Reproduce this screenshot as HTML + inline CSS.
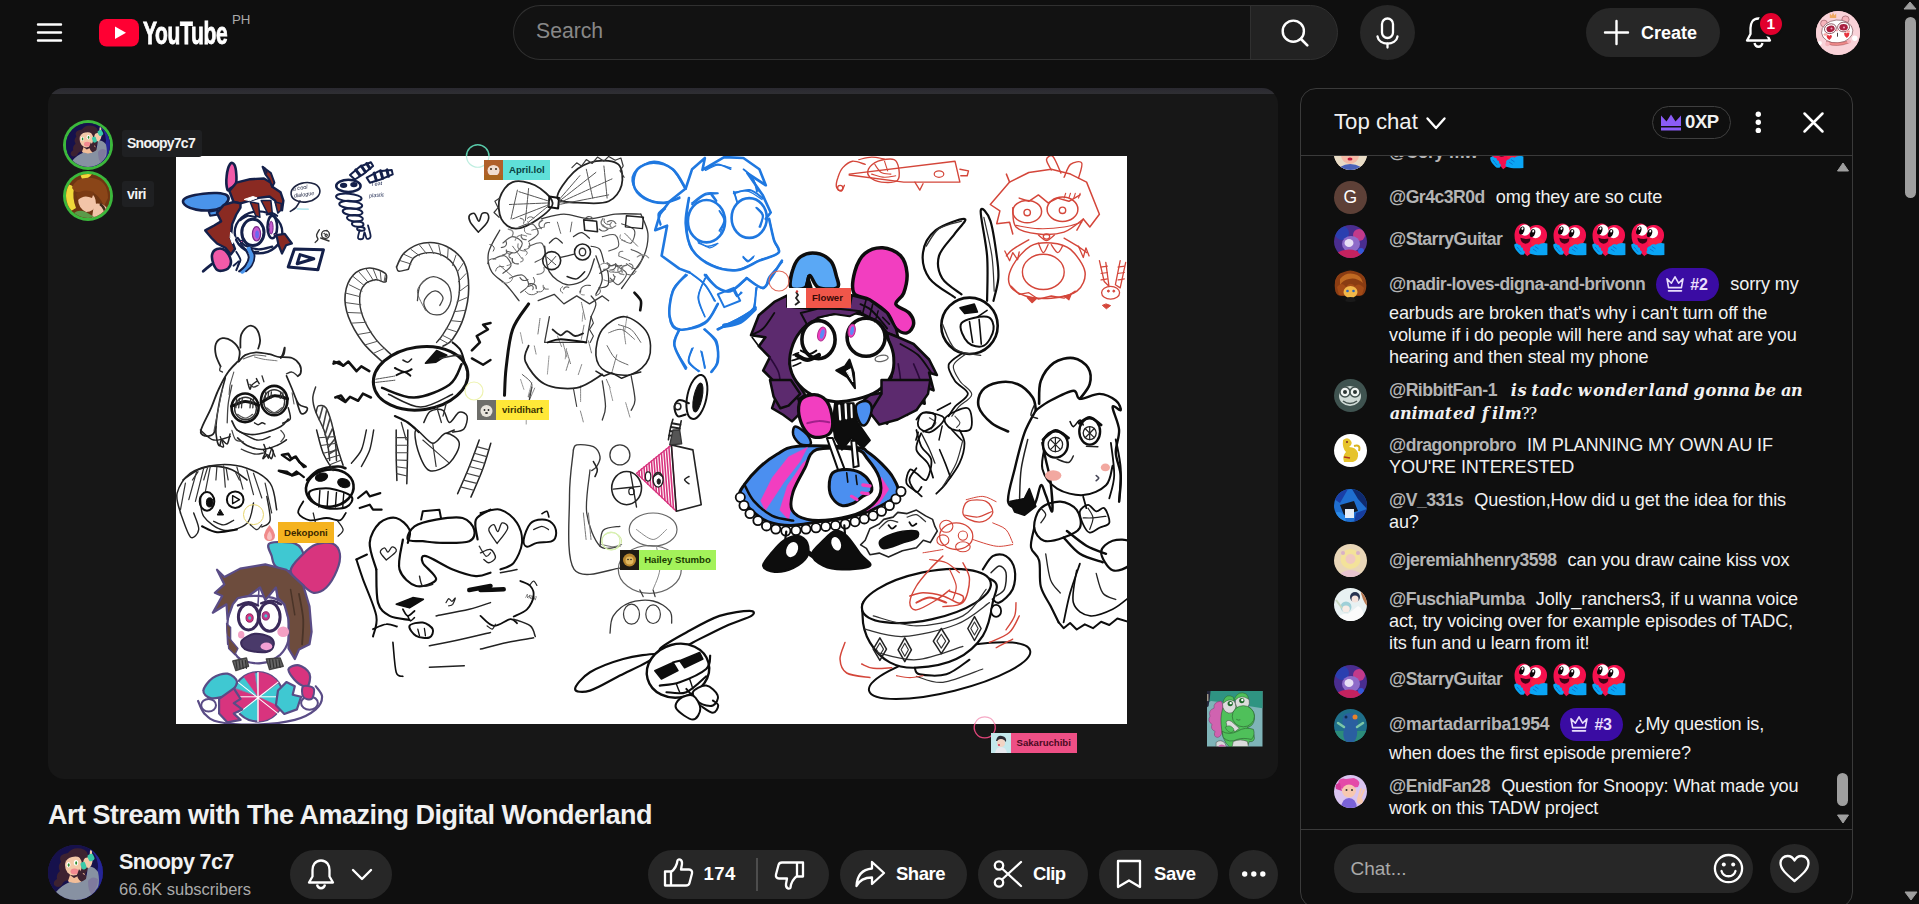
<!DOCTYPE html>
<html lang="en">
<head>
<meta charset="utf-8">
<title>Art Stream with The Amazing Digital Wonderland - YouTube</title>
<style>
*{box-sizing:border-box;margin:0;padding:0}
html,body{width:1919px;height:904px;overflow:hidden;background:#0f0f0f}
body{position:relative;font-family:"Liberation Sans",sans-serif;color:#f1f1f1}
.abs{position:absolute}
.t{position:absolute;white-space:nowrap;line-height:1}
svg{position:absolute;overflow:visible}
.pill{position:absolute;background:#272727;border-radius:25px}
.b{font-weight:bold}
/* chat */
.av{position:absolute;left:1334px;width:33px;height:33px;border-radius:50%;overflow:hidden}
.msg{position:absolute;left:1389px;width:430px;font-size:18.1px;line-height:22px;color:#f1f1f1;letter-spacing:-0.13px}
.au{color:#b4b4b4;font-weight:bold;margin-right:11px;letter-spacing:-0.5px;font-size:17.6px}
.em{display:inline-block;width:33.600px;height:33.600px;vertical-align:middle;margin:0 2.600px;position:relative}
.em svg{position:absolute;left:0;top:0}
.bdg{display:inline-block;vertical-align:middle;width:63px;height:33px;border-radius:17px;background:#3a0ca3;margin-right:11px;position:relative;top:-0.300px}
.bdg span{position:absolute;left:34px;top:8.5px;font-size:16px;font-weight:bold;color:#e9defc;line-height:1;letter-spacing:-0.3px}
.mbi{font-family:"DejaVu Math TeX Gyre","DejaVu Serif",serif;font-size:16.2px;letter-spacing:-1.1px;word-spacing:0.5px}
.av{left:33px}
/* tags on video */
.tag{position:absolute;height:20px;font-size:9.600px;line-height:20px;color:#111;font-weight:bold;white-space:nowrap}
.tag i{position:absolute;left:0;top:0;width:19px;height:20px;display:block}
.tag span{position:absolute;left:25px;top:0}
</style>
</head>
<body>
<!-- ============ MASTHEAD ============ -->
<div id="masthead">
  <svg class="abs" style="left:37px;top:20px" width="25" height="25" viewBox="0 0 25 25"><path d="M1 4.5h23M1 12.5h23M1 20.5h23" stroke="#fff" stroke-width="2.4" stroke-linecap="round" fill="none"/></svg>
  <svg class="abs" style="left:99px;top:19px" width="40" height="28" viewBox="0 0 40 28"><rect x="0" y="0" width="40" height="27.5" rx="7.5" ry="8" fill="#ff0033"/><path d="M16 7.5 L27 13.8 L16 20z" fill="#fff"/></svg>
  <div class="t b" id="ytword" style="left:142.500px;top:17px;font-size:32px;color:#fff;transform-origin:0 0;transform:scaleX(0.655);letter-spacing:-0.5px;-webkit-text-stroke:0.9px #fff">YouTube</div>
  <div class="t" id="ph" style="left:232px;top:13px;font-size:13.3px;color:#aaa">PH</div>

  <div class="abs" style="left:513px;top:5px;width:738px;height:55px;border:1px solid #303030;border-right:none;border-radius:28px 0 0 28px;background:#121212"></div>
  <div class="t" id="searchph" style="left:536px;top:20px;font-size:21.2px;color:#888">Search</div>
  <div class="abs" style="left:1250px;top:5px;width:88px;height:55px;border:1px solid #303030;border-radius:0 28px 28px 0;background:#222"></div>
  <svg style="left:1278px;top:16px" width="34" height="34" viewBox="0 0 34 34"><circle cx="15.3" cy="15.2" r="10.6" fill="none" stroke="#fff" stroke-width="2.4"/><path d="M23 23 L29.3 29.3" stroke="#fff" stroke-width="2.6" stroke-linecap="round"/></svg>
  <div class="abs" style="left:1360px;top:5px;width:55px;height:55px;border-radius:50%;background:#272727"></div>
  <svg style="left:1373px;top:15px" width="30" height="36" viewBox="0 0 30 36"><rect x="9" y="3.5" width="11" height="19.5" rx="5.5" fill="none" stroke="#fff" stroke-width="2.3"/><path d="M4.5 21.5 C6 31 23 31 24.5 21.5" fill="none" stroke="#fff" stroke-width="2.3" stroke-linecap="round"/><path d="M14.5 28.5V32.5" stroke="#fff" stroke-width="2.3" stroke-linecap="round"/></svg>

  <div class="pill" style="left:1586px;top:8px;width:134px;height:49px"></div>
  <svg style="left:1604px;top:20px" width="25" height="25" viewBox="0 0 25 25"><path d="M12.5 1v23M1 12.5h23" stroke="#fff" stroke-width="2.4" stroke-linecap="round"/></svg>
  <div class="t b" id="create" style="left:1641px;top:23.500px;font-size:18px;color:#fff">Create</div>

  <svg style="left:1744px;top:15px" width="30" height="36" viewBox="0 0 30 36"><path d="M14.5 3.5 C8.5 3.5 6.5 8.5 6.5 13 V19 L3 25.5 H26 L22.5 19 V13 C22.500 8.5 20.500 3.500 14.500 3.500Z" fill="none" stroke="#fff" stroke-width="2.3" stroke-linejoin="round"/><path d="M10.500 28 C11.500 33 17.500 33 18.500 28" fill="none" stroke="#fff" stroke-width="2.3"/></svg>
  <div class="abs" style="left:1758px;top:11px;width:26px;height:26px;border-radius:50%;background:#e1002d;border:2px solid #0f0f0f"></div>
  <div class="t b" style="left:1766.500px;top:15.500px;font-size:15.500px;color:#fff">1</div>

  <div class="abs" id="meav" style="left:1816px;top:11px;width:44px;height:44px;border-radius:50%;overflow:hidden;background:#f7c6cc">
    <svg style="left:0;top:0" width="44" height="44" viewBox="0 0 44 44"><rect width="44" height="44" fill="#f9d2d8"/><path d="M13.800 7 L13.800 2.500 L15.800 4.500 L17 1.600 L18.500 4.500 L20.200 2.300 L20.200 7Z" fill="#f0a860"/><circle cx="8" cy="12.500" r="3.400" fill="#f6b4bc" stroke="#7a3a44" stroke-width="0.500"/><circle cx="29.500" cy="8.500" r="3.600" fill="#f6b4bc" stroke="#7a3a44" stroke-width="0.500"/><ellipse cx="21.200" cy="20.500" rx="15.700" ry="11.500" fill="#fff" stroke="#6b3a42" stroke-width="0.600" transform="rotate(-5 21.200 20.500)"/><ellipse cx="14.400" cy="17.700" rx="6" ry="4.800" fill="#fff" stroke="#6b2a35" stroke-width="0.700" transform="rotate(-15 14.400 17.700)"/><ellipse cx="27.600" cy="16" rx="6" ry="4.800" fill="#fff" stroke="#6b2a35" stroke-width="0.700" transform="rotate(-5 27.600 16)"/><ellipse cx="14.600" cy="17.900" rx="4.200" ry="3.200" fill="#a8203f" transform="rotate(-15 14.600 17.900)"/><ellipse cx="27.600" cy="16.200" rx="4.200" ry="3.200" fill="#a8203f"/><circle cx="15.500" cy="17.500" r="1" fill="#f5a0c0"/><circle cx="28" cy="16.500" r="1" fill="#f5a0c0"/><path d="M10.500 25 Q12 23 13.300 25 Q14.600 23 16 25 Q16 27 13.300 29 Q10.500 27 10.500 25Z" fill="#e8323d"/><path d="M28 22.500 Q29.500 20.500 30.800 22.500 Q32 20.500 33.500 22.500 Q33.500 25 30.800 27 Q28 25 28 22.500Z" fill="#e8323d"/><ellipse cx="9.500" cy="23.500" rx="2" ry="1.300" fill="#f7a8a8"/><ellipse cx="32" cy="20.500" rx="2.200" ry="1.300" fill="#f7a8a8"/><path d="M21.500 21.800 V25.700" stroke="#3a2a2a" stroke-width="0.900"/><circle cx="21" cy="19.500" r="0.900" fill="#f29aa0"/><path d="M10.500 30.500 Q21 33.500 33.500 29.500 L33 32 Q21 36.500 11.500 33Z" fill="#f08a8a" stroke="#8a3a40" stroke-width="0.400"/><circle cx="11.500" cy="33" r="2.300" fill="#f6b4bc"/><circle cx="33" cy="30.500" r="2" fill="#f6b4bc"/><circle cx="3.900" cy="32" r="2" fill="#fff"/><circle cx="38.800" cy="27.300" r="2.700" fill="#fff"/></svg>
  </div>
</div>

<!-- page scrollbar -->
<div class="abs" style="left:1905px;top:17px;width:11px;height:181px;border-radius:6px;background:#9f9f9f"></div>
<svg style="left:1903px;top:1px" width="14" height="9" viewBox="0 0 14 9"><path d="M7 1 L13 8 H1Z" fill="#9f9f9f" stroke="#9f9f9f" stroke-linejoin="round" stroke-width="1"/></svg>
<svg style="left:1904px;top:891px" width="14" height="10" viewBox="0 0 14 10"><path d="M1 1 H13 L7 9Z" fill="#9f9f9f" stroke="#9f9f9f" stroke-linejoin="round" stroke-width="1"/></svg>

<!-- ============ PLAYER ============ -->
<div id="player" class="abs" style="left:48px;top:88px;width:1230px;height:691px;border-radius:16px;background:#171717;overflow:hidden">
  <div class="abs" style="left:0;top:0;width:1230px;height:6px;background:linear-gradient(#2a2930,#2f2f33)"></div>
  <div class="abs" id="canvas" style="left:127.500px;top:68px;width:951px;height:567.500px;background:#fff;overflow:hidden">
<svg class="abs" style="left:0;top:0;filter:blur(0.5px)" width="951" height="567.5" viewBox="175.5 156 951 567.5" font-family="Liberation Sans, sans-serif">
<path d="M182.6 200.6C183.1 199 185.5 197.6 188.8 196.5C192.2 195.3 198 194.3 202.7 193.7C207.3 193.1 212.6 192.8 216.5 193C220.4 193.3 224.3 193.8 226.2 195.1C228 196.4 228.5 198.6 227.6 200.6C226.6 202.7 223.6 205.9 220.6 207.6C217.6 209.2 213.7 210 209.6 210.3C205.4 210.7 199.7 210.3 195.7 209.6C191.8 208.9 188.3 207.7 186.1 206.2C183.9 204.7 182.1 202.3 182.6 200.6Z" fill="#4a94ea" stroke="#14204a" stroke-width="2.6" stroke-linecap="round" stroke-linejoin="round"/>
<path d="M208.2 211.7L216.5 210.3L217.9 214.5L209.6 215.8Z" fill="#4a94ea" stroke="#14204a" stroke-width="2" stroke-linecap="round" stroke-linejoin="round"/>
<path d="M226.9 189.6C226.2 187.5 225.7 180 226.2 175.7C226.6 171.5 228.4 165.8 229.6 164C230.9 162.1 232.7 163 233.8 164.7C234.8 166.4 235.6 171.1 235.8 174.4C236.1 177.6 236.1 181.7 235.2 184C234.2 186.3 231.7 187.3 230.3 188.2C228.9 189.1 227.6 191.6 226.9 189.6Z" fill="#f25aa8" stroke="#14204a" stroke-width="2.6" stroke-linecap="round" stroke-linejoin="round"/>
<ellipse cx="258" cy="232.4" rx="23.8" ry="21" fill="#fff" stroke="#14204a" stroke-width="2.4"/>
<path d="M228.9 191L235.8 182.7L249.7 179.2L263.5 178.5L270.4 182.7L271.8 186.8L280.1 192.3L282.9 200.6L281.5 210.3L277.3 207.6L274.6 200.6L269 196.5L258 197.9L249.7 200.6L240 203.4L233.1 202Z" fill="#8a2a22" stroke="#14204a" stroke-width="2.4" stroke-linecap="round" stroke-linejoin="round"/>
<path d="M233.1 202L223.4 204.8L216.5 213.1L220.6 221.4L213.7 225.5L204.7 230.4L211 238L216.5 243.5L224.8 247.7L230.3 254.6L234.5 249L230.3 238L231.7 224.1L235.8 214.5L240 207.6L240 203.4Z" fill="#8a2a22" stroke="#14204a" stroke-width="2.4" stroke-linecap="round" stroke-linejoin="round"/>
<path d="M262.1 166.8L270.4 173L273.9 182.7L271.8 186.8L269 179.9L264.9 174.4Z" fill="#8a2a22" stroke="#14204a" stroke-width="2" stroke-linecap="round" stroke-linejoin="round"/>
<path d="M262.1 166.8C262.6 167.1 264.2 167.8 264.9 168.8C265.6 169.9 266 172.3 266.3 173" fill="none" stroke="#14204a" stroke-width="1.5" stroke-linecap="round" stroke-linejoin="round"/>
<path d="M249.7 202L255.2 215.8L259.4 217.2L258 203.4Z" fill="#8a2a22" stroke="#14204a" stroke-width="1.5" stroke-linecap="round" stroke-linejoin="round"/>
<path d="M260.7 200.6L267.7 214.5L271.8 213.1L270.4 200.6Z" fill="#8a2a22" stroke="#14204a" stroke-width="1.5" stroke-linecap="round" stroke-linejoin="round"/>
<path d="M274.6 202L277.3 213.1L280.4 210.3L280.8 203.4Z" fill="#8a2a22" stroke="#14204a" stroke-width="1.5" stroke-linecap="round" stroke-linejoin="round"/>
<path d="M230.3 232.4L234.7 238L232 243.8L229.8 238Z" fill="#fff" stroke="#fff" stroke-width="1" stroke-linecap="round" stroke-linejoin="round"/>
<path d="M244.1 199.3L252.4 196.5L256.6 197.9L249.7 200.6Z" fill="#fff" stroke="#fff" stroke-width="1" stroke-linecap="round" stroke-linejoin="round"/>
<ellipse cx="252.4" cy="232.4" rx="11.1" ry="13.1" fill="#fff" stroke="#14204a" stroke-width="3"/>
<ellipse cx="256" cy="233.8" rx="4.1" ry="7.2" fill="#c65ad0" stroke="#7a2a8a" stroke-width="1.2"/>
<ellipse cx="256.6" cy="234.5" rx="1.9" ry="4.1" fill="#6a6af0" stroke="none" stroke-width="0"/>
<ellipse cx="271.8" cy="226.9" rx="4.8" ry="11.3" fill="#fff" stroke="#14204a" stroke-width="2.6"/>
<ellipse cx="270.7" cy="227.6" rx="1.9" ry="6.4" fill="#c65ad0" stroke="#7a2a8a" stroke-width="1"/>
<path d="M240 220C241.2 219.3 244.4 216.3 246.9 215.8C249.4 215.4 253.8 217 255.2 217.2" fill="none" stroke="#14204a" stroke-width="2.2" stroke-linecap="round" stroke-linejoin="round"/>
<path d="M266.3 214.5C267.2 214.2 270.1 212.9 271.8 213.1C273.5 213.3 275.8 215.4 276.6 215.8" fill="none" stroke="#14204a" stroke-width="2.2" stroke-linecap="round" stroke-linejoin="round"/>
<path d="M276 235.2L284.3 233.8L291.4 243.5L285.6 245.2L281.5 253.5L278 244.9Z" fill="#8a2a22" stroke="#14204a" stroke-width="2.2" stroke-linecap="round" stroke-linejoin="round"/>
<path d="M237.2 238C238.4 239.2 240.7 243.3 244.1 245.2C247.6 247.1 253.4 249.1 258 249.3C262.6 249.5 269.5 247 271.8 246.6" fill="none" stroke="#14204a" stroke-width="2.2" stroke-linecap="round" stroke-linejoin="round"/>
<path d="M240 243.5C241.2 244.7 243.9 249 246.9 250.4C249.9 251.8 256.1 251.6 258 251.8" fill="none" stroke="#14204a" stroke-width="1.6" stroke-linecap="round" stroke-linejoin="round"/>
<ellipse cx="241.1" cy="241.4" rx="1.4" ry="1.1" fill="#f25aa8" stroke="#14204a" stroke-width="1.2"/>
<ellipse cx="274.6" cy="234.5" rx="1.1" ry="1.1" fill="#f25aa8" stroke="#14204a" stroke-width="1.2"/>
<path d="M211.6 254.6C212.2 252 214.3 249.7 216.5 249C218.7 248.3 222.5 248.6 224.8 250.4C227.1 252.3 229.9 257.1 230.3 260.1C230.8 263.1 229.6 266.6 227.6 268.4C225.5 270.2 220.3 271.3 217.9 270.6C215.5 269.9 214.1 266.9 213 264.3C212 261.6 211.1 257.1 211.6 254.6Z" fill="#f25aa8" stroke="#14204a" stroke-width="2.6" stroke-linecap="round" stroke-linejoin="round"/>
<path d="M248.3 249C248.8 250.2 251.3 253.2 251.3 256C251.3 258.7 249.9 263.1 248.3 265.6C246.7 268.2 242.8 270.5 241.7 271.4" fill="none" stroke="#4a94ea" stroke-width="4.5" stroke-linecap="round" stroke-linejoin="round"/>
<path d="M245.5 250.4C246 251.6 248.4 254.8 248.3 257.3C248.2 259.9 246.5 263.3 244.8 265.6C243.2 268 239.7 270.5 238.6 271.4" fill="none" stroke="#14204a" stroke-width="2" stroke-linecap="round" stroke-linejoin="round"/>
<path d="M251.1 249C251.6 250.2 254.1 253.2 254.1 256C254.1 258.7 252.8 263.1 251.3 265.6C249.9 268.2 246.5 270.5 245.5 271.4" fill="none" stroke="#14204a" stroke-width="1.8" stroke-linecap="round" stroke-linejoin="round"/>
<path d="M202.7 271.2C204 270 209.6 265.4 211 264.3" fill="none" stroke="#14204a" stroke-width="2.8" stroke-linecap="round" stroke-linejoin="round"/>
<path d="M233.1 265.6C234.1 264.9 238.4 260.7 238.9 261.5C239.4 262.2 236.4 268.6 235.8 270.1" fill="none" stroke="#14204a" stroke-width="2" stroke-linecap="round" stroke-linejoin="round"/>
<path d="M235.8 251.8C236.5 253.2 239.8 257.8 240 260.1C240.2 262.4 237.7 264.7 237.2 265.6" fill="none" stroke="#14204a" stroke-width="1.8" stroke-linecap="round" stroke-linejoin="round"/>
<ellipse cx="305" cy="192.3" rx="14.5" ry="9.7" fill="none" stroke="#1d2440" stroke-width="1.6" transform="rotate(-8 305 192.3)"/>
<path d="M299.5 200.9C298.8 202 296.9 205.8 295.3 207.6C293.7 209.3 290.7 210.8 289.8 211.4" fill="none" stroke="#1d2440" stroke-width="1.6" stroke-linecap="round" stroke-linejoin="round"/>
<text x="292.5" y="190.7" font-size="5.6" fill="#1d2440" font-style="italic" font-weight="normal" transform="rotate(-8 292.5 190.7)">a cool</text>
<text x="293.7" y="197.6" font-size="5.4" fill="#1d2440" font-style="italic" font-weight="normal" transform="rotate(-8 293.7 197.6)">dialogue</text>
<path d="M296.7 208.9C298.5 209 305.9 209.2 307.8 209.2" fill="none" stroke="#9fe0e8" stroke-width="1.2" stroke-linecap="round" stroke-linejoin="round"/>
<ellipse cx="325" cy="234.5" rx="3.9" ry="3.9" fill="none" stroke="#333" stroke-width="1.4"/>
<ellipse cx="323.7" cy="233.6" rx="0.4" ry="0.4" fill="#333" stroke="#333" stroke-width="1"/>
<ellipse cx="326.4" cy="230.4" rx="0.4" ry="0.4" fill="#333" stroke="#333" stroke-width="1"/>
<ellipse cx="325.7" cy="235.2" rx="1.1" ry="1.1" fill="none" stroke="#333" stroke-width="1.2"/>
<path d="M318.8 229.7C318.4 230.6 316.3 233.6 316.1 235.2C315.8 236.8 317.7 238.2 317.4 239.4C317.2 240.6 315.1 241.9 314.7 242.4" fill="none" stroke="#333" stroke-width="1.4" stroke-linecap="round" stroke-linejoin="round"/>
<path d="M320.2 238C321.6 238.5 327.1 240.5 328.5 241" fill="none" stroke="#333" stroke-width="1.4" stroke-linecap="round" stroke-linejoin="round"/>
<path d="M293.9 249L323 249.7L317.4 269.8L287.7 267Z" fill="none" stroke="#14204a" stroke-width="3" stroke-linecap="round" stroke-linejoin="round"/>
<path d="M299.5 254.6L313.3 258.7L296.7 263.7Z" fill="none" stroke="#14204a" stroke-width="3" stroke-linecap="round" stroke-linejoin="round"/>
<path d="M349.5 175L359.2 166.7L370.4 162.2L372.6 166L362.4 174.4L354.4 179.5Z" fill="#fff" stroke="#14204a" stroke-width="2" stroke-linecap="round" stroke-linejoin="round"/>
<path d="M366.2 177.6L378.4 171.2L391.2 169.9L392.2 174.4L380 179.5L369.4 182.7Z" fill="#fff" stroke="#14204a" stroke-width="2" stroke-linecap="round" stroke-linejoin="round"/>
<path d="M355.3 169.9L359.2 175" fill="none" stroke="#14204a" stroke-width="3" stroke-linecap="round" stroke-linejoin="round"/>
<path d="M360.8 166L364.9 171.8" fill="none" stroke="#14204a" stroke-width="3" stroke-linecap="round" stroke-linejoin="round"/>
<path d="M366.2 163.5L369.4 168.6" fill="none" stroke="#14204a" stroke-width="3" stroke-linecap="round" stroke-linejoin="round"/>
<path d="M373.6 173.1L375.8 180.1" fill="none" stroke="#14204a" stroke-width="3" stroke-linecap="round" stroke-linejoin="round"/>
<path d="M380 170.8L382.2 178.2" fill="none" stroke="#14204a" stroke-width="3" stroke-linecap="round" stroke-linejoin="round"/>
<path d="M386.4 169.9L388 176.3" fill="none" stroke="#14204a" stroke-width="3" stroke-linecap="round" stroke-linejoin="round"/>
<ellipse cx="347.9" cy="185.9" rx="12.2" ry="6.1" fill="#fff" stroke="#14204a" stroke-width="2.5"/>
<ellipse cx="343.1" cy="185.3" rx="2.9" ry="1.9" fill="#14204a" stroke="#14204a" stroke-width="1.5"/>
<ellipse cx="353.4" cy="184.6" rx="2.9" ry="1.9" fill="#14204a" stroke="#14204a" stroke-width="1.5"/>
<ellipse cx="348.3" cy="197.5" rx="12.8" ry="3.8" fill="none" stroke="#14204a" stroke-width="2" transform="rotate(5 348.3 197.5)"/>
<ellipse cx="350.2" cy="204.8" rx="11.5" ry="3.8" fill="none" stroke="#14204a" stroke-width="2" transform="rotate(5 350.2 204.8)"/>
<ellipse cx="352.1" cy="211.9" rx="9.9" ry="3.5" fill="none" stroke="#14204a" stroke-width="2" transform="rotate(5 352.1 211.9)"/>
<ellipse cx="354.4" cy="218.3" rx="8" ry="3.2" fill="none" stroke="#14204a" stroke-width="2" transform="rotate(5 354.4 218.3)"/>
<ellipse cx="357.2" cy="224.1" rx="5.8" ry="2.6" fill="none" stroke="#14204a" stroke-width="2" transform="rotate(5 357.2 224.1)"/>
<ellipse cx="360.4" cy="228.9" rx="3.8" ry="1.9" fill="none" stroke="#14204a" stroke-width="2" transform="rotate(5 360.4 228.9)"/>
<path d="M359.2 230.2C358.9 231.5 357 236.8 357.6 238.2C358.1 239.6 361.3 239.5 362.4 238.5C363.4 237.5 363.3 232.1 364 232.1C364.6 232.1 365.2 237.7 366.2 238.5C367.2 239.2 369.9 238.8 370.1 236.6C370.3 234.4 367.9 227.2 367.5 225.3" fill="none" stroke="#14204a" stroke-width="1.8" stroke-linecap="round" stroke-linejoin="round"/>
<text x="371.3" y="185.9" font-size="5.4" fill="#14204a" font-style="italic" font-weight="normal" transform="rotate(-5 371.3 185.9)">I eat</text>
<text x="368.8" y="197.5" font-size="5.4" fill="#14204a" font-style="italic" font-weight="normal" transform="rotate(-5 368.8 197.5)">plastic</text>
<path d="M477.8 232.1C476.5 230.4 471.3 224.9 469.8 222.1C468.3 219.4 468.1 217.2 468.8 215.7C469.5 214.3 472.3 212.6 473.9 213.5C475.5 214.4 477.1 221.2 478.4 221.2C479.7 221.2 480.1 214.7 481.6 213.5C483.1 212.3 486.6 212.7 487.4 214.1C488.3 215.6 488.4 219.1 486.8 222.1C485.2 225.1 479.3 230.4 477.8 232.1" fill="none" stroke="#222" stroke-width="1.6" stroke-linecap="round" stroke-linejoin="round"/>
<path d="M381.6 361.6C378.4 358.4 368 349.9 362.4 342.4C356.8 334.9 350.9 324.7 347.9 316.7C345 308.7 343.9 301.2 344.7 294.3C345.5 287.3 348.7 279.4 352.8 275C356.8 270.7 363.4 268.3 368.8 268C374.1 267.7 382 271.2 384.8 273.4C387.6 275.7 385.3 280.1 385.5 281.5" fill="none" stroke="#333" stroke-width="1.6" stroke-linecap="round" stroke-linejoin="round"/>
<path d="M391.2 355.2C388.6 352.5 380 345.6 375.2 339.2C370.4 332.8 365 323.7 362.4 316.7C359.7 309.8 358.9 302.8 359.2 297.5C359.4 292.1 361.3 287.6 364 284.7C366.6 281.7 372 280.3 375.2 279.8C378.4 279.4 381.5 281.8 383.2 282.1C384.9 282.4 385.1 281.6 385.5 281.5" fill="none" stroke="#333" stroke-width="1.4" stroke-linecap="round" stroke-linejoin="round"/>
<path d="M373.2 353.2L384.2 348.2" fill="none" stroke="#555" stroke-width="1" stroke-linecap="round" stroke-linejoin="round"/>
<path d="M364.8 344.8L377.2 341.2" fill="none" stroke="#555" stroke-width="1" stroke-linecap="round" stroke-linejoin="round"/>
<path d="M357.9 334.4L371.2 332.1" fill="none" stroke="#555" stroke-width="1" stroke-linecap="round" stroke-linejoin="round"/>
<path d="M351.5 323.1L365.6 322.3" fill="none" stroke="#555" stroke-width="1" stroke-linecap="round" stroke-linejoin="round"/>
<path d="M347.3 312.5L361.8 313.1" fill="none" stroke="#555" stroke-width="1" stroke-linecap="round" stroke-linejoin="round"/>
<path d="M345.9 302.7L360.4 304.7" fill="none" stroke="#555" stroke-width="1" stroke-linecap="round" stroke-linejoin="round"/>
<path d="M345.2 293.1L359.5 296.7" fill="none" stroke="#555" stroke-width="1" stroke-linecap="round" stroke-linejoin="round"/>
<path d="M348.7 284.7L361.6 291.1" fill="none" stroke="#555" stroke-width="1" stroke-linecap="round" stroke-linejoin="round"/>
<path d="M352.2 276.2L363.7 285.5" fill="none" stroke="#555" stroke-width="1" stroke-linecap="round" stroke-linejoin="round"/>
<path d="M358.8 272.4L368.2 282.9" fill="none" stroke="#555" stroke-width="1" stroke-linecap="round" stroke-linejoin="round"/>
<path d="M365.8 269.3L373.1 280.8" fill="none" stroke="#555" stroke-width="1" stroke-linecap="round" stroke-linejoin="round"/>
<path d="M372.8 269.3L377.2 280.4" fill="none" stroke="#555" stroke-width="1" stroke-linecap="round" stroke-linejoin="round"/>
<path d="M379.8 271.7L380.7 281.4" fill="none" stroke="#555" stroke-width="1" stroke-linecap="round" stroke-linejoin="round"/>
<path d="M384.9 274.4L383.5 282" fill="none" stroke="#555" stroke-width="1" stroke-linecap="round" stroke-linejoin="round"/>
<path d="M385.2 277.9L384.5 281.7" fill="none" stroke="#555" stroke-width="1" stroke-linecap="round" stroke-linejoin="round"/>
<path d="M396 267C397.4 264.6 399.5 256.6 404 252.6C408.6 248.6 416.3 244 423.3 243C430.2 241.9 439 243 445.7 246.2C452.4 249.4 459.6 255.3 463.4 262.2C467.1 269.2 468.2 278.8 468.2 287.9C468.2 296.9 466 308.2 463.4 316.7C460.7 325.3 455.6 334.2 452.1 339.2C448.7 344.1 444.1 345 442.5 346.2" fill="none" stroke="#333" stroke-width="1.6" stroke-linecap="round" stroke-linejoin="round"/>
<path d="M407.9 269.3C408.9 267.3 410 260.2 413.7 257.4C417.3 254.6 424.4 252.6 429.7 252.6C435 252.6 441.2 254.2 445.7 257.4C450.3 260.6 454.8 265.7 457 271.8C459.1 278 459.4 286.8 458.6 294.3C457.8 301.8 454.8 310 452.1 316.7C449.5 323.4 445.2 330.1 442.5 334.4C439.9 338.6 437.2 341 436.1 342.4" fill="none" stroke="#333" stroke-width="1.4" stroke-linecap="round" stroke-linejoin="round"/>
<path d="M399.6 260.6L410.5 264" fill="none" stroke="#555" stroke-width="1" stroke-linecap="round" stroke-linejoin="round"/>
<path d="M403.2 254.2L413 258.7" fill="none" stroke="#555" stroke-width="1" stroke-linecap="round" stroke-linejoin="round"/>
<path d="M410.5 249.4L419 255.8" fill="none" stroke="#555" stroke-width="1" stroke-linecap="round" stroke-linejoin="round"/>
<path d="M419 245.1L426.1 253.7" fill="none" stroke="#555" stroke-width="1" stroke-linecap="round" stroke-linejoin="round"/>
<path d="M428.3 243.7L433.3 253.7" fill="none" stroke="#555" stroke-width="1" stroke-linecap="round" stroke-linejoin="round"/>
<path d="M438.2 245.1L440.4 255.8" fill="none" stroke="#555" stroke-width="1" stroke-linecap="round" stroke-linejoin="round"/>
<path d="M447.7 248L447 259" fill="none" stroke="#555" stroke-width="1" stroke-linecap="round" stroke-linejoin="round"/>
<path d="M455.5 255.1L452 265.4" fill="none" stroke="#555" stroke-width="1" stroke-linecap="round" stroke-linejoin="round"/>
<path d="M463.4 262.2L457 271.8" fill="none" stroke="#555" stroke-width="1" stroke-linecap="round" stroke-linejoin="round"/>
<path d="M465.5 273.6L457.7 281.8" fill="none" stroke="#555" stroke-width="1" stroke-linecap="round" stroke-linejoin="round"/>
<path d="M467.6 285L458.4 291.8" fill="none" stroke="#555" stroke-width="1" stroke-linecap="round" stroke-linejoin="round"/>
<path d="M466.6 297.5L456.4 301.8" fill="none" stroke="#555" stroke-width="1" stroke-linecap="round" stroke-linejoin="round"/>
<path d="M464.4 310.3L453.6 311.7" fill="none" stroke="#555" stroke-width="1" stroke-linecap="round" stroke-linejoin="round"/>
<path d="M460.9 321.7L450 320.6" fill="none" stroke="#555" stroke-width="1" stroke-linecap="round" stroke-linejoin="round"/>
<path d="M455.9 331.7L445.7 328.5" fill="none" stroke="#555" stroke-width="1" stroke-linecap="round" stroke-linejoin="round"/>
<path d="M451.1 339.9L441.8 335.2" fill="none" stroke="#555" stroke-width="1" stroke-linecap="round" stroke-linejoin="round"/>
<path d="M446.8 343.1L439 338.8" fill="none" stroke="#555" stroke-width="1" stroke-linecap="round" stroke-linejoin="round"/>
<path d="M396 267C396.4 267.7 396.3 270.8 398.3 271.2C400.3 271.6 406.3 269.6 407.9 269.3" fill="none" stroke="#333" stroke-width="1.4" stroke-linecap="round" stroke-linejoin="round"/>
<path d="M416.9 300.7C417.4 298 417.4 288.7 420.1 284.7C422.8 280.7 428.4 276.6 432.9 276.6C437.4 276.6 444.4 280.7 447.3 284.7C450.3 288.7 451.3 295.9 450.5 300.7C449.7 305.5 446 311.4 442.5 313.5C439 315.7 432.9 315.1 429.7 313.5C426.5 311.9 423.6 307.1 423.3 303.9C423 300.7 426 296.4 428.1 294.3C430.2 292.1 433.7 290.5 436.1 291.1C438.5 291.6 442 295.1 442.5 297.5C443.1 299.9 439.9 304.2 439.3 305.5" fill="none" stroke="#444" stroke-width="1.3" stroke-linecap="round" stroke-linejoin="round"/>
<path d="M424.9 310.3C423.6 307.1 416.6 296.4 416.9 291.1C417.1 285.7 424.9 280.4 426.5 278.2" fill="none" stroke="#666" stroke-width="1" stroke-linecap="round" stroke-linejoin="round"/>
<ellipse cx="420.1" cy="378.3" rx="47.5" ry="31.4" fill="none" stroke="#111" stroke-width="3" transform="rotate(-8 420.1 378.3)"/>
<path d="M424.9 363.2L436.1 350.4L446.4 355.2L435.5 362.2Z" fill="#111" stroke="#111" stroke-width="1.5" stroke-linecap="round" stroke-linejoin="round"/>
<path d="M394.4 368C396 368.7 401.3 371.7 404 371.9C406.8 372.1 409.9 369.7 411.1 369.3" fill="none" stroke="#111" stroke-width="2" stroke-linecap="round" stroke-linejoin="round"/>
<path d="M396 375.1C397.4 374.5 401.8 371.8 404 371.9C406.3 372 408.9 375.1 409.8 375.7" fill="none" stroke="#111" stroke-width="2" stroke-linecap="round" stroke-linejoin="round"/>
<path d="M402.4 360C403.2 360.4 405.8 362.4 407.3 362.2C408.7 362.1 410.5 359.6 411.1 359" fill="none" stroke="#222" stroke-width="1.5" stroke-linecap="round" stroke-linejoin="round"/>
<path d="M381.6 387.9C386.9 389.5 402.4 398 413.7 397.5C424.9 397 441 390.2 448.9 384.7C456.8 379.1 459.1 367.6 461.1 364.2" fill="none" stroke="#111" stroke-width="2.5" stroke-linecap="round" stroke-linejoin="round"/>
<path d="M388 394.3C393.4 396.4 409.4 407.1 420.1 407.1C430.8 407.1 446.8 396.4 452.1 394.3" fill="none" stroke="#222" stroke-width="1.5" stroke-linecap="round" stroke-linejoin="round"/>
<path d="M439.3 358.4C442.5 357.9 454.5 354.9 458.6 355.2C462.6 355.5 462.6 359.2 463.4 360" fill="none" stroke="#333" stroke-width="1.5" stroke-linecap="round" stroke-linejoin="round"/>
<path d="M375.2 379.2C378.4 378.7 391.2 376.6 394.4 376" fill="none" stroke="#555" stroke-width="1" stroke-linecap="round" stroke-linejoin="round"/>
<path d="M375.2 382.4C378.4 382.1 391.2 380.6 394.4 380.2" fill="none" stroke="#555" stroke-width="1" stroke-linecap="round" stroke-linejoin="round"/>
<path d="M452.1 342.4C453.5 343.7 458.1 346.9 460.2 350.4C462.2 353.9 463.6 361.1 464.3 363.2" fill="none" stroke="#111" stroke-width="2" stroke-linecap="round" stroke-linejoin="round"/>
<path d="M333.5 361.6L343.1 365.5L347.9 361.6L356 371.2L360.8 366.4L368.8 371.2" fill="none" stroke="#111" stroke-width="2.6" stroke-linecap="round" stroke-linejoin="round"/>
<path d="M336.7 396.9L344.7 402L349.5 396.9L357.6 400.7L362.4 393.7L370.4 397.5" fill="none" stroke="#111" stroke-width="2.6" stroke-linecap="round" stroke-linejoin="round"/>
<path d="M471.4 350.4L479.4 342.4L476.2 336L487.4 329.5L482.6 324.7L490 323.1" fill="none" stroke="#111" stroke-width="2.6" stroke-linecap="round" stroke-linejoin="round"/>
<path d="M471.4 358.4L482.6 364.8L490 360" fill="none" stroke="#111" stroke-width="2.4" stroke-linecap="round" stroke-linejoin="round"/>
<path d="M220.1 366.4C219.3 364.5 216.2 358.9 215.4 355.1C214.6 351.4 214.3 346.7 215.4 343.8C216.5 341 219.3 338.7 222 338.2C224.7 337.7 228.6 339 231.4 341C234.2 343.1 237.8 347.1 238.9 350.4C240 353.7 238.2 359.1 238 360.8" fill="none" stroke="#222" stroke-width="1.8" stroke-linecap="round" stroke-linejoin="round"/>
<path d="M239.9 347.6C240 345.4 239.4 338.1 240.8 334.4C242.2 330.8 245.8 326.9 248.3 326C250.8 325 254 326.5 255.9 328.8C257.7 331.2 259.3 336.8 259.6 340.1C259.9 343.4 258.1 347.1 257.7 348.6" fill="none" stroke="#222" stroke-width="1.8" stroke-linecap="round" stroke-linejoin="round"/>
<path d="M220.1 366.4C220 367 218.9 369.2 219.2 370.2C219.5 371.1 221.5 371.7 222 372.1" fill="none" stroke="#333" stroke-width="1.3" stroke-linecap="round" stroke-linejoin="round"/>
<path d="M238 361.7C239.1 360.6 241.6 356.7 244.6 355.1C247.6 353.6 251.8 352.5 255.9 352.3C259.9 352.2 265 353.4 269 354.2C273.1 355 277.8 358.1 280.3 357C282.8 355.9 283.6 348.1 284.1 347.6C284.6 347.1 283.9 352.5 283.3 354.2C282.7 355.9 280.8 357.3 280.3 358" fill="none" stroke="#222" stroke-width="1.8" stroke-linecap="round" stroke-linejoin="round"/>
<path d="M280.3 357C282.2 357.2 288.5 356.7 291.6 358C294.7 359.2 297.7 362 299.1 364.5C300.6 367 300.6 371.1 300.2 373C299.9 374.9 297.7 375.7 297.2 376.2" fill="none" stroke="#222" stroke-width="1.8" stroke-linecap="round" stroke-linejoin="round"/>
<path d="M286 373.9C286.9 373.6 289.7 371.7 291.6 372.1C293.5 372.4 296.3 375.5 297.2 376.2" fill="none" stroke="#333" stroke-width="1.4" stroke-linecap="round" stroke-linejoin="round"/>
<path d="M242.7 358.9C244.6 358.3 250.2 355.6 254 355.1C257.7 354.7 263.4 355.9 265.3 356.1" fill="none" stroke="#666" stroke-width="1.1" stroke-linecap="round" stroke-linejoin="round"/>
<path d="M254 357C255.6 357.4 259.6 358.6 263.4 359.3C267.1 359.9 274.4 360.5 276.5 360.8" fill="none" stroke="#777" stroke-width="1" stroke-linecap="round" stroke-linejoin="round"/>
<path d="M237.1 361.7C235.5 363.4 230.8 367.5 227.7 372.1C224.5 376.6 221.1 383 218.3 389C215.4 394.9 213.7 400.9 210.7 407.8C207.8 414.7 201.3 425.7 200.4 430.4C199.4 435.1 203.1 435.4 205.1 436C207.1 436.6 210.9 435.7 212.6 434.1C214.3 432.5 215 427.8 215.4 426.6" fill="none" stroke="#222" stroke-width="1.8" stroke-linecap="round" stroke-linejoin="round"/>
<path d="M224.8 377.7C223.9 381.5 220.8 392.1 219.2 400.3C217.6 408.4 215.9 420 215.4 426.6C215 433.2 215.7 436.6 216.4 439.8C217 443 218.4 445.8 219.2 445.8C220 445.8 219.8 440.1 221.1 439.8C222.3 439.4 225.3 444.8 226.7 443.9C228.1 443 229.1 435.7 229.5 434.1" fill="none" stroke="#222" stroke-width="1.6" stroke-linecap="round" stroke-linejoin="round"/>
<path d="M231.4 385.2C230.8 388.4 228.4 397.8 227.7 404C226.9 410.3 226.9 419.7 226.7 422.8" fill="none" stroke="#444" stroke-width="1.3" stroke-linecap="round" stroke-linejoin="round"/>
<path d="M222 389C221.2 392.7 218.7 404.7 217.3 411.5C215.9 418.4 214.2 427.2 213.6 430.4" fill="none" stroke="#555" stroke-width="1.1" stroke-linecap="round" stroke-linejoin="round"/>
<path d="M233.3 372.1C232.7 374.3 230.3 381.5 229.5 385.2C228.8 389 228.8 393.1 228.6 394.6" fill="none" stroke="#555" stroke-width="1.1" stroke-linecap="round" stroke-linejoin="round"/>
<path d="M246.5 379.6C246.9 381.1 248.5 388 249.3 389C250.1 389.9 250.1 386.5 251.2 385.2C252.3 384 255.1 382.1 255.9 381.5" fill="none" stroke="#222" stroke-width="1.5" stroke-linecap="round" stroke-linejoin="round"/>
<path d="M255.9 378.6C256.3 379.5 258.2 382.9 258.7 383.7" fill="none" stroke="#222" stroke-width="1.4" stroke-linecap="round" stroke-linejoin="round"/>
<path d="M261.5 375.8C261.8 376.8 263.1 380.8 263.4 381.8" fill="none" stroke="#333" stroke-width="1.3" stroke-linecap="round" stroke-linejoin="round"/>
<path d="M249.3 384.3C249.9 384.8 251.6 386.9 253 387.1C254.5 387.3 257 385.5 257.7 385.2" fill="none" stroke="#333" stroke-width="1.2" stroke-linecap="round" stroke-linejoin="round"/>
<ellipse cx="244.6" cy="407.8" rx="13.5" ry="14.3" fill="none" stroke="#111" stroke-width="2.6"/>
<ellipse cx="245" cy="408.5" rx="10.9" ry="11.3" fill="none" stroke="#333" stroke-width="1.4"/>
<ellipse cx="273.7" cy="400.6" rx="13.2" ry="14.7" fill="none" stroke="#111" stroke-width="2.6"/>
<ellipse cx="273.7" cy="401.4" rx="10.5" ry="11.7" fill="none" stroke="#333" stroke-width="1.4"/>
<path d="M231 406.3C233.3 405.5 240.1 401.6 244.6 401.4C249.1 401.2 255.9 404.5 258.1 405.2" fill="none" stroke="#111" stroke-width="3" stroke-linecap="round" stroke-linejoin="round"/>
<path d="M260.6 402.5C262.8 401.4 269.3 396.4 273.7 395.8C278.1 395.1 284.9 398.3 287.1 398.8" fill="none" stroke="#111" stroke-width="3" stroke-linecap="round" stroke-linejoin="round"/>
<path d="M236.1 398.4C236 400 235.5 406.2 235.4 407.8" fill="none" stroke="#333" stroke-width="1.3" stroke-linecap="round" stroke-linejoin="round"/>
<path d="M238.9 398.4C238.8 400 238.3 406.2 238.2 407.8" fill="none" stroke="#333" stroke-width="1.3" stroke-linecap="round" stroke-linejoin="round"/>
<path d="M241.8 398.4C241.6 400 241.1 406.2 241 407.8" fill="none" stroke="#333" stroke-width="1.3" stroke-linecap="round" stroke-linejoin="round"/>
<path d="M250.2 398.4C250.1 400 249.6 406.2 249.5 407.8" fill="none" stroke="#333" stroke-width="1.3" stroke-linecap="round" stroke-linejoin="round"/>
<path d="M253 398.4C252.9 400 252.4 406.2 252.3 407.8" fill="none" stroke="#333" stroke-width="1.3" stroke-linecap="round" stroke-linejoin="round"/>
<path d="M265.3 391.8C265.2 392.9 264.8 397.3 264.7 398.4" fill="none" stroke="#333" stroke-width="1.3" stroke-linecap="round" stroke-linejoin="round"/>
<path d="M268.1 391.8C268 392.9 267.6 397.3 267.5 398.4" fill="none" stroke="#333" stroke-width="1.3" stroke-linecap="round" stroke-linejoin="round"/>
<path d="M270.9 391.8C270.8 392.9 270.4 397.3 270.3 398.4" fill="none" stroke="#333" stroke-width="1.3" stroke-linecap="round" stroke-linejoin="round"/>
<path d="M280.3 391.8C280.2 392.9 279.8 397.3 279.7 398.4" fill="none" stroke="#333" stroke-width="1.3" stroke-linecap="round" stroke-linejoin="round"/>
<path d="M282.6 391.8C282.5 392.9 282.1 397.3 282 398.4" fill="none" stroke="#333" stroke-width="1.3" stroke-linecap="round" stroke-linejoin="round"/>
<path d="M237.1 414.4C238.3 415 242.1 418.1 244.6 418.1C247.1 418.1 250.8 415 252.1 414.4" fill="none" stroke="#555" stroke-width="1.2" stroke-linecap="round" stroke-linejoin="round"/>
<path d="M266.2 407.8C267.5 408.6 271.2 412.5 273.7 412.5C276.2 412.5 280 408.6 281.3 407.8" fill="none" stroke="#555" stroke-width="1.2" stroke-linecap="round" stroke-linejoin="round"/>
<path d="M231.4 421C232.4 422.5 233.9 428.1 237.1 430.4C240.2 432.6 245.5 434.2 250.2 434.5C254.9 434.8 260.3 433.6 265.3 432.2C270.3 430.9 276.5 428.8 280.3 426.6C284.1 424.4 286.6 420.3 287.8 419.1" fill="none" stroke="#222" stroke-width="1.7" stroke-linecap="round" stroke-linejoin="round"/>
<path d="M254 422.8C254.6 423.1 256.5 424.7 257.7 424.7C259 424.7 260.4 423 261.5 422.8C262.6 422.7 264 423.8 264.5 424" fill="none" stroke="#222" stroke-width="1.4" stroke-linecap="round" stroke-linejoin="round"/>
<path d="M286 375.8C286.9 378 289.6 384.3 291.6 389C293.6 393.7 295.7 400.9 298.2 404C300.7 407.2 305.5 406.3 306.6 407.8C307.7 409.2 305.9 411.9 304.8 412.7C303.7 413.5 301.6 415.1 300.1 412.7C298.5 410.3 296.1 400.8 295.4 398.4" fill="none" stroke="#222" stroke-width="1.7" stroke-linecap="round" stroke-linejoin="round"/>
<path d="M287.8 407.8C288.1 409.7 290.7 416.5 289.7 419.1C288.8 421.6 283.4 422.5 282.2 423.2" fill="none" stroke="#222" stroke-width="1.5" stroke-linecap="round" stroke-linejoin="round"/>
<path d="M291.6 392.7C291.9 394.6 293.2 402.1 293.5 404" fill="none" stroke="#555" stroke-width="1.1" stroke-linecap="round" stroke-linejoin="round"/>
<path d="M237.1 437.9C238.6 439.1 242.4 443.5 246.5 445.4C250.5 447.3 256.5 449.5 261.5 449.5C266.5 449.5 272.5 447 276.5 445.4C280.6 443.8 284.4 440.7 286 439.8" fill="none" stroke="#222" stroke-width="1.6" stroke-linecap="round" stroke-linejoin="round"/>
<path d="M240.8 449.2C243 450 250.2 453.4 254 454C257.7 454.7 261.8 453.1 263.4 452.9" fill="none" stroke="#333" stroke-width="1.4" stroke-linecap="round" stroke-linejoin="round"/>
<path d="M263.4 444.5C263.7 445.6 265.4 448.7 265.3 451C265.1 453.4 262.1 457.9 262.4 458.6C262.8 459.2 265.7 454.8 267.1 454.8C268.6 454.8 270 459.2 270.9 458.6C271.8 457.9 273.1 452.9 272.8 451C272.5 449.2 269.7 447.9 269 447.3" fill="none" stroke="#222" stroke-width="1.5" stroke-linecap="round" stroke-linejoin="round"/>
<path d="M231.4 430.4C232 431.9 233.3 437.9 235.2 439.8C237.1 441.6 241.4 441.3 242.7 441.6" fill="none" stroke="#444" stroke-width="1.2" stroke-linecap="round" stroke-linejoin="round"/>
<path d="M280.3 430.4C280.9 431.3 284.1 434.1 284.1 436C284.1 437.9 280.9 440.7 280.3 441.6" fill="none" stroke="#444" stroke-width="1.2" stroke-linecap="round" stroke-linejoin="round"/>
<path d="M182.5 480C185 478.3 192.6 472.2 197.6 469.8C202.6 467.5 207 466.1 212.6 466.1C218.3 466.1 225.8 467.5 231.4 469.8C237.1 472.2 244 478.3 246.5 480" fill="none" stroke="#222" stroke-width="1.6" stroke-linecap="round" stroke-linejoin="round"/>
<path d="M197.6 471.7C196.6 473.1 192.9 478.6 191.9 480" fill="none" stroke="#333" stroke-width="1.2" stroke-linecap="round" stroke-linejoin="round"/>
<path d="M207 468C206.3 470 203.8 478 203.2 480" fill="none" stroke="#333" stroke-width="1.2" stroke-linecap="round" stroke-linejoin="round"/>
<path d="M216.4 467C216.2 469.2 215.6 477.8 215.4 480" fill="none" stroke="#333" stroke-width="1.2" stroke-linecap="round" stroke-linejoin="round"/>
<path d="M225.8 468.9C226.1 470.8 227.3 478.2 227.7 480" fill="none" stroke="#333" stroke-width="1.2" stroke-linecap="round" stroke-linejoin="round"/>
<path d="M235.2 472.7C235.8 473.9 238.3 478.8 238.9 480" fill="none" stroke="#333" stroke-width="1.2" stroke-linecap="round" stroke-linejoin="round"/>
<path d="M333 363.6L338.6 361.7L342.4 365.7" fill="none" stroke="#111" stroke-width="2.6" stroke-linecap="round" stroke-linejoin="round"/>
<path d="M334.8 397.4L340.5 395.6L344.2 400.6" fill="none" stroke="#111" stroke-width="2.6" stroke-linecap="round" stroke-linejoin="round"/>
<path d="M282.2 454.8L287.8 453.9L290.7 458.6L295.4 456.7L299.1 462.3L305.1 466.5" fill="none" stroke="#111" stroke-width="2.6" stroke-linecap="round" stroke-linejoin="round"/>
<path d="M278.4 470.8L286 471.7L291.6 475.5L297.6 473.6" fill="none" stroke="#111" stroke-width="2.6" stroke-linecap="round" stroke-linejoin="round"/>
<path d="M315.1 387.1C314.6 389 312.3 394.3 312.3 398.4C312.3 402.5 313.2 406.2 315.1 411.5C317 416.9 321.5 424.7 323.6 430.4C325.6 436 326.4 440.4 327.3 445.4C328.3 450.4 328.9 457.9 329.2 460.4" fill="none" stroke="#333" stroke-width="1.5" stroke-linecap="round" stroke-linejoin="round"/>
<path d="M315.7 412.5C316 411.4 316.3 406.7 317.9 405.9C319.6 405.1 323.2 405 325.4 407.8C327.6 410.6 329.5 417.2 331.1 422.8C332.7 428.5 334 435.4 334.8 441.6C335.7 447.9 335.8 457.3 336 460.4" fill="none" stroke="#333" stroke-width="1.5" stroke-linecap="round" stroke-linejoin="round"/>
<path d="M318.7 419.6L322.2 407" fill="none" stroke="#444" stroke-width="1.6" stroke-linecap="round" stroke-linejoin="round"/>
<path d="M322.4 427.7L326.2 409.9" fill="none" stroke="#444" stroke-width="1.6" stroke-linecap="round" stroke-linejoin="round"/>
<path d="M324.6 434.7L329.5 418.5" fill="none" stroke="#444" stroke-width="1.6" stroke-linecap="round" stroke-linejoin="round"/>
<path d="M326.2 441.1L332.2 428.2" fill="none" stroke="#444" stroke-width="1.6" stroke-linecap="round" stroke-linejoin="round"/>
<path d="M327.6 447.5L334.3 439" fill="none" stroke="#444" stroke-width="1.6" stroke-linecap="round" stroke-linejoin="round"/>
<path d="M328.4 454L335.3 449.7" fill="none" stroke="#444" stroke-width="1.6" stroke-linecap="round" stroke-linejoin="round"/>
<path d="M306.6 480C308.5 478.4 312.9 472.5 317.9 470.2C322.9 468 332.2 466.8 336.7 466.5C341.2 466.1 343.6 468 345 468.3" fill="none" stroke="#111" stroke-width="2.6" stroke-linecap="round" stroke-linejoin="round"/>
<ellipse cx="325.4" cy="475.5" rx="5.6" ry="4.1" fill="#111" stroke="#111" stroke-width="1.5" transform="rotate(-20 325.4 475.5)"/>
<path d="M394.4 416.1C396.6 417.2 403.2 419.9 407.3 422.5C411.3 425.2 416.6 430.5 418.5 432.1" fill="none" stroke="#111" stroke-width="2.2" stroke-linecap="round" stroke-linejoin="round"/>
<path d="M423.3 422.5C424.4 420.7 426.5 413.3 429.7 411.3C432.9 409.3 439.3 408.5 442.5 410.3C445.7 412.2 446.3 422.2 448.9 422.5C451.6 422.8 455.6 413.3 458.6 412.3C461.5 411.2 465.8 413.3 466.6 416.1C467.4 418.9 465.8 426.3 463.4 428.9C461 431.6 454 431.6 452.1 432.1" fill="none" stroke="#222" stroke-width="1.5" stroke-linecap="round" stroke-linejoin="round"/>
<path d="M400.8 422.5C401.6 425.4 404.9 437 405.7 439.8" fill="none" stroke="#333" stroke-width="1.3" stroke-linecap="round" stroke-linejoin="round"/>
<path d="M445.7 403.3C445.2 405.4 443.1 414 442.5 416.1" fill="none" stroke="#333" stroke-width="1.3" stroke-linecap="round" stroke-linejoin="round"/>
<path d="M436.1 406.5C436.9 409.2 440.1 419.9 440.9 422.5" fill="none" stroke="#333" stroke-width="1.3" stroke-linecap="round" stroke-linejoin="round"/>
<path d="M552.1 202.9C551.6 197.3 541.2 188.7 534.5 185.3C527.8 181.8 517.9 179.9 512.1 182.1C506.2 184.2 501.1 191.9 499.2 198.1C497.4 204.2 498.2 213.9 500.8 218.9C503.5 224 509.1 228.6 515.3 228.6C521.4 228.6 531.6 223.2 537.7 218.9C543.9 214.7 552.7 208.5 552.1 202.9Z" fill="none" stroke="#222" stroke-width="1.8" stroke-linecap="round" stroke-linejoin="round"/>
<path d="M556.9 198.1C555.3 193 566.6 178.6 573 172.4C579.4 166.3 587.9 162.6 595.4 161.2C602.9 159.9 613.6 160.4 617.9 164.4C622.1 168.4 622.7 179.1 621.1 185.3C619.5 191.4 614.7 198.4 608.2 201.3C601.8 204.2 591.1 203.4 582.6 202.9C574 202.4 558.6 203.2 556.9 198.1Z" fill="none" stroke="#222" stroke-width="1.8" stroke-linecap="round" stroke-linejoin="round"/>
<path d="M548.9 196.5L558.6 198.1L557.6 208.4L548 207.1Z" fill="none" stroke="#111" stroke-width="2" stroke-linecap="round" stroke-linejoin="round"/>
<path d="M548.9 201.3C543.9 199.7 523.6 193.3 518.5 191.7" fill="none" stroke="#555" stroke-width="1" stroke-linecap="round" stroke-linejoin="round"/>
<path d="M548.9 202.9C542.3 203.2 515.5 204.2 508.9 204.5" fill="none" stroke="#555" stroke-width="1" stroke-linecap="round" stroke-linejoin="round"/>
<path d="M548.9 204.5C542.8 206.9 518.2 216.5 512.1 218.9" fill="none" stroke="#555" stroke-width="1" stroke-linecap="round" stroke-linejoin="round"/>
<path d="M548.9 205.1C545.5 208 531.6 219.3 528.1 222.1" fill="none" stroke="#555" stroke-width="1" stroke-linecap="round" stroke-linejoin="round"/>
<path d="M558.6 199.7C562 195.7 575.9 179.7 579.4 175.6" fill="none" stroke="#555" stroke-width="1" stroke-linecap="round" stroke-linejoin="round"/>
<path d="M558.6 201.3C564.7 196.5 589.3 177.3 595.4 172.4" fill="none" stroke="#555" stroke-width="1" stroke-linecap="round" stroke-linejoin="round"/>
<path d="M558.6 202.9C567.4 198.9 602.6 182.9 611.5 178.9" fill="none" stroke="#555" stroke-width="1" stroke-linecap="round" stroke-linejoin="round"/>
<path d="M558.6 204.5C566.8 202.9 600 196.5 608.2 194.9" fill="none" stroke="#555" stroke-width="1" stroke-linecap="round" stroke-linejoin="round"/>
<path d="M528.1 188.5C527.6 193.8 525.4 215.2 524.9 220.5" fill="none" stroke="#555" stroke-width="1" stroke-linecap="round" stroke-linejoin="round"/>
<path d="M516.9 190.1C515.8 194.9 511.5 214.1 510.5 218.9" fill="none" stroke="#555" stroke-width="1" stroke-linecap="round" stroke-linejoin="round"/>
<path d="M585.8 169.2C586.9 174 591.1 193.3 592.2 198.1" fill="none" stroke="#555" stroke-width="1" stroke-linecap="round" stroke-linejoin="round"/>
<path d="M603.4 166C604 171.4 606.1 192.7 606.6 198.1" fill="none" stroke="#555" stroke-width="1" stroke-linecap="round" stroke-linejoin="round"/>
<path d="M571.4 167.6L576.2 162.8L581 166L585.8 159.6L591.6 163.5L597 157.1L603.4 161.2L608.2 156.4L614.7 160.3L620.4 158L622.7 166L619.5 170.8L623.6 177.3" fill="none" stroke="#3a3a3a" stroke-width="1.2" stroke-linecap="round" stroke-linejoin="round"/>
<path d="M499.2 198.1L494.4 201.3L497.6 207.7L493.5 212.5L498.6 217.3" fill="none" stroke="#3a3a3a" stroke-width="1.2" stroke-linecap="round" stroke-linejoin="round"/>
<path d="M499.2 230.2C497.4 233.9 489.4 245.7 488 252.6C486.7 259.5 488.3 266.5 491.2 271.8C494.2 277.2 501.1 279.8 505.6 284.7C510.2 289.5 516.3 298 518.5 300.7" fill="none" stroke="#3a3a3a" stroke-width="1.3" stroke-linecap="round" stroke-linejoin="round"/>
<path d="M640.3 214.1C641.5 217.3 646.8 226.4 647.4 233.4C647.9 240.3 646.3 248.9 643.5 255.8C640.7 262.7 634.4 269.6 630.7 275C626.9 280.5 622.7 286.3 621.1 288.5" fill="none" stroke="#3a3a3a" stroke-width="1.3" stroke-linecap="round" stroke-linejoin="round"/>
<path d="M540.9 218.9C544.7 218.1 555.3 214.1 563.4 214.1C571.4 214.1 580.5 218.9 589 218.9C597.6 218.9 606.1 214.9 614.7 214.1C623.2 213.3 636 214.1 640.3 214.1" fill="none" stroke="#3a3a3a" stroke-width="1.3" stroke-linecap="round" stroke-linejoin="round"/>
<path d="M502.4 243C504 241.9 508.9 236.6 512.1 236.6C515.3 236.6 521.1 240.3 521.7 243C522.2 245.7 517.9 251.3 515.3 252.6C512.6 253.9 507.3 251.3 505.6 251" fill="none" stroke="#555" stroke-width="1.1" stroke-linecap="round" stroke-linejoin="round"/>
<path d="M492.8 259C494.7 258.5 501.1 254.7 504 255.8C507 256.9 510.7 262.5 510.5 265.4C510.2 268.4 503.8 272.1 502.4 273.4" fill="none" stroke="#555" stroke-width="1.1" stroke-linecap="round" stroke-linejoin="round"/>
<path d="M508.9 278.2C511 277.7 518.5 274 521.7 275C524.9 276.1 528.4 281.7 528.1 284.7C527.8 287.6 521.4 291.3 520.1 292.7" fill="none" stroke="#555" stroke-width="1.1" stroke-linecap="round" stroke-linejoin="round"/>
<path d="M518.5 226.9C520.6 226.4 528.1 222.7 531.3 223.7C534.5 224.8 538.2 230.4 537.7 233.4C537.2 236.3 529.7 240 528.1 241.4" fill="none" stroke="#555" stroke-width="1.1" stroke-linecap="round" stroke-linejoin="round"/>
<path d="M621.1 223.7C623.2 224.8 632.3 226.9 633.9 230.2C635.5 233.4 632.8 241.4 630.7 243C628.6 244.6 622.7 240.3 621.1 239.8" fill="none" stroke="#555" stroke-width="1.1" stroke-linecap="round" stroke-linejoin="round"/>
<path d="M630.7 249.4C632.6 250.5 641.1 252.6 641.9 255.8C642.7 259 638.2 267.3 635.5 268.6C632.8 270 627.5 264.6 625.9 263.8" fill="none" stroke="#555" stroke-width="1.1" stroke-linecap="round" stroke-linejoin="round"/>
<path d="M614.7 265.4C616.5 266.8 625.3 270.2 625.9 273.4C626.4 276.6 620.5 283.9 617.9 284.7C615.2 285.5 611.2 279.3 609.8 278.2" fill="none" stroke="#555" stroke-width="1.1" stroke-linecap="round" stroke-linejoin="round"/>
<path d="M528.1 246.2C530.2 245.7 538.2 241.4 540.9 243C543.6 244.6 545.2 252.6 544.1 255.8C543.1 259 536.1 261.1 534.5 262.2" fill="none" stroke="#555" stroke-width="1.1" stroke-linecap="round" stroke-linejoin="round"/>
<path d="M601.8 236.6C604 236.3 612 233.4 614.7 235C617.3 236.6 618.9 243.5 617.9 246.2C616.8 248.9 609.8 250.2 608.2 251" fill="none" stroke="#555" stroke-width="1.1" stroke-linecap="round" stroke-linejoin="round"/>
<path d="M512.1 246.2C513.7 248.3 520.1 256.9 521.7 259" fill="none" stroke="#666" stroke-width="1" stroke-linecap="round" stroke-linejoin="round"/>
<path d="M499.2 265.4C501.4 267.3 509.9 274.8 512.1 276.6" fill="none" stroke="#666" stroke-width="1" stroke-linecap="round" stroke-linejoin="round"/>
<path d="M531.3 230.2C533.4 229.6 542 227.5 544.1 226.9" fill="none" stroke="#666" stroke-width="1" stroke-linecap="round" stroke-linejoin="round"/>
<path d="M624.3 233.4C626.4 235.5 635 244 637.1 246.2" fill="none" stroke="#666" stroke-width="1" stroke-linecap="round" stroke-linejoin="round"/>
<path d="M617.9 255.8C619.7 256.6 627.2 259.8 629.1 260.6" fill="none" stroke="#666" stroke-width="1" stroke-linecap="round" stroke-linejoin="round"/>
<path d="M556.9 222.1C557.5 224 559.6 231.5 560.2 233.4" fill="none" stroke="#666" stroke-width="1" stroke-linecap="round" stroke-linejoin="round"/>
<path d="M571.4 222.1C571.1 223.7 570 230.2 569.8 231.8" fill="none" stroke="#666" stroke-width="1" stroke-linecap="round" stroke-linejoin="round"/>
<path d="M583.2 219.9L596.1 221.2L597 231.8L584.2 230.2Z" fill="none" stroke="#222" stroke-width="1.6" stroke-linecap="round" stroke-linejoin="round"/>
<path d="M625.9 215.7L642.9 217.3L641.9 228.6L624.9 226.9Z" fill="none" stroke="#222" stroke-width="1.4" stroke-linecap="round" stroke-linejoin="round"/>
<path d="M511.5 259.3C511.5 259.8 512.2 261.3 511.9 262.2C511.7 263.1 510.9 264.1 509.9 264.6C509 265.2 507.1 265.3 506.5 265.5" fill="none" stroke="#777" stroke-width="1" stroke-linecap="round" stroke-linejoin="round"/>
<path d="M585.5 217.7C585.9 217.5 587 216.7 587.9 216.6C588.7 216.5 589.9 216.7 590.6 217C591.3 217.4 592 218.5 592.3 218.8" fill="none" stroke="#555" stroke-width="1.1" stroke-linecap="round" stroke-linejoin="round"/>
<path d="M612.8 274.6C613 275.1 614.2 276.7 614.2 277.7C614.1 278.8 613.5 280 612.7 280.8C611.8 281.6 609.7 282.2 609.1 282.4" fill="none" stroke="#555" stroke-width="1.1" stroke-linecap="round" stroke-linejoin="round"/>
<path d="M532.3 223.7C532 223.8 530.8 224.2 530.1 224.1C529.4 224.1 528.6 223.7 528.1 223.3C527.7 222.9 527.4 221.9 527.3 221.7" fill="none" stroke="#666" stroke-width="1" stroke-linecap="round" stroke-linejoin="round"/>
<path d="M636.7 256.9C637.3 256.6 639.1 255.2 640.5 254.9C641.9 254.6 643.7 254.8 645 255.3C646.3 255.8 647.7 257.5 648.2 257.9" fill="none" stroke="#888" stroke-width="1.1" stroke-linecap="round" stroke-linejoin="round"/>
<path d="M525.6 239.7C525.1 239.6 523.4 239.5 522.6 239.1C521.8 238.6 521.1 237.8 520.8 237C520.5 236.3 521 235 521 234.6" fill="none" stroke="#666" stroke-width="1.3" stroke-linecap="round" stroke-linejoin="round"/>
<path d="M621.7 272.1C621.6 271.6 620.7 270.1 620.8 269.1C620.9 268.1 621.7 267 622.5 266.3C623.4 265.6 625.5 265.3 626.1 265.1" fill="none" stroke="#666" stroke-width="1.3" stroke-linecap="round" stroke-linejoin="round"/>
<path d="M563.1 289.3C563.2 289.1 563.5 288.1 564 287.7C564.5 287.3 565.4 286.9 566.1 286.9C566.8 286.8 567.9 287.3 568.3 287.4" fill="none" stroke="#666" stroke-width="1.1" stroke-linecap="round" stroke-linejoin="round"/>
<path d="M613.7 270.5C613.4 270.7 612.8 271.6 612.1 271.8C611.5 272.1 610.6 272.1 609.9 272C609.2 271.9 608.3 271.2 608 271" fill="none" stroke="#666" stroke-width="1" stroke-linecap="round" stroke-linejoin="round"/>
<path d="M580 292.3C580.1 291.7 580 289.4 580.8 288.2C581.6 287.1 583.2 286 584.8 285.5C586.3 285 589.1 285.5 590 285.5" fill="none" stroke="#555" stroke-width="1.1" stroke-linecap="round" stroke-linejoin="round"/>
<path d="M628.8 263.5C629.3 263.7 630.8 264.1 631.4 264.7C632.1 265.3 632.5 266.2 632.5 267C632.5 267.8 631.6 268.9 631.4 269.3" fill="none" stroke="#666" stroke-width="1.1" stroke-linecap="round" stroke-linejoin="round"/>
<path d="M529.3 285C529.6 285.1 531 285.3 531.6 285.8C532.2 286.2 532.7 287 532.8 287.6C532.9 288.3 532.3 289.3 532.2 289.6" fill="none" stroke="#777" stroke-width="1.3" stroke-linecap="round" stroke-linejoin="round"/>
<path d="M606.6 262.7C606.9 263 608.3 263.5 608.8 264.1C609.2 264.6 609.5 265.5 609.4 266.2C609.3 266.9 608.3 267.8 608.1 268.2" fill="none" stroke="#777" stroke-width="1.1" stroke-linecap="round" stroke-linejoin="round"/>
<path d="M489.3 244.6C489.8 244.8 491.7 245.2 492.4 245.8C493.1 246.5 493.7 247.5 493.8 248.4C493.8 249.3 492.9 250.6 492.7 251.1" fill="none" stroke="#555" stroke-width="1" stroke-linecap="round" stroke-linejoin="round"/>
<path d="M512.3 277.5C512 278.1 511.6 280.2 510.6 281.1C509.6 282 507.9 282.8 506.4 283C504.9 283.2 502.4 282.4 501.6 282.3" fill="none" stroke="#888" stroke-width="1" stroke-linecap="round" stroke-linejoin="round"/>
<path d="M615.3 225.8C614.6 226.2 612.6 227.8 611 228.2C609.4 228.5 607.2 228.3 605.8 227.7C604.3 227.1 602.8 225.2 602.2 224.7" fill="none" stroke="#777" stroke-width="1.1" stroke-linecap="round" stroke-linejoin="round"/>
<path d="M562.3 293C561.9 292.7 560.6 291.9 560.2 291.1C559.9 290.4 559.8 289.4 560.1 288.6C560.4 287.9 561.8 287 562.1 286.7" fill="none" stroke="#666" stroke-width="1" stroke-linecap="round" stroke-linejoin="round"/>
<path d="M623.4 274.6C622.7 274.4 620.5 274.2 619.5 273.6C618.5 273 617.6 271.9 617.3 270.9C617.1 269.9 617.8 268.2 617.9 267.6" fill="none" stroke="#888" stroke-width="1.3" stroke-linecap="round" stroke-linejoin="round"/>
<path d="M487.1 263.8C487.3 263.3 487.4 261.5 488.1 260.7C488.8 259.9 490.1 259.1 491.3 258.9C492.5 258.6 494.6 259.1 495.3 259.1" fill="none" stroke="#555" stroke-width="1" stroke-linecap="round" stroke-linejoin="round"/>
<path d="M530.4 234.3C529.8 234.2 527.5 234.2 526.4 233.6C525.4 233.1 524.3 232 524 231C523.6 230 524.1 228.3 524.1 227.8" fill="none" stroke="#777" stroke-width="1" stroke-linecap="round" stroke-linejoin="round"/>
<path d="M598.3 287.8C598.6 288.3 599.8 289.7 599.9 290.8C599.9 291.8 599.4 293 598.7 293.8C597.9 294.6 595.8 295.3 595.2 295.6" fill="none" stroke="#555" stroke-width="1" stroke-linecap="round" stroke-linejoin="round"/>
<path d="M608.5 265.1C608.4 265.5 608.5 266.8 608.1 267.4C607.7 268.1 606.8 268.8 606 269C605.2 269.3 603.6 269.2 603.1 269.2" fill="none" stroke="#555" stroke-width="1.1" stroke-linecap="round" stroke-linejoin="round"/>
<path d="M495.2 271C495.4 270.5 495.6 268.9 496.3 268.1C497 267.3 498.3 266.7 499.5 266.5C500.7 266.2 502.6 266.8 503.3 266.8" fill="none" stroke="#666" stroke-width="1" stroke-linecap="round" stroke-linejoin="round"/>
<path d="M606.5 228.1C605.8 227.8 603.2 227 602.2 226.1C601.2 225.1 600.5 223.5 600.6 222.3C600.6 221 602.1 219.1 602.4 218.5" fill="none" stroke="#777" stroke-width="1.3" stroke-linecap="round" stroke-linejoin="round"/>
<path d="M618.4 254.9C618.4 254.6 618.2 253.6 618.4 253C618.7 252.5 619.3 251.9 620 251.6C620.6 251.3 621.9 251.3 622.3 251.3" fill="none" stroke="#777" stroke-width="1.1" stroke-linecap="round" stroke-linejoin="round"/>
<path d="M527.5 279.5C527 279.7 525.5 280.5 524.4 280.5C523.4 280.6 522.1 280.2 521.3 279.7C520.5 279.2 519.8 277.9 519.5 277.5" fill="none" stroke="#555" stroke-width="1.1" stroke-linecap="round" stroke-linejoin="round"/>
<path d="M526.8 218.4C527.1 218.1 528 217.2 528.8 217C529.6 216.8 530.6 216.8 531.4 217C532.2 217.3 533.1 218.2 533.4 218.4" fill="none" stroke="#666" stroke-width="1" stroke-linecap="round" stroke-linejoin="round"/>
<path d="M510.6 258.3C510.4 258.1 509.3 257.6 508.9 257.1C508.6 256.6 508.5 255.8 508.6 255.3C508.8 254.7 509.7 254 509.9 253.7" fill="none" stroke="#666" stroke-width="1.1" stroke-linecap="round" stroke-linejoin="round"/>
<path d="M620.9 265.4C620.5 265.5 619.4 266.1 618.7 266.1C617.9 266.1 617 265.8 616.4 265.4C615.8 265 615.3 264 615.1 263.8" fill="none" stroke="#555" stroke-width="1.3" stroke-linecap="round" stroke-linejoin="round"/>
<path d="M543.4 267.2C543.4 267.8 544 269.7 543.6 270.8C543.2 271.8 542.1 273 540.9 273.6C539.7 274.2 537.3 274.3 536.5 274.4" fill="none" stroke="#777" stroke-width="1.1" stroke-linecap="round" stroke-linejoin="round"/>
<path d="M532.9 277.5C533.1 278.1 534.3 280 534.2 281.2C534.1 282.5 533.2 283.9 532.2 284.8C531.1 285.7 528.5 286.2 527.8 286.5" fill="none" stroke="#555" stroke-width="1" stroke-linecap="round" stroke-linejoin="round"/>
<path d="M607 221.8C607.5 221.6 609 220.7 610.1 220.6C611.1 220.5 612.5 220.8 613.3 221.3C614.2 221.8 615 223.2 615.3 223.5" fill="none" stroke="#666" stroke-width="1.3" stroke-linecap="round" stroke-linejoin="round"/>
<path d="M614 264.5C613.5 264.7 612.3 265.6 611.4 265.7C610.4 265.8 609.2 265.6 608.4 265.2C607.6 264.8 606.9 263.6 606.6 263.3" fill="none" stroke="#555" stroke-width="1.3" stroke-linecap="round" stroke-linejoin="round"/>
<path d="M528.8 283.8C529.4 283.8 531.4 283.5 532.4 283.8C533.5 284.1 534.6 284.9 535.2 285.7C535.8 286.5 535.7 288.1 535.8 288.5" fill="none" stroke="#555" stroke-width="1.3" stroke-linecap="round" stroke-linejoin="round"/>
<path d="M635.5 271.2C635.1 271.6 634.4 273.3 633.4 274C632.4 274.6 630.9 275 629.6 275C628.3 275 626.4 274.1 625.8 273.9" fill="none" stroke="#555" stroke-width="1" stroke-linecap="round" stroke-linejoin="round"/>
<path d="M505.8 249.9C505.8 250.3 506.4 251.6 506.2 252.3C506 253 505.4 253.9 504.6 254.3C503.9 254.8 502.3 255 501.8 255.1" fill="none" stroke="#666" stroke-width="1.1" stroke-linecap="round" stroke-linejoin="round"/>
<path d="M547.7 289.2C547.3 289.1 545.8 289.3 545 289C544.2 288.8 543.4 288.2 543 287.6C542.6 286.9 542.8 285.8 542.7 285.4" fill="none" stroke="#888" stroke-width="1.3" stroke-linecap="round" stroke-linejoin="round"/>
<path d="M624.6 240.8C624.1 240.7 622.2 240.5 621.3 240C620.5 239.5 619.7 238.5 619.5 237.7C619.2 236.8 619.8 235.4 619.9 234.9" fill="none" stroke="#888" stroke-width="1" stroke-linecap="round" stroke-linejoin="round"/>
<path d="M519.7 218.3C520.1 218.4 521.6 218.6 522.3 219.1C522.9 219.6 523.5 220.4 523.6 221.1C523.7 221.8 523.1 222.9 523 223.3" fill="none" stroke="#777" stroke-width="1.1" stroke-linecap="round" stroke-linejoin="round"/>
<path d="M583.8 294.9C583.4 294.9 581.9 295 581.2 294.7C580.5 294.4 579.7 293.8 579.4 293.2C579 292.6 579.2 291.5 579.2 291.1" fill="none" stroke="#888" stroke-width="1" stroke-linecap="round" stroke-linejoin="round"/>
<path d="M517.9 263.8C517.3 263.8 515.4 263.9 514.4 263.5C513.5 263.1 512.5 262.3 512.1 261.5C511.6 260.7 511.9 259.1 511.9 258.7" fill="none" stroke="#555" stroke-width="1.3" stroke-linecap="round" stroke-linejoin="round"/>
<path d="M543.7 287.3C543.5 287.8 543.5 289.4 542.8 290.1C542.2 290.9 541 291.6 540 291.8C538.9 292.1 537 291.7 536.4 291.6" fill="none" stroke="#666" stroke-width="1" stroke-linecap="round" stroke-linejoin="round"/>
<path d="M540.8 228.5C540.4 228.1 538.8 226.7 538.6 225.7C538.3 224.7 538.5 223.3 539.1 222.4C539.7 221.4 541.7 220.5 542.2 220.1" fill="none" stroke="#666" stroke-width="1.3" stroke-linecap="round" stroke-linejoin="round"/>
<path d="M614.8 276.5C614.4 277 613.6 279 612.5 279.8C611.3 280.6 609.5 281.1 608 281.2C606.5 281.2 604.3 280.1 603.5 279.9" fill="none" stroke="#777" stroke-width="1" stroke-linecap="round" stroke-linejoin="round"/>
<path d="M598.2 267.1C598.6 266.6 599.4 264.9 600.5 264.3C601.5 263.7 603.1 263.3 604.4 263.3C605.7 263.4 607.6 264.4 608.3 264.6" fill="none" stroke="#888" stroke-width="1" stroke-linecap="round" stroke-linejoin="round"/>
<path d="M543.7 226.1C543.8 225.8 543.8 224.5 544.2 224C544.7 223.4 545.5 222.8 546.4 222.6C547.2 222.4 548.7 222.6 549.1 222.6" fill="none" stroke="#666" stroke-width="1.1" stroke-linecap="round" stroke-linejoin="round"/>
<path d="M524.9 251C524.1 250.9 521.6 250.8 520.3 250.2C519.1 249.6 518 248.4 517.5 247.4C517 246.3 517.6 244.3 517.6 243.7" fill="none" stroke="#777" stroke-width="1.1" stroke-linecap="round" stroke-linejoin="round"/>
<path d="M609.3 224.5C608.7 224.4 606.8 224.4 605.9 224C605 223.6 604.1 222.7 603.7 221.9C603.3 221 603.7 219.6 603.8 219.1" fill="none" stroke="#555" stroke-width="1" stroke-linecap="round" stroke-linejoin="round"/>
<path d="M521.9 257.8C522 258 522.7 258.9 522.7 259.4C522.7 260 522.4 260.7 521.9 261.1C521.5 261.5 520.3 261.9 520 262" fill="none" stroke="#888" stroke-width="1.1" stroke-linecap="round" stroke-linejoin="round"/>
<path d="M537.2 292.4C536.5 292.7 534.6 294.3 533.2 294.6C531.7 294.9 529.7 294.7 528.3 294.2C527 293.6 525.5 291.9 524.9 291.4" fill="none" stroke="#666" stroke-width="1" stroke-linecap="round" stroke-linejoin="round"/>
<path d="M622.5 265.8C622.4 266.4 622.3 268.7 621.5 269.7C620.7 270.8 619 271.9 617.5 272.3C616 272.7 613.3 272.1 612.5 272.1" fill="none" stroke="#888" stroke-width="1.3" stroke-linecap="round" stroke-linejoin="round"/>
<path d="M607.6 229C607.2 229.3 605.9 230.5 604.9 230.8C603.8 231.1 602.4 231.1 601.3 230.8C600.3 230.5 599.1 229.3 598.6 229" fill="none" stroke="#555" stroke-width="1.1" stroke-linecap="round" stroke-linejoin="round"/>
<path d="M524.5 250.3C524.8 250.5 525.9 251.1 526.3 251.6C526.6 252.1 526.8 252.9 526.6 253.5C526.5 254.1 525.6 254.8 525.4 255.1" fill="none" stroke="#666" stroke-width="1" stroke-linecap="round" stroke-linejoin="round"/>
<path d="M505.4 241.2C505.5 241.7 506.2 243.1 506 244C505.8 244.9 505.1 246 504.2 246.6C503.4 247.2 501.4 247.4 500.8 247.6" fill="none" stroke="#555" stroke-width="1.1" stroke-linecap="round" stroke-linejoin="round"/>
<path d="M507.8 229.1C508.3 229.3 510.2 229.6 511.1 230.2C511.9 230.9 512.5 231.9 512.7 232.8C512.8 233.7 512 235.1 511.9 235.5" fill="none" stroke="#888" stroke-width="1.3" stroke-linecap="round" stroke-linejoin="round"/>
<path d="M514.6 240.3C515 239.7 515.6 237.6 516.7 236.7C517.8 235.8 519.7 235.1 521.3 235C522.8 234.9 525.3 235.9 526.1 236.1" fill="none" stroke="#888" stroke-width="1.1" stroke-linecap="round" stroke-linejoin="round"/>
<path d="M612.1 227.9C611.8 227.7 610.5 227.1 610.1 226.5C609.7 226 609.5 225.1 609.6 224.5C609.8 223.8 610.7 222.9 610.9 222.6" fill="none" stroke="#888" stroke-width="1.3" stroke-linecap="round" stroke-linejoin="round"/>
<path d="M511.7 253.2C511.4 253.3 510.4 253.9 509.8 254C509.1 254.1 508.2 254 507.6 253.7C507 253.4 506.4 252.5 506.2 252.3" fill="none" stroke="#555" stroke-width="1" stroke-linecap="round" stroke-linejoin="round"/>
<path d="M528.7 242.9C528.8 243.4 529.6 245 529.4 245.9C529.2 246.9 528.3 248 527.4 248.6C526.5 249.2 524.4 249.5 523.8 249.6" fill="none" stroke="#666" stroke-width="1.1" stroke-linecap="round" stroke-linejoin="round"/>
<path d="M614.7 264.2C614.7 264.7 615.3 266.2 615 267.1C614.7 267.9 613.8 268.9 612.9 269.4C612 269.9 610 270 609.4 270.1" fill="none" stroke="#555" stroke-width="1.1" stroke-linecap="round" stroke-linejoin="round"/>
<path d="M548.5 356C548.2 359 547.2 371.1 546.9 374.1" fill="none" stroke="#999" stroke-width="1" stroke-linecap="round" stroke-linejoin="round"/>
<path d="M582.4 312.9C582.3 314.3 581.8 319.8 581.7 321.2" fill="none" stroke="#999" stroke-width="1" stroke-linecap="round" stroke-linejoin="round"/>
<path d="M534.2 388.1C533.5 389.8 530.4 396.6 529.7 398.3" fill="none" stroke="#888" stroke-width="1" stroke-linecap="round" stroke-linejoin="round"/>
<path d="M519.9 332.6C520.3 334.4 521.7 341.5 522.1 343.3" fill="none" stroke="#999" stroke-width="1" stroke-linecap="round" stroke-linejoin="round"/>
<path d="M531.3 382.7C530.6 385 528.2 394.2 527.6 396.5" fill="none" stroke="#999" stroke-width="1" stroke-linecap="round" stroke-linejoin="round"/>
<path d="M605.9 379.4C606.5 380.8 608.9 386.3 609.6 387.7" fill="none" stroke="#777" stroke-width="1" stroke-linecap="round" stroke-linejoin="round"/>
<path d="M568.8 360.1C568.3 361.8 566.1 368.7 565.6 370.4" fill="none" stroke="#777" stroke-width="1" stroke-linecap="round" stroke-linejoin="round"/>
<path d="M583.5 325.2C583.1 327.5 581.3 336.9 580.8 339.3" fill="none" stroke="#777" stroke-width="1" stroke-linecap="round" stroke-linejoin="round"/>
<path d="M622.9 326.8C623.2 329.6 624.8 341.1 625.2 343.9" fill="none" stroke="#888" stroke-width="1" stroke-linecap="round" stroke-linejoin="round"/>
<path d="M557 336C557.6 337.8 560.3 344.8 561 346.5" fill="none" stroke="#888" stroke-width="1" stroke-linecap="round" stroke-linejoin="round"/>
<path d="M626.6 315.7C626.2 318.4 624.5 329.2 624.1 331.9" fill="none" stroke="#999" stroke-width="1" stroke-linecap="round" stroke-linejoin="round"/>
<path d="M565.7 349.5C566.4 351.8 569.3 361.2 570 363.6" fill="none" stroke="#777" stroke-width="1" stroke-linecap="round" stroke-linejoin="round"/>
<path d="M533.8 345.9C534.1 347.3 535.3 352.7 535.6 354.1" fill="none" stroke="#888" stroke-width="1" stroke-linecap="round" stroke-linejoin="round"/>
<path d="M587.9 340.8C588.4 342.8 590.5 350.9 591 352.9" fill="none" stroke="#777" stroke-width="1" stroke-linecap="round" stroke-linejoin="round"/>
<path d="M580.1 385.8C580.1 388.4 580.1 398.9 580.1 401.5" fill="none" stroke="#888" stroke-width="1" stroke-linecap="round" stroke-linejoin="round"/>
<path d="M616.3 354.8C615.5 357.5 612.5 368.6 611.7 371.4" fill="none" stroke="#777" stroke-width="1" stroke-linecap="round" stroke-linejoin="round"/>
<path d="M581.2 364.5C580.6 366.2 578.4 372.9 577.8 374.6" fill="none" stroke="#888" stroke-width="1" stroke-linecap="round" stroke-linejoin="round"/>
<path d="M539.5 318.4C539.1 321 537.8 331.4 537.4 334" fill="none" stroke="#777" stroke-width="1" stroke-linecap="round" stroke-linejoin="round"/>
<path d="M526 407.5C526 410.2 525.7 421.3 525.7 424.1" fill="none" stroke="#999" stroke-width="1" stroke-linecap="round" stroke-linejoin="round"/>
<path d="M566.1 348.5C565.9 350.3 564.9 357.2 564.7 358.9" fill="none" stroke="#999" stroke-width="1" stroke-linecap="round" stroke-linejoin="round"/>
<path d="M520.1 379.4C520.6 381 522.8 387.7 523.4 389.4" fill="none" stroke="#999" stroke-width="1" stroke-linecap="round" stroke-linejoin="round"/>
<path d="M562.3 342.2C563 344.7 565.7 354.6 566.3 357" fill="none" stroke="#888" stroke-width="1" stroke-linecap="round" stroke-linejoin="round"/>
<path d="M580.9 302.4C581.6 305.3 584.1 316.6 584.7 319.4" fill="none" stroke="#777" stroke-width="1" stroke-linecap="round" stroke-linejoin="round"/>
<path d="M625.2 402.7C625.9 405.1 628.7 414.7 629.4 417.1" fill="none" stroke="#888" stroke-width="1" stroke-linecap="round" stroke-linejoin="round"/>
<path d="M579.9 411C580.4 412.8 582.4 420.1 582.8 421.9" fill="none" stroke="#888" stroke-width="1" stroke-linecap="round" stroke-linejoin="round"/>
<path d="M609.2 388C609.7 390.1 611.7 398.5 612.2 400.6" fill="none" stroke="#999" stroke-width="1" stroke-linecap="round" stroke-linejoin="round"/>
<path d="M544.1 246.2C544.9 250.5 545.2 265.4 548.9 271.8C552.7 278.2 560.4 283.6 566.6 284.7C572.7 285.7 581.3 282.5 585.8 278.2C590.3 274 592.5 262.2 593.8 259" fill="none" stroke="#3a3a3a" stroke-width="1.4" stroke-linecap="round" stroke-linejoin="round"/>
<ellipse cx="551.2" cy="260.6" rx="9" ry="9" fill="none" stroke="#222" stroke-width="1.6"/>
<ellipse cx="582" cy="252" rx="8" ry="8" fill="none" stroke="#222" stroke-width="1.6"/>
<path d="M546.7 257.4C548.1 258.6 553.9 263.6 555.3 264.8" fill="none" stroke="#444" stroke-width="1" stroke-linecap="round" stroke-linejoin="round"/>
<path d="M555.3 256.4C554 257.9 548.7 263.9 547.3 265.4" fill="none" stroke="#444" stroke-width="1" stroke-linecap="round" stroke-linejoin="round"/>
<ellipse cx="582" cy="252" rx="3.2" ry="3.8" fill="none" stroke="#333" stroke-width="1.4"/>
<path d="M560.2 257.4C562.4 256.9 571.4 254.7 573.6 254.2" fill="none" stroke="#333" stroke-width="1.2" stroke-linecap="round" stroke-linejoin="round"/>
<path d="M566.6 276.6C568.2 277 573.2 279.7 576.2 278.9C579.1 278.1 582.9 273 584.2 271.8" fill="none" stroke="#222" stroke-width="1.5" stroke-linecap="round" stroke-linejoin="round"/>
<path d="M548.9 243C550 242.2 553.2 238.2 555.3 238.2C557.5 238.2 560.7 242.2 561.8 243" fill="none" stroke="#333" stroke-width="1.3" stroke-linecap="round" stroke-linejoin="round"/>
<path d="M573 236.6C574.3 235.9 578.3 232.5 581 232.7C583.7 233 587.7 237.3 589 238.2" fill="none" stroke="#333" stroke-width="1.3" stroke-linecap="round" stroke-linejoin="round"/>
<path d="M595.4 255.8C596.5 259.5 601.8 271.8 601.8 278.2C601.8 284.7 596.5 291.6 595.4 294.3" fill="none" stroke="#3a3a3a" stroke-width="1.3" stroke-linecap="round" stroke-linejoin="round"/>
<path d="M590.6 246.2C592.1 246.7 597.1 246.7 599.3 249.4C601.4 252.1 602.7 260.1 603.4 262.2" fill="none" stroke="#3a3a3a" stroke-width="1.2" stroke-linecap="round" stroke-linejoin="round"/>
<path d="M599.3 273.4C600.5 272.9 605.3 268.4 606.6 270.2C608 272.1 608.7 281.7 607.6 284.7C606.5 287.6 601.5 287.3 600.2 287.9" fill="none" stroke="#3a3a3a" stroke-width="1.2" stroke-linecap="round" stroke-linejoin="round"/>
<path d="M537.7 300.7L553.7 294.3L563.4 303.9L576.2 295.9L589 303.9L601.8 295.9L608.2 300.7" fill="none" stroke="#3a3a3a" stroke-width="1.3" stroke-linecap="round" stroke-linejoin="round"/>
<path d="M528.1 303.9C525.4 308.2 515.8 318.9 512.1 329.5C508.3 340.2 507 357.1 505.6 368C504.3 379 504.3 390.7 504 395.3" fill="none" stroke="#111" stroke-width="3" stroke-linecap="round" stroke-linejoin="round"/>
<path d="M633.9 292.7C635 294 639.3 297.8 640.3 300.7C641.3 303.6 639.8 308.7 639.7 310.3" fill="none" stroke="#111" stroke-width="2.6" stroke-linecap="round" stroke-linejoin="round"/>
<path d="M548.9 316.7L544.1 342.4L585.8 342.4L590.6 316.7" fill="none" stroke="#3a3a3a" stroke-width="1.3" stroke-linecap="round" stroke-linejoin="round"/>
<path d="M552.1 329.5C553.5 330.5 557.7 335 560.2 335.3C562.6 335.6 564.2 331 566.6 331.1C569 331.3 571.9 335.6 574.6 336C577.3 336.3 581.3 333.8 582.6 333.4" fill="none" stroke="#222" stroke-width="1.8" stroke-linecap="round" stroke-linejoin="round"/>
<path d="M528.1 345.6C527.6 348.2 522.2 355.2 524.9 361.6C527.6 368 535.6 379.7 544.1 384C552.7 388.4 566.6 389.5 576.2 387.9C585.8 386.3 597.6 376.7 601.8 374.4" fill="none" stroke="#222" stroke-width="1.8" stroke-linecap="round" stroke-linejoin="round"/>
<path d="M547.3 342.4C549.5 341.8 553.7 339.2 560.2 339.2C566.6 339.2 581.5 341.8 585.8 342.4" fill="none" stroke="#111" stroke-width="2" stroke-linecap="round" stroke-linejoin="round"/>
<path d="M595.4 355.2C594.9 348.2 597 336 601.8 329.5C606.6 323.1 616.8 316.2 624.3 316.7C631.8 317.3 642.7 325.8 646.7 332.8C650.7 339.7 651 351.5 648.3 358.4C645.7 365.3 637.9 372.3 630.7 374.4C623.5 376.6 610.9 374.4 605 371.2C599.2 368 596 362.1 595.4 355.2Z" fill="none" stroke="#222" stroke-width="1.6" stroke-linecap="round" stroke-linejoin="round"/>
<path d="M608.2 332.8C610.4 332.2 616.8 328.5 621.1 329.5C625.3 330.6 631.8 337.6 633.9 339.2" fill="none" stroke="#666" stroke-width="1" stroke-linecap="round" stroke-linejoin="round"/>
<path d="M606.6 345.6C608 347.7 611.2 355.2 614.7 358.4C618.1 361.6 625.3 363.7 627.5 364.8" fill="none" stroke="#666" stroke-width="1" stroke-linecap="round" stroke-linejoin="round"/>
<path d="M617.9 324.7C620 325.5 626.9 326.6 630.7 329.5C634.4 332.5 638.7 340.2 640.3 342.4" fill="none" stroke="#666" stroke-width="1" stroke-linecap="round" stroke-linejoin="round"/>
<path d="M595.4 371.2L603.4 376L611.5 372.8L621.1 378.3L630.7 374.4L640.3 371.9" fill="none" stroke="#222" stroke-width="1.5" stroke-linecap="round" stroke-linejoin="round"/>
<path d="M601.8 380.8C602.4 385.1 605 400 605 406.5C605 413 602.4 417.7 601.8 420" fill="none" stroke="#3a3a3a" stroke-width="1.3" stroke-linecap="round" stroke-linejoin="round"/>
<path d="M630.7 376C631.3 380 634.5 394.4 634.5 400.1C634.5 405.8 631.3 408.6 630.7 410.3" fill="none" stroke="#3a3a3a" stroke-width="1.3" stroke-linecap="round" stroke-linejoin="round"/>
<path d="M531.3 387.3C530.8 390.5 528.1 401.6 528.1 406.5C528.1 411.4 530.8 415 531.3 416.8" fill="none" stroke="#3a3a3a" stroke-width="1.3" stroke-linecap="round" stroke-linejoin="round"/>
<path d="M573 388.9C573.5 391.8 575.7 403.6 576.2 406.5" fill="none" stroke="#3a3a3a" stroke-width="1.1" stroke-linecap="round" stroke-linejoin="round"/>
<path d="M590.6 316.7C591.4 314.6 595.4 307.4 595.4 303.9C595.4 300.4 591.4 297.2 590.6 295.9" fill="none" stroke="#3a3a3a" stroke-width="1.2" stroke-linecap="round" stroke-linejoin="round"/>
<path d="M590.6 316.7L592.9 323.1L589 329.5L592.9 336L589.7 342.4" fill="none" stroke="#3a3a3a" stroke-width="1.1" stroke-linecap="round" stroke-linejoin="round"/>
<path d="M521.7 374.4C523.3 376 530.2 380.3 531.3 384C532.4 387.8 528.6 394.7 528.1 396.9" fill="none" stroke="#555" stroke-width="1" stroke-linecap="round" stroke-linejoin="round"/>
<path d="M685.2 188.5C683.1 185.3 677.7 173.5 672.4 169.2C667 165 659 162.8 653.1 162.8C647.3 162.8 640.4 165.5 637.1 169.2C633.8 173 632.2 180.5 633.3 185.3C634.3 190.1 638.6 195.2 643.5 198.1C648.4 201 656.9 202.9 662.8 202.9C668.6 202.9 676.1 198.9 678.8 198.1" fill="none" stroke="#1f78e0" stroke-width="2.6" stroke-linecap="round" stroke-linejoin="round"/>
<path d="M684.4 188.6C682.3 185.4 677.1 174.1 672 169.6C666.8 165 659.6 161.3 653.5 161.4C647.5 161.6 639 166.5 635.5 170.3C632 174.1 630.9 179.8 632.5 184.4C634.1 189 639.9 194.9 645.1 198C650.3 201.1 658.1 203 663.8 202.8C669.5 202.7 676.7 197.9 679.2 197" fill="none" stroke="#1f78e0" stroke-width="1.56" stroke-linecap="round" stroke-linejoin="round"/>
<path d="M685.2 188.5L691.6 169.2L704.4 158L701.9 169.9L723.7 157.1L742.9 158L758.9 169.2L765.3 185.3L746.8 173.1L762.1 194.9L770.2 212.5L765.3 218.9" fill="none" stroke="#1f78e0" stroke-width="2.6" stroke-linecap="round" stroke-linejoin="round"/>
<path d="M704.4 169.2C706.6 168.4 713 164.4 717.3 164.4C721.5 164.4 727.9 168.4 730.1 169.2" fill="none" stroke="#1f78e0" stroke-width="1.6" stroke-linecap="round" stroke-linejoin="round"/>
<path d="M704.9 170.4C706.9 169.5 713 165.6 717.3 165.2C721.6 164.8 728.4 167.4 730.6 167.8" fill="none" stroke="#1f78e0" stroke-width="1.2" stroke-linecap="round" stroke-linejoin="round"/>
<path d="M742.9 169.2C744.5 170.8 750.3 175.1 752.5 178.9C754.8 182.6 755.7 189.5 756.4 191.7" fill="none" stroke="#1f78e0" stroke-width="1.6" stroke-linecap="round" stroke-linejoin="round"/>
<path d="M743.7 169.5C745.1 170.8 749.6 173.7 751.9 177.4C754.2 181 756.6 189.2 757.5 191.6" fill="none" stroke="#1f78e0" stroke-width="1.2" stroke-linecap="round" stroke-linejoin="round"/>
<path d="M685.2 188.5L669.2 201.3L659.5 214.1L654.7 230.2L666.6 225.7L661.1 255.8L678.8 268.6L689 272.5" fill="none" stroke="#1f78e0" stroke-width="2.6" stroke-linecap="round" stroke-linejoin="round"/>
<path d="M664.4 207.7C663.3 208.8 658.6 211.3 657.9 214.1C657.2 216.9 659.8 222.7 660.2 224.4" fill="none" stroke="#1f78e0" stroke-width="2" stroke-linecap="round" stroke-linejoin="round"/>
<path d="M665.1 208.9C664 210 659.5 212.7 658.6 215.5C657.8 218.2 659.6 223.7 659.8 225.3" fill="none" stroke="#1f78e0" stroke-width="1.2" stroke-linecap="round" stroke-linejoin="round"/>
<path d="M688.4 198.1C687.9 202.4 684.7 215.2 685.2 223.7C685.7 232.3 687.3 242.4 691.6 249.4C695.9 256.3 703.4 261.9 710.8 265.4C718.3 268.9 728.5 271 736.5 270.2C744.5 269.4 752 263.6 758.9 260.6C765.9 257.7 775.8 256.1 778.2 252.6C780.6 249.1 775 245.4 773.4 239.8C771.8 234.2 769.4 222.4 768.6 218.9" fill="none" stroke="#1f78e0" stroke-width="2.6" stroke-linecap="round" stroke-linejoin="round"/>
<path d="M688.2 199.5C687.9 203.3 686 214.3 686.4 222.5C686.8 230.6 686.1 241.4 690.4 248.5C694.8 255.6 704.6 261.7 712.3 265.2C720.1 268.7 729.1 270.4 736.9 269.6C744.7 268.8 752.2 263 759 260.2C765.8 257.5 775.2 256.1 777.7 252.9C780.1 249.7 775.1 246.5 773.6 241.1C772.2 235.6 769.9 223.8 769.1 220.3" fill="none" stroke="#1f78e0" stroke-width="1.56" stroke-linecap="round" stroke-linejoin="round"/>
<ellipse cx="706" cy="221.2" rx="18.6" ry="21.2" fill="none" stroke="#1f78e0" stroke-width="2.6"/>
<ellipse cx="748.7" cy="218" rx="17.6" ry="19.9" fill="none" stroke="#1f78e0" stroke-width="2.6"/>
<path d="M718.9 210.9C719.7 212.5 723.7 217.2 723.7 220.5C723.7 223.8 719.7 229.1 718.9 230.8" fill="none" stroke="#1f78e0" stroke-width="1.8" stroke-linecap="round" stroke-linejoin="round"/>
<path d="M720 212.5C720.7 213.7 724.2 216.2 724.2 219.5C724.2 222.8 720.7 230.1 720 232.3" fill="none" stroke="#1f78e0" stroke-width="1.2" stroke-linecap="round" stroke-linejoin="round"/>
<path d="M755.7 207.7C756.8 209 761.6 212.5 762.1 215.7C762.7 218.9 759.5 225.1 758.9 226.9" fill="none" stroke="#1f78e0" stroke-width="1.8" stroke-linecap="round" stroke-linejoin="round"/>
<path d="M757 207.9C758 209.1 762.3 211.6 762.8 214.8C763.3 218 760.5 225.1 760 227.2" fill="none" stroke="#1f78e0" stroke-width="1.2" stroke-linecap="round" stroke-linejoin="round"/>
<path d="M698 243C699.6 243.5 704.4 246.1 707.6 246.2C710.8 246.3 715.7 244 717.3 243.6" fill="none" stroke="#1f78e0" stroke-width="1.5" stroke-linecap="round" stroke-linejoin="round"/>
<path d="M697.3 241.6C699.2 242.6 705.7 247.3 708.8 247.8C711.9 248.3 714.7 245.1 715.9 244.6" fill="none" stroke="#1f78e0" stroke-width="1.2" stroke-linecap="round" stroke-linejoin="round"/>
<path d="M742.9 257.4C743.7 258 746.1 260.9 747.7 260.9C749.3 260.9 751.7 258 752.5 257.4" fill="none" stroke="#1f78e0" stroke-width="2" stroke-linecap="round" stroke-linejoin="round"/>
<path d="M742.6 256.3C743.4 257.2 745.2 261.9 747.1 261.8C748.9 261.7 752.6 256.9 753.7 255.9" fill="none" stroke="#1f78e0" stroke-width="1.2" stroke-linecap="round" stroke-linejoin="round"/>
<path d="M710.8 194.9C711.6 196 714.9 200.2 715.7 201.3" fill="none" stroke="#1f78e0" stroke-width="1.8" stroke-linecap="round" stroke-linejoin="round"/>
<path d="M711.2 193.4C712.1 194.6 715.5 199.5 716.4 200.8" fill="none" stroke="#1f78e0" stroke-width="1.2" stroke-linecap="round" stroke-linejoin="round"/>
<path d="M733.3 191.7C733.8 193.3 736 199.7 736.5 201.3" fill="none" stroke="#1f78e0" stroke-width="1.8" stroke-linecap="round" stroke-linejoin="round"/>
<path d="M734.5 193.2C734.8 194.8 736.2 201.3 736.5 202.9" fill="none" stroke="#1f78e0" stroke-width="1.2" stroke-linecap="round" stroke-linejoin="round"/>
<path d="M691.6 204.5C693.7 202.9 700.2 196.8 704.4 194.9C708.7 193 715.1 193.6 717.3 193.3" fill="none" stroke="#1f78e0" stroke-width="2" stroke-linecap="round" stroke-linejoin="round"/>
<path d="M691 203.1C693.3 201.5 700.5 195.1 704.8 193.4C709 191.7 714.4 193.1 716.3 193" fill="none" stroke="#1f78e0" stroke-width="1.2" stroke-linecap="round" stroke-linejoin="round"/>
<path d="M733.3 193.3C736 192.7 744.5 189.3 749.3 190.1C754.1 190.9 760 196.8 762.1 198.1" fill="none" stroke="#1f78e0" stroke-width="2" stroke-linecap="round" stroke-linejoin="round"/>
<path d="M733.6 192.2C736 192 743.2 190 747.9 191.3C752.5 192.5 759.3 198.2 761.5 199.6" fill="none" stroke="#1f78e0" stroke-width="1.2" stroke-linecap="round" stroke-linejoin="round"/>
<path d="M704.4 275C706.6 277.2 713 285.2 717.3 287.9C721.5 290.5 725.3 292.7 730.1 291.1C734.9 289.5 743.4 280.4 746.1 278.2" fill="none" stroke="#1f78e0" stroke-width="2.6" stroke-linecap="round" stroke-linejoin="round"/>
<path d="M705.7 274.6C707.6 276.9 713 285.1 717.1 287.9C721.3 290.7 725.7 292.9 730.5 291.4C735.4 289.8 743.7 280.8 746.3 278.6" fill="none" stroke="#1f78e0" stroke-width="1.56" stroke-linecap="round" stroke-linejoin="round"/>
<path d="M717.3 294.3L733.3 287.9L739.7 300.7L723.7 307.1Z" fill="none" stroke="#1f78e0" stroke-width="2" stroke-linecap="round" stroke-linejoin="round"/>
<path d="M733.3 291.1C733.8 291.9 735.2 295.6 736.5 295.9C737.8 296.1 740.5 293.2 741.3 292.7" fill="none" stroke="#1f78e0" stroke-width="1.6" stroke-linecap="round" stroke-linejoin="round"/>
<path d="M734.7 291.1C735 292 735.3 296.4 736.3 296.6C737.2 296.7 739.8 292.8 740.5 292" fill="none" stroke="#1f78e0" stroke-width="1.2" stroke-linecap="round" stroke-linejoin="round"/>
<path d="M685.2 275C683.1 277.7 675 284.1 672.4 291.1C669.7 298 668.1 310.3 669.2 316.7C670.2 323.1 672.9 328.5 678.8 329.5C684.7 330.6 698 327.4 704.4 323.1C710.8 318.9 715.1 307.1 717.3 303.9" fill="none" stroke="#1f78e0" stroke-width="2.6" stroke-linecap="round" stroke-linejoin="round"/>
<path d="M686.7 275.1C684.4 277.5 675.5 282.5 672.5 289.5C669.6 296.5 668.1 310.2 668.9 317C669.7 323.7 671.2 329.1 677.2 329.9C683.2 330.7 698.1 326.1 704.9 321.7C711.6 317.4 715.5 306.8 717.7 303.8" fill="none" stroke="#1f78e0" stroke-width="1.56" stroke-linecap="round" stroke-linejoin="round"/>
<path d="M746.1 278.2C748.8 279.8 758.1 287.9 762.1 287.9C766.1 287.9 767 282.8 770.2 278.2C773.4 273.7 779.5 263.6 781.4 260.6" fill="none" stroke="#1f78e0" stroke-width="2.6" stroke-linecap="round" stroke-linejoin="round"/>
<path d="M746.7 277.8C749.4 279.6 759.1 288.8 762.8 288.6C766.5 288.5 765.4 281.3 768.6 276.8C771.8 272.4 779.7 264.6 781.9 262.1" fill="none" stroke="#1f78e0" stroke-width="1.56" stroke-linecap="round" stroke-linejoin="round"/>
<path d="M752.5 310.3C749.9 311.9 742.4 316.7 736.5 319.9C730.6 323.1 720.5 327.9 717.3 329.5" fill="none" stroke="#1f78e0" stroke-width="2.6" stroke-linecap="round" stroke-linejoin="round"/>
<path d="M751.7 310.2C749.2 311.7 742.6 316.2 736.8 319.3C731 322.5 720.1 327.3 716.8 328.9" fill="none" stroke="#1f78e0" stroke-width="1.56" stroke-linecap="round" stroke-linejoin="round"/>
<path d="M723.7 325.7C726.3 325.1 734.6 324.6 739.7 321.8C744.8 319.1 751.7 311.2 754.1 309" fill="none" stroke="#1f78e0" stroke-width="4.5" stroke-linecap="round" stroke-linejoin="round"/>
<path d="M723.2 326C725.9 325.2 733.8 324.5 739.1 321.5C744.4 318.4 752.3 309.8 755 307.5" fill="none" stroke="#1f78e0" stroke-width="2.6999999999999997" stroke-linecap="round" stroke-linejoin="round"/>
<path d="M678.8 329.5C678 332.2 672.9 339.1 674 345.6C675 352.1 683.3 364.8 685.2 368.7" fill="none" stroke="#1f78e0" stroke-width="2.6" stroke-linecap="round" stroke-linejoin="round"/>
<path d="M679 330.3C678.1 332.7 672.2 338.4 673.4 344.7C674.6 350.9 684 364 686.2 367.8" fill="none" stroke="#1f78e0" stroke-width="1.56" stroke-linecap="round" stroke-linejoin="round"/>
<path d="M704.4 329.5C706.3 331.7 713.5 337 715.7 342.4C717.8 347.7 718.1 356.7 717.3 361.6C716.5 366.5 711.9 370.2 710.8 371.9" fill="none" stroke="#1f78e0" stroke-width="2.6" stroke-linecap="round" stroke-linejoin="round"/>
<path d="M703.4 329.3C705.6 331.3 714.1 335.8 716.3 341.1C718.5 346.4 717.4 356 716.7 361.1C716 366.2 712.7 369.9 711.9 371.7" fill="none" stroke="#1f78e0" stroke-width="1.56" stroke-linecap="round" stroke-linejoin="round"/>
<path d="M691.6 348.8C691.1 350.9 687.3 357.9 688.4 361.6C689.5 365.3 696.4 369.6 698 371.2" fill="none" stroke="#1f78e0" stroke-width="2" stroke-linecap="round" stroke-linejoin="round"/>
<path d="M692.7 347.7C691.9 350.1 686.8 358.2 687.9 362.1C689 366 697.4 369.6 699.3 371.1" fill="none" stroke="#1f78e0" stroke-width="1.2" stroke-linecap="round" stroke-linejoin="round"/>
<path d="M701.2 352C701.8 354.7 703.9 365.3 704.4 368" fill="none" stroke="#1f78e0" stroke-width="2" stroke-linecap="round" stroke-linejoin="round"/>
<path d="M700.3 350.8C701 353.5 703.8 364.3 704.5 367" fill="none" stroke="#1f78e0" stroke-width="1.2" stroke-linecap="round" stroke-linejoin="round"/>
<path d="M688.4 271.8C691.1 274 700.2 279.8 704.4 284.7C708.7 289.5 712.4 298 714 300.7" fill="none" stroke="#1f78e0" stroke-width="1.8" stroke-linecap="round" stroke-linejoin="round"/>
<path d="M689.4 272.9C691.7 274.8 699.1 279.2 703.4 283.9C707.7 288.7 713.1 298.3 715 301.1" fill="none" stroke="#1f78e0" stroke-width="1.2" stroke-linecap="round" stroke-linejoin="round"/>
<path d="M755.7 287.9C755.5 291.3 754.4 305.2 754.1 308.7" fill="none" stroke="#1f78e0" stroke-width="2" stroke-linecap="round" stroke-linejoin="round"/>
<path d="M756.7 287.4C756.1 290.8 753.6 304.6 752.9 308" fill="none" stroke="#1f78e0" stroke-width="1.2" stroke-linecap="round" stroke-linejoin="round"/>
<path d="M704.4 278.2C703.4 281.5 698 291.1 698 297.5C698 303.9 703.4 313.5 704.4 316.7" fill="none" stroke="#1f78e0" stroke-width="1.6" stroke-linecap="round" stroke-linejoin="round"/>
<path d="M705.4 277.5C704.1 280.8 697.7 290.7 697.5 297.2C697.3 303.7 703.1 313.2 704.2 316.4" fill="none" stroke="#1f78e0" stroke-width="1.2" stroke-linecap="round" stroke-linejoin="round"/>
<ellipse cx="696.4" cy="396.9" rx="9.6" ry="22.4" fill="#fff" stroke="#111" stroke-width="2" transform="rotate(12 696.4 396.9)"/>
<ellipse cx="697.4" cy="397.5" rx="4.2" ry="14.7" fill="#111" stroke="#111" stroke-width="1" transform="rotate(12 697.4 397.5)"/>
<path d="M688.4 403.3C686.8 402.8 681.2 399.5 678.8 400.1C676.4 400.6 674.2 403.8 674 406.5C673.7 409.2 675.3 414.8 677.2 416.1C679 417.4 683.9 414.8 685.2 414.5" fill="none" stroke="#111" stroke-width="2" stroke-linecap="round" stroke-linejoin="round"/>
<path d="M672.4 419.3C671.9 420.9 670.6 425.5 669.8 428.9C669.1 432.4 668.2 438 667.9 439.8" fill="none" stroke="#222" stroke-width="1.6" stroke-linecap="round" stroke-linejoin="round"/>
<path d="M680.7 420.9C680.4 422.5 679.4 427.4 678.8 430.5C678.1 433.7 677.2 438.3 676.9 439.8" fill="none" stroke="#222" stroke-width="1.6" stroke-linecap="round" stroke-linejoin="round"/>
<path d="M671.3 423.2L679.9 424.8" fill="none" stroke="#222" stroke-width="2" stroke-linecap="round" stroke-linejoin="round"/>
<path d="M670.3 427L679.2 428.6" fill="none" stroke="#222" stroke-width="2" stroke-linecap="round" stroke-linejoin="round"/>
<path d="M669.4 431.1L678.4 432.4" fill="none" stroke="#222" stroke-width="2" stroke-linecap="round" stroke-linejoin="round"/>
<path d="M668.7 435.5L677.6 436.1" fill="none" stroke="#222" stroke-width="2" stroke-linecap="round" stroke-linejoin="round"/>
<ellipse cx="677.2" cy="406.5" rx="3.2" ry="3.2" fill="none" stroke="#222" stroke-width="1.5"/>
<path d="M848.7 174.1L954.5 161.2L959.4 182.1L903.2 182.1L848.7 175" fill="none" stroke="#d4463a" stroke-width="1.4" stroke-linecap="round" stroke-linejoin="round"/>
<path d="M867.9 169.2C869.3 166.6 873.3 162.8 877.6 161.2C881.8 159.6 890.1 158.3 893.6 159.6C897.1 161 897.9 165.8 898.4 169.2C898.9 172.7 899.7 178.3 896.8 180.5C893.9 182.6 885.3 182.6 880.8 182.1C876.2 181.5 871.7 179.4 869.5 177.3C867.4 175.1 866.6 171.9 867.9 169.2Z" fill="none" stroke="#d4463a" stroke-width="1.4" stroke-linecap="round" stroke-linejoin="round"/>
<path d="M874.3 164.4C875.4 165.8 878.1 170.9 880.8 172.5C883.4 174.1 888.8 173.8 890.4 174.1" fill="none" stroke="#d4463a" stroke-width="1.1" stroke-linecap="round" stroke-linejoin="round"/>
<path d="M884 161.2C884.5 162.8 886.6 169.2 887.2 170.9" fill="none" stroke="#d4463a" stroke-width="1.1" stroke-linecap="round" stroke-linejoin="round"/>
<path d="M871.1 174.1C873.3 174.6 880 177 884 177.3C888 177.5 893.3 175.9 895.2 175.7" fill="none" stroke="#d4463a" stroke-width="1.1" stroke-linecap="round" stroke-linejoin="round"/>
<path d="M864.7 164.4C862.6 163.9 855.6 160.7 851.9 161.2C848.2 161.8 844.7 165 842.3 167.6C839.9 170.3 838.5 174.1 837.5 177.3C836.4 180.5 835.3 184.6 835.9 186.9C836.4 189.2 839.3 191.3 840.7 191.1C842 190.8 843.3 186.2 843.9 185.3" fill="none" stroke="#d4463a" stroke-width="1.4" stroke-linecap="round" stroke-linejoin="round"/>
<ellipse cx="839.7" cy="187.9" rx="2.6" ry="2.6" fill="none" stroke="#d4463a" stroke-width="1.3"/>
<path d="M959.4 169.2L968 170.9L966.7 175.7L960.3 175.7" fill="none" stroke="#d4463a" stroke-width="1.4" stroke-linecap="round" stroke-linejoin="round"/>
<ellipse cx="938.5" cy="174.1" rx="4.8" ry="3.2" fill="none" stroke="#d4463a" stroke-width="1.2"/>
<path d="M914.4 182.1L919.3 190.1L922.5 183.7" fill="none" stroke="#d4463a" stroke-width="1.3" stroke-linecap="round" stroke-linejoin="round"/>
<path d="M858.3 159.6C860.4 159.2 866.9 157.2 871.1 157.1C875.4 157 881.8 158.7 884 159" fill="none" stroke="#d4463a" stroke-width="1.1" stroke-linecap="round" stroke-linejoin="round"/>
<path d="M1005.9 174.1L1009.1 182.1L1028.3 172.5L1050.8 169.2L1070 174.1L1086.1 182.1L1098.9 214.2L1089.3 227L1082.8 219L1076.4 230.2" fill="none" stroke="#d4463a" stroke-width="1.5" stroke-linecap="round" stroke-linejoin="round"/>
<path d="M1009.1 182.1L989.8 204.5L999.4 210.9L996.2 223.8L1009.1 222.2L1012.3 234" fill="none" stroke="#d4463a" stroke-width="1.5" stroke-linecap="round" stroke-linejoin="round"/>
<path d="M1050.8 169.9C1050 168.2 1045.7 161.9 1046 159.6C1046.2 157.4 1050 154.2 1052.4 156.4C1054.8 158.7 1059.1 170.3 1060.4 173.1" fill="none" stroke="#d4463a" stroke-width="1.4" stroke-linecap="round" stroke-linejoin="round"/>
<path d="M1063.6 177.3C1064.7 175.1 1067.1 166.8 1070 164.4C1073 162 1079.9 160.5 1081.2 162.8C1082.6 165.1 1078.6 175.7 1078 178.2" fill="none" stroke="#d4463a" stroke-width="1.4" stroke-linecap="round" stroke-linejoin="round"/>
<path d="M1012.3 207.7C1012.8 210.9 1011.2 222.6 1015.5 227C1019.8 231.4 1029.9 233.2 1037.9 234C1046 234.9 1056.1 234.6 1063.6 232.1C1071.1 229.6 1079.6 221.2 1082.8 219" fill="none" stroke="#d4463a" stroke-width="1.4" stroke-linecap="round" stroke-linejoin="round"/>
<ellipse cx="1026.7" cy="211.6" rx="14.4" ry="11.2" fill="none" stroke="#d4463a" stroke-width="1.5"/>
<ellipse cx="1062" cy="209.3" rx="15.4" ry="12.2" fill="none" stroke="#d4463a" stroke-width="1.5"/>
<ellipse cx="1026.7" cy="212.6" rx="3.2" ry="3.2" fill="none" stroke="#d4463a" stroke-width="1.4"/>
<ellipse cx="1062" cy="210.3" rx="3.2" ry="3.2" fill="none" stroke="#d4463a" stroke-width="1.4"/>
<path d="M1018.7 198.1L1028.3 201.3L1037.9 194.9L1047.6 202.9L1057.2 198.1L1068.4 201.3L1079.6 194.9" fill="none" stroke="#d4463a" stroke-width="1.5" stroke-linecap="round" stroke-linejoin="round"/>
<path d="M1015.5 225.4C1019.2 225.9 1029.9 228.3 1037.9 228.6C1046 228.9 1056.4 228.1 1063.6 227C1070.8 225.9 1078.3 223 1081.2 222.2" fill="none" stroke="#d4463a" stroke-width="1.1" stroke-linecap="round" stroke-linejoin="round"/>
<path d="M1063.6 198.1C1063.9 197.3 1064.9 194.1 1065.2 193.3" fill="none" stroke="#d4463a" stroke-width="1.1" stroke-linecap="round" stroke-linejoin="round"/>
<path d="M1068.4 198.1C1068.7 197.3 1069.7 194.1 1070 193.3" fill="none" stroke="#d4463a" stroke-width="1.1" stroke-linecap="round" stroke-linejoin="round"/>
<path d="M1073.2 198.1C1073.5 197.3 1074.6 194.1 1074.8 193.3" fill="none" stroke="#d4463a" stroke-width="1.1" stroke-linecap="round" stroke-linejoin="round"/>
<path d="M1078 198.1C1078.3 197.3 1079.4 194.1 1079.6 193.3" fill="none" stroke="#d4463a" stroke-width="1.1" stroke-linecap="round" stroke-linejoin="round"/>
<path d="M1037.9 235C1039.3 235.9 1043.3 240.5 1046 240.5C1048.6 240.5 1052.6 235.9 1054 235" fill="none" stroke="#d4463a" stroke-width="1.4" stroke-linecap="round" stroke-linejoin="round"/>
<ellipse cx="1046" cy="236.6" rx="3.2" ry="2.6" fill="none" stroke="#d4463a" stroke-width="1.3"/>
<path d="M1028.3 239.8C1025.6 241.4 1016 246.8 1012.3 249.4C1008.5 252.1 1006.9 254.8 1005.9 255.9" fill="none" stroke="#d4463a" stroke-width="1.4" stroke-linecap="round" stroke-linejoin="round"/>
<path d="M1063.6 238.2C1066.3 239.8 1075.9 245.4 1079.6 247.8C1083.4 250.2 1085 251.8 1086.1 252.6" fill="none" stroke="#d4463a" stroke-width="1.4" stroke-linecap="round" stroke-linejoin="round"/>
<path d="M1004.3 251L1009.1 260.7L1012.3 252.6L1017.1 259.7L1018.7 252" fill="none" stroke="#d4463a" stroke-width="1.3" stroke-linecap="round" stroke-linejoin="round"/>
<path d="M1078 246.2L1082.8 257.5L1085.4 247.8L1088.6 255.9" fill="none" stroke="#d4463a" stroke-width="1.3" stroke-linecap="round" stroke-linejoin="round"/>
<path d="M1029.9 246.2C1023.5 250 1015.8 259.1 1012.3 265.5C1008.8 271.9 1006.9 279.6 1009.1 284.7C1011.2 289.8 1018.2 293.7 1025.1 296C1032.1 298.2 1042.2 299 1050.8 298.2C1059.3 297.4 1070.8 295.5 1076.4 291.1C1082 286.8 1085.5 278.8 1084.5 271.9C1083.4 264.9 1075.6 254.3 1070 249.4C1064.4 244.6 1057.5 243.6 1050.8 243C1044.1 242.5 1036.3 242.5 1029.9 246.2Z" fill="none" stroke="#d4463a" stroke-width="1.5" stroke-linecap="round" stroke-linejoin="round"/>
<ellipse cx="1042.8" cy="271.9" rx="20.9" ry="17.6" fill="none" stroke="#d4463a" stroke-width="1.4"/>
<path d="M1010.7 286.3L1018.7 294.3L1028.3 292.7L1037.9 299.2L1050.8 296L1063.6 298.2L1074.8 291.1" fill="none" stroke="#d4463a" stroke-width="1.3" stroke-linecap="round" stroke-linejoin="round"/>
<path d="M1037.9 243C1038.7 244.6 1041.1 252.4 1042.8 252.6C1044.4 252.9 1046.8 246 1047.6 244.6" fill="none" stroke="#d4463a" stroke-width="1.3" stroke-linecap="round" stroke-linejoin="round"/>
<path d="M1050.8 244.6C1051.8 246 1055.3 252.4 1057.2 252.6C1059.1 252.9 1061.2 247.3 1062 246.2" fill="none" stroke="#d4463a" stroke-width="1.3" stroke-linecap="round" stroke-linejoin="round"/>
<path d="M1026.7 297.6L1031.5 302.7L1036.3 298.2Z" fill="#d4463a" stroke="#d4463a" stroke-width="1.2" stroke-linecap="round" stroke-linejoin="round"/>
<path d="M1063.6 296L1068.4 299.8L1070.7 294.3Z" fill="#d4463a" stroke="#d4463a" stroke-width="1.2" stroke-linecap="round" stroke-linejoin="round"/>
<path d="M1098.9 260.7L1103.7 281.5L1108.5 286.3L1105.3 262.3" fill="none" stroke="#d4463a" stroke-width="1.3" stroke-linecap="round" stroke-linejoin="round"/>
<path d="M1119.7 260.7L1114.9 284.7L1119.7 287.9L1125.2 262.3" fill="none" stroke="#d4463a" stroke-width="1.3" stroke-linecap="round" stroke-linejoin="round"/>
<path d="M1100.5 267.1C1101.6 266.9 1105.8 266.3 1106.9 266.1" fill="none" stroke="#d4463a" stroke-width="1.1" stroke-linecap="round" stroke-linejoin="round"/>
<path d="M1117.5 267.1C1118.6 266.9 1122.8 266.3 1123.9 266.1" fill="none" stroke="#d4463a" stroke-width="1.1" stroke-linecap="round" stroke-linejoin="round"/>
<path d="M1100.5 273.5C1101.6 273.3 1105.8 272.7 1106.9 272.5" fill="none" stroke="#d4463a" stroke-width="1.1" stroke-linecap="round" stroke-linejoin="round"/>
<path d="M1117.5 273.5C1118.6 273.3 1122.8 272.7 1123.9 272.5" fill="none" stroke="#d4463a" stroke-width="1.1" stroke-linecap="round" stroke-linejoin="round"/>
<path d="M1100.5 279.9C1101.6 279.8 1105.8 279.1 1106.9 278.9" fill="none" stroke="#d4463a" stroke-width="1.1" stroke-linecap="round" stroke-linejoin="round"/>
<path d="M1117.5 279.9C1118.6 279.8 1122.8 279.1 1123.9 278.9" fill="none" stroke="#d4463a" stroke-width="1.1" stroke-linecap="round" stroke-linejoin="round"/>
<ellipse cx="1110.1" cy="292.7" rx="9" ry="6.4" fill="none" stroke="#d4463a" stroke-width="1.3"/>
<path d="M1102.1 305.6L1105.9 308.8L1110.1 305.6L1105.9 304Z" fill="#d4463a" stroke="#d4463a" stroke-width="1" stroke-linecap="round" stroke-linejoin="round"/>
<ellipse cx="1107.9" cy="291.1" rx="1" ry="1" fill="#d4463a" stroke="#d4463a" stroke-width="1"/>
<ellipse cx="1113.3" cy="291.1" rx="1" ry="1" fill="#d4463a" stroke="#d4463a" stroke-width="1"/>
<path d="M790.4 287.6C788.3 284.4 790.9 273.9 792.6 268.8C794.2 263.6 796.4 259.2 800.3 256.6C804.2 254 810.8 252.5 815.8 253.3C820.8 254 826.9 257.3 830.2 261C833.5 264.7 834.6 271 835.7 275.4C836.8 279.8 839.8 285.5 836.8 287.6C833.9 289.6 822.6 289.6 818 287.6C813.4 285.5 811.4 275.4 809.2 275.4C806.9 275.4 807.9 285.5 804.7 287.6C801.6 289.6 792.4 290.7 790.4 287.6Z" fill="#5aa8f5" stroke="#0d0d0d" stroke-width="3.5" stroke-linecap="round" stroke-linejoin="round"/>
<path d="M804.7 287.6L807.6 275.4L811.4 287.6Z" fill="#0d0d0d" stroke="#0d0d0d" stroke-width="1.5" stroke-linecap="round" stroke-linejoin="round"/>
<path d="M853.4 293.1C851 288.3 852.7 277.6 854.5 271C856.4 264.3 859.9 257.1 864.5 253.3C869.1 249.4 876.3 247.4 882.2 247.7C888.1 248.1 895.8 251.2 899.9 255.5C903.9 259.7 906 266.9 906.5 273.2C907.1 279.5 905 287.9 903.2 293.1C901.3 298.3 894.5 300.8 895.4 304.2C896.4 307.5 905.8 309.7 908.7 313C911.7 316.3 913.5 320.8 913.1 324.1C912.8 327.4 909.5 332.2 906.5 332.9C903.6 333.7 898.8 331.8 895.4 328.5C892.1 325.2 891 317.8 886.6 313C882.2 308.2 874.4 303.1 868.9 299.7C863.4 296.4 855.8 297.9 853.4 293.1Z" fill="#f23ec0" stroke="#0d0d0d" stroke-width="3.5" stroke-linecap="round" stroke-linejoin="round"/>
<path d="M750.5 335.1L758.3 315.2L773.8 301.9L787 295.3L787 306.4L806.9 307.5L829.1 310.8L818 317.4L802.5 328.5L792.6 344L789.2 363.9L795.9 381.6L804.7 394.9L798.1 399.3L789.2 392.7L780.4 399.3L773.8 381.6L762.7 370.5L769.3 357.3L758.3 346.2L764.9 337.3Z" fill="#5c2a6e" stroke="#0d0d0d" stroke-width="2.6" stroke-linecap="round" stroke-linejoin="round"/>
<path d="M787 306.4L849 306.4L851.2 295.3L868.9 299.7L886.6 313L895.4 328.5L897.7 337.3L886.6 332.9L877.7 321.9L860 313L840.1 313L829.1 310.8Z" fill="#5c2a6e" stroke="#0d0d0d" stroke-width="2.6" stroke-linecap="round" stroke-linejoin="round"/>
<path d="M886.6 332.9L897.7 337.3L913.1 344L928.6 359.5L936.4 375L928.6 372.7L933.1 390.4L922 386L924.2 403.7L910.9 399.3L906.5 414.8L893.2 410.4L886.6 423.6L875.5 417L864.5 412.6L860 403.7L868.9 394.9L882.2 392.7L891 377.2L893.2 359.5L888.8 344Z" fill="#5c2a6e" stroke="#0d0d0d" stroke-width="2.6" stroke-linecap="round" stroke-linejoin="round"/>
<path d="M773.8 381.6L780.4 399.3L789.2 392.7L798.1 399.3L800.3 412.6L791.5 421.4L782.6 414.8L771.5 408.1L776 394.9Z" fill="#5c2a6e" stroke="#0d0d0d" stroke-width="2.4" stroke-linecap="round" stroke-linejoin="round"/>
<path d="M818 317.4C811.7 320 806.8 324.1 802.5 328.5C798.3 332.9 794.8 338.1 792.6 344C790.4 349.9 788.7 357.6 789.2 363.9C789.8 370.2 792.2 376.4 795.9 381.6C799.6 386.8 805.1 391.5 811.4 394.9C817.6 398.2 826.1 400.8 833.5 401.5C840.9 402.2 848.2 401.1 855.6 399.3C863 397.4 871.8 394.5 877.7 390.4C883.6 386.4 888.4 380.5 891 375C893.6 369.4 893.6 362.8 893.2 357.3C892.9 351.7 891.4 347.3 888.8 341.8C886.2 336.2 882.5 328.7 877.7 324.1C872.9 319.5 866.3 316 860 314.1C853.8 312.3 847.1 312.5 840.1 313C833.1 313.6 824.3 314.9 818 317.4Z" fill="#fff" stroke="#0d0d0d" stroke-width="3" stroke-linecap="round" stroke-linejoin="round"/>
<path d="M800.3 313L818 308.6L840.1 309L860 311.2L849 316.3L833.5 314.1L818 317.4L806.9 325.2Z" fill="#5c2a6e" stroke="#0d0d0d" stroke-width="2" stroke-linecap="round" stroke-linejoin="round"/>
<ellipse cx="818" cy="339.6" rx="16.6" ry="19" fill="#fff" stroke="#0d0d0d" stroke-width="3.6"/>
<ellipse cx="865.6" cy="337.3" rx="19" ry="19" fill="#fff" stroke="#0d0d0d" stroke-width="3.6"/>
<ellipse cx="821.3" cy="334" rx="4" ry="7.1" fill="#f23ec0" stroke="#b03090" stroke-width="1" transform="rotate(15 821.3 334)"/>
<ellipse cx="821.8" cy="334" rx="2" ry="4.9" fill="#5a8af5" stroke="none" stroke-width="0" transform="rotate(15 821.8 334)"/>
<ellipse cx="851.2" cy="330.7" rx="3.5" ry="6.6" fill="#f23ec0" stroke="#b03090" stroke-width="1" transform="rotate(10 851.2 330.7)"/>
<ellipse cx="851.6" cy="330.7" rx="1.8" ry="4.4" fill="#5a8af5" stroke="none" stroke-width="0" transform="rotate(10 851.6 330.7)"/>
<path d="M795.9 355C797.7 355.9 803.2 359.9 806.9 359.9C810.7 359.9 816.5 355.9 818.5 355" fill="none" stroke="#0d0d0d" stroke-width="4.2" stroke-linecap="round" stroke-linejoin="round"/>
<path d="M792.6 355C793.5 354.7 797.2 353.2 798.1 352.8" fill="none" stroke="#0d0d0d" stroke-width="1.6" stroke-linecap="round" stroke-linejoin="round"/>
<path d="M791.5 360.6C792.8 360.2 797.9 358.7 799.2 358.4" fill="none" stroke="#0d0d0d" stroke-width="1.6" stroke-linecap="round" stroke-linejoin="round"/>
<path d="M792.6 366.1C793.9 365.6 799 363.3 800.3 362.8" fill="none" stroke="#0d0d0d" stroke-width="1.6" stroke-linecap="round" stroke-linejoin="round"/>
<path d="M800.3 350.6C801.8 351.2 806.6 353.9 809.2 353.9C811.7 353.9 814.7 351.2 815.8 350.6" fill="none" stroke="#0d0d0d" stroke-width="2" stroke-linecap="round" stroke-linejoin="round"/>
<path d="M835.7 370.5L844.6 366.1L849 359.5L853.4 372.7L854.5 388.2L846.8 377.2Z" fill="#0d0d0d" stroke="#0d0d0d" stroke-width="2" stroke-linecap="round" stroke-linejoin="round"/>
<path d="M846.1 371L850.1 368.8L852.3 381.6Z" fill="#fff" stroke="#fff" stroke-width="1" stroke-linecap="round" stroke-linejoin="round"/>
<ellipse cx="881.1" cy="358.4" rx="6.6" ry="3.1" fill="none" stroke="#666" stroke-width="1.3" transform="rotate(-10 881.1 358.4)"/>
<path d="M860 304.2C861.5 304.9 865.9 306.4 868.9 308.6C871.8 310.8 874.8 314.1 877.7 317.4C880.7 320.8 885.1 326.7 886.6 328.5" fill="none" stroke="#0d0d0d" stroke-width="2" stroke-linecap="round" stroke-linejoin="round"/>
<path d="M865.6 299.7C865 301.9 862.8 310.8 862.3 313" fill="none" stroke="#0d0d0d" stroke-width="1.6" stroke-linecap="round" stroke-linejoin="round"/>
<path d="M872.2 304.2C871.7 306.4 869.4 315.2 868.9 317.4" fill="none" stroke="#0d0d0d" stroke-width="1.6" stroke-linecap="round" stroke-linejoin="round"/>
<path d="M882.2 317.4C883.3 318.5 887.7 323 888.8 324.1" fill="none" stroke="#0d0d0d" stroke-width="1.6" stroke-linecap="round" stroke-linejoin="round"/>
<path d="M877.7 310.8C877.2 312.6 875 320 874.4 321.9" fill="none" stroke="#0d0d0d" stroke-width="1.4" stroke-linecap="round" stroke-linejoin="round"/>
<path d="M750.5 335.1C752.6 334 758.8 332.2 762.7 328.5C766.6 324.8 771.9 315.6 773.8 313" fill="none" stroke="#0d0d0d" stroke-width="1.8" stroke-linecap="round" stroke-linejoin="round"/>
<path d="M758.3 346.2C757.2 344.7 752.7 338.8 751.6 337.3" fill="none" stroke="#0d0d0d" stroke-width="1.6" stroke-linecap="round" stroke-linejoin="round"/>
<path d="M899.9 344C902.8 345.8 912.4 350.3 917.6 355C922.7 359.8 928.6 369.8 930.8 372.7" fill="none" stroke="#0d0d0d" stroke-width="1.8" stroke-linecap="round" stroke-linejoin="round"/>
<path d="M913.1 363.9C914.2 366.8 919 376.4 919.8 381.6C920.5 386.8 917.9 392.7 917.6 394.9" fill="none" stroke="#2a0a3a" stroke-width="1.6" stroke-linecap="round" stroke-linejoin="round"/>
<path d="M769.3 357.3C770.8 359.8 776.3 367.2 778.2 372.7C780 378.3 780 387.5 780.4 390.4" fill="none" stroke="#2a0a3a" stroke-width="1.6" stroke-linecap="round" stroke-linejoin="round"/>
<path d="M897.7 363.9C898 366.8 900.2 375.7 899.9 381.6C899.5 387.5 896.2 396.3 895.4 399.3" fill="none" stroke="#2a0a3a" stroke-width="1.6" stroke-linecap="round" stroke-linejoin="round"/>
<path d="M954.5 297.6C950.3 294.3 934.2 285.8 928.9 278.3C923.5 270.8 921.4 260.7 922.5 252.6C923.5 244.6 928.3 235.8 935.3 230.2C942.2 224.6 961 218.4 964.2 219C967.4 219.5 958.8 227.3 954.5 233.4C950.3 239.5 940.6 248.4 938.5 255.9C936.4 263.3 938 271.9 941.7 278.3C945.5 284.7 957.7 291.7 961 294.3" fill="none" stroke="#0d0d0d" stroke-width="2.2" stroke-linecap="round" stroke-linejoin="round"/>
<path d="M925.7 246.2C927.8 243.3 932.6 232.8 938.5 228.6C944.4 224.4 957.2 222.4 961 221.2" fill="none" stroke="#333" stroke-width="1.3" stroke-linecap="round" stroke-linejoin="round"/>
<path d="M986.6 300.8C986.6 293.3 987.7 270.8 986.6 255.9C985.5 240.9 979.7 216.8 980.2 210.9C980.7 205.1 987.2 213.1 989.8 220.6C992.5 228.1 994.9 246.2 996.2 255.9C997.6 265.5 998.4 270.8 997.8 278.3C997.3 285.8 993.8 297 993 300.8" fill="none" stroke="#0d0d0d" stroke-width="2.2" stroke-linecap="round" stroke-linejoin="round"/>
<path d="M983.4 217.4C984.7 223.8 989.7 243.6 991.4 255.9C993.1 268.2 993.3 285.3 993.7 291.1" fill="none" stroke="#333" stroke-width="1.2" stroke-linecap="round" stroke-linejoin="round"/>
<ellipse cx="969" cy="325.8" rx="28.2" ry="28.2" fill="#fff" stroke="#0d0d0d" stroke-width="2.6"/>
<path d="M941.7 323.2C943.8 327.5 948.1 343.5 954.5 348.9C961 354.2 975.9 354.2 980.2 355.3" fill="none" stroke="#333" stroke-width="1.3" stroke-linecap="round" stroke-linejoin="round"/>
<path d="M959.4 307.8L973.8 304L977 312L964.2 313.6Z" fill="#0d0d0d" stroke="#0d0d0d" stroke-width="1.5" stroke-linecap="round" stroke-linejoin="round"/>
<path d="M961 323.2C964.2 318.9 981.3 315.7 986.6 316.8C992 317.9 993.6 324.8 993 329.6C992.5 334.4 987.7 343.5 983.4 345.7C979.1 347.8 971.1 346.2 967.4 342.5C963.6 338.7 957.7 327.5 961 323.2Z" fill="none" stroke="#0d0d0d" stroke-width="2" stroke-linecap="round" stroke-linejoin="round"/>
<path d="M969 321.6C969.5 325.1 971.6 339 972.2 342.5" fill="none" stroke="#0d0d0d" stroke-width="1.6" stroke-linecap="round" stroke-linejoin="round"/>
<path d="M978.6 319.4C979 323.5 980.5 339.9 980.8 344.1" fill="none" stroke="#0d0d0d" stroke-width="1.6" stroke-linecap="round" stroke-linejoin="round"/>
<path d="M986.6 310.4C985 311.5 978.6 315.7 977 316.8" fill="none" stroke="#0d0d0d" stroke-width="1.6" stroke-linecap="round" stroke-linejoin="round"/>
<path d="M961 353.7C958.8 355.6 949.2 360.4 948.1 364.9C947.1 369.5 951.3 376.1 954.5 381C957.7 385.8 967.4 389.5 967.4 393.8C967.4 398.1 957.7 402.9 954.5 406.6C951.3 410.4 949.2 414.6 948.1 416.2" fill="none" stroke="#0d0d0d" stroke-width="1.8" stroke-linecap="round" stroke-linejoin="round"/>
<path d="M965.8 353.7C963.6 355.7 954 361 952.9 365.6C951.9 370.1 956.3 376.1 959.4 381C962.4 385.8 971.4 390.1 971.2 394.4C971.1 398.7 961.7 403 958.4 406.6C955.1 410.3 952.5 414.6 951.3 416.2" fill="none" stroke="#333" stroke-width="1.2" stroke-linecap="round" stroke-linejoin="round"/>
<path d="M941.7 416.2C938.5 414.6 926.5 411.4 922.5 413C918.5 414.6 916.6 422.7 917.7 425.9C918.7 429.1 924.9 432.8 928.9 432.3C932.9 431.7 939.6 425.3 941.7 422.7C943.8 420 944.9 417.8 941.7 416.2Z" fill="none" stroke="#0d0d0d" stroke-width="1.8" stroke-linecap="round" stroke-linejoin="round"/>
<path d="M944.9 417.8C947.6 414.4 963.2 406.3 967.4 408.2C971.5 410.1 972.6 425.6 969.9 429.1C967.3 432.5 955.5 430.9 951.3 429.1C947.2 427.2 942.2 421.3 944.9 417.8Z" fill="none" stroke="#0d0d0d" stroke-width="1.8" stroke-linecap="round" stroke-linejoin="round"/>
<path d="M928.9 417.8C929.9 418.6 935 420.8 935.3 422.7C935.6 424.5 931.3 428 930.5 429.1" fill="none" stroke="#444" stroke-width="1.1" stroke-linecap="round" stroke-linejoin="round"/>
<path d="M954.5 416.2C955.3 417.3 959.1 420.8 959.4 422.7C959.6 424.5 956.7 426.7 956.1 427.5" fill="none" stroke="#444" stroke-width="1.1" stroke-linecap="round" stroke-linejoin="round"/>
<path d="M917.7 432.3C917.3 433.6 915.8 438.7 915.4 440" fill="none" stroke="#0d0d0d" stroke-width="1.6" stroke-linecap="round" stroke-linejoin="round"/>
<path d="M951.3 429.7C952.9 431.4 959.4 438.3 961 440" fill="none" stroke="#0d0d0d" stroke-width="1.6" stroke-linecap="round" stroke-linejoin="round"/>
<path d="M941.7 425.9C941.2 428.2 939 437.6 938.5 440" fill="none" stroke="#0d0d0d" stroke-width="1.4" stroke-linecap="round" stroke-linejoin="round"/>
<path d="M1007.6 431.5C1004.9 430.1 996.2 427.4 991.3 423.3C986.4 419.2 979.9 412.4 978.3 407C976.6 401.6 978.3 394.8 981.5 390.7C984.8 386.6 991.9 383.6 997.8 382.5C1003.8 381.4 1011.7 381.7 1017.4 384.2C1023.1 386.6 1029.1 392.9 1032.1 397.2C1035.1 401.6 1034.8 408.1 1035.4 410.3" fill="none" stroke="#0d0d0d" stroke-width="2.6" stroke-linecap="round" stroke-linejoin="round"/>
<path d="M1038.6 403.7C1038.9 399.9 1037.8 387.7 1040.3 380.9C1042.7 374.1 1047.9 366.8 1053.3 362.9C1058.8 359.1 1067.2 357.2 1072.9 358.1C1078.6 358.9 1084.9 363.5 1087.6 367.8C1090.3 372.2 1090.6 379 1089.2 384.2C1087.9 389.3 1081.1 396.4 1079.4 398.8" fill="none" stroke="#0d0d0d" stroke-width="2.6" stroke-linecap="round" stroke-linejoin="round"/>
<path d="M1035.4 410.3C1037.8 408.6 1043.8 403.7 1050.1 400.5C1056.3 397.2 1068 391 1072.9 390.7C1077.8 390.4 1075.1 398.3 1079.4 398.8C1083.8 399.4 1093 393.7 1099 393.9C1105 394.2 1111.8 397.8 1115.3 400.5C1118.9 403.2 1120.8 409.2 1120.2 410.3C1119.7 411.4 1112.3 403.7 1112.1 407C1111.8 410.3 1118 422.2 1118.6 429.8C1119.1 437.5 1115 445.1 1115.3 452.7C1115.6 460.3 1119.7 467.4 1120.2 475.5C1120.8 483.7 1118.9 497.3 1118.6 501.6" fill="none" stroke="#0d0d0d" stroke-width="2.4" stroke-linecap="round" stroke-linejoin="round"/>
<path d="M1035.4 410.3C1033.5 414.1 1027.5 423.3 1023.9 433.1C1020.4 442.9 1016.9 457.6 1014.2 469C1011.4 480.4 1006.5 495.1 1007.6 501.6C1008.7 508.2 1016.3 507.6 1020.7 508.2C1025 508.7 1030.5 508.7 1033.7 504.9C1037 501.1 1038.4 486.9 1040.3 485.3C1042.2 483.7 1043.3 490.8 1045.2 495.1C1047.1 499.5 1050.9 513.6 1051.7 511.4C1052.5 509.2 1051.1 490.8 1050.1 482.1C1049 473.4 1046.5 465.7 1045.2 459.2C1043.8 452.7 1042.4 445.6 1041.9 442.9" fill="none" stroke="#0d0d0d" stroke-width="2.4" stroke-linecap="round" stroke-linejoin="round"/>
<path d="M1027.2 439.6C1026.1 444.5 1022 459.2 1020.7 469C1019.3 478.8 1019.3 493.5 1019.1 498.4" fill="none" stroke="#222" stroke-width="1.5" stroke-linecap="round" stroke-linejoin="round"/>
<path d="M1033.7 405.4C1033.2 407 1029.9 413 1030.5 415.2C1031 417.3 1035.9 417.9 1037 418.4" fill="none" stroke="#222" stroke-width="1.5" stroke-linecap="round" stroke-linejoin="round"/>
<path d="M1009.3 501.6L1023.9 498.4L1028.8 488.6L1035.4 506.5L1023.9 515.3L1014.2 512.1Z" fill="#0d0d0d" stroke="#0d0d0d" stroke-width="1.5" stroke-linecap="round" stroke-linejoin="round"/>
<path d="M1045.2 442.9C1044.6 447.2 1040 461.4 1041.9 469C1043.8 476.6 1049.8 484.2 1056.6 488.6C1063.4 492.9 1074.5 495.6 1082.7 495.1C1090.8 494.6 1100.6 490.2 1105.5 485.3C1110.4 480.4 1111 469 1112.1 465.7" fill="none" stroke="#0d0d0d" stroke-width="2" stroke-linecap="round" stroke-linejoin="round"/>
<ellipse cx="1054.9" cy="444.5" rx="12.4" ry="13.1" fill="#fff" stroke="#0d0d0d" stroke-width="2.4"/>
<ellipse cx="1089.2" cy="431.5" rx="10.4" ry="13.1" fill="#fff" stroke="#0d0d0d" stroke-width="2.4"/>
<ellipse cx="1054.9" cy="444.5" rx="7.2" ry="7.2" fill="none" stroke="#222" stroke-width="1.3"/>
<path d="M1049.9 439.5C1051.6 441.2 1058.3 447.9 1060 449.6" fill="none" stroke="#222" stroke-width="1.2" stroke-linecap="round" stroke-linejoin="round"/>
<path d="M1060 439.5C1058.3 441.2 1051.6 447.9 1049.9 449.6" fill="none" stroke="#222" stroke-width="1.2" stroke-linecap="round" stroke-linejoin="round"/>
<path d="M1054.9 437.3C1054.9 439.7 1054.9 449.3 1054.9 451.7" fill="none" stroke="#222" stroke-width="1.2" stroke-linecap="round" stroke-linejoin="round"/>
<ellipse cx="1089.2" cy="433.1" rx="6.5" ry="6.5" fill="none" stroke="#222" stroke-width="1.3"/>
<path d="M1084.6 428.5C1086.2 430.1 1092.3 436.2 1093.8 437.7" fill="none" stroke="#222" stroke-width="1.2" stroke-linecap="round" stroke-linejoin="round"/>
<path d="M1093.8 428.5C1092.3 430.1 1086.2 436.2 1084.6 437.7" fill="none" stroke="#222" stroke-width="1.2" stroke-linecap="round" stroke-linejoin="round"/>
<path d="M1089.2 426.6C1089.2 428.8 1089.2 437.5 1089.2 439.6" fill="none" stroke="#222" stroke-width="1.2" stroke-linecap="round" stroke-linejoin="round"/>
<path d="M1042.5 439.6C1044.6 438.1 1050.7 430.8 1054.9 430.5C1059.2 430.2 1065.8 436.7 1068 438" fill="none" stroke="#0d0d0d" stroke-width="2.8" stroke-linecap="round" stroke-linejoin="round"/>
<path d="M1078.8 423.3C1080.5 422.3 1085.6 417.2 1089.2 417.4C1092.9 417.7 1098.7 423.7 1100.6 424.9" fill="none" stroke="#0d0d0d" stroke-width="2.8" stroke-linecap="round" stroke-linejoin="round"/>
<path d="M1069.6 421.7C1070.2 422.5 1071.3 426.9 1072.9 426.6C1074.5 426.3 1077.8 420.3 1079.4 420.1C1081.1 419.8 1082.1 424.1 1082.7 424.9" fill="none" stroke="#0d0d0d" stroke-width="1.6" stroke-linecap="round" stroke-linejoin="round"/>
<path d="M1056.6 459.2C1058.5 459.8 1065.3 463 1068 462.5C1070.7 461.9 1072.1 457 1072.9 455.9" fill="none" stroke="#222" stroke-width="1.4" stroke-linecap="round" stroke-linejoin="round"/>
<path d="M1085.9 446.2C1087.9 446.3 1095.5 446.7 1097.4 446.8" fill="none" stroke="#222" stroke-width="1.4" stroke-linecap="round" stroke-linejoin="round"/>
<ellipse cx="1052.7" cy="475.5" rx="8.2" ry="5.2" fill="#f2a8a0" stroke="none" stroke-width="0"/>
<ellipse cx="1104.9" cy="467.4" rx="4.6" ry="3.9" fill="#f2a8a0" stroke="none" stroke-width="0"/>
<path d="M1095.7 475.5C1096.2 476 1098.3 477.3 1098.3 478.1C1098.3 479 1096.2 480.3 1095.7 480.7" fill="none" stroke="#445" stroke-width="1.6" stroke-linecap="round" stroke-linejoin="round"/>
<path d="M1115.3 439.6C1116.1 444.5 1119.7 458.7 1120.2 469C1120.8 479.3 1118.9 496.2 1118.6 501.6" fill="none" stroke="#0d0d0d" stroke-width="2" stroke-linecap="round" stroke-linejoin="round"/>
<path d="M1110.4 442.9C1111 448.3 1114 466.3 1113.7 475.5C1113.4 484.8 1109.6 494.6 1108.8 498.4" fill="none" stroke="#0d0d0d" stroke-width="1.8" stroke-linecap="round" stroke-linejoin="round"/>
<path d="M1082.7 496.7C1083.2 498.6 1085.4 506.3 1085.9 508.2" fill="none" stroke="#0d0d0d" stroke-width="1.8" stroke-linecap="round" stroke-linejoin="round"/>
<path d="M1079.4 511.4C1080.2 508.2 1084.9 504.9 1087.6 504.9C1090.3 504.9 1093 510.9 1095.7 511.4C1098.5 512 1101.7 506.3 1103.9 508.2C1106.1 510.1 1109.6 519.6 1108.8 522.8C1108 526.1 1102.3 526.1 1099 527.7C1095.7 529.4 1091.9 533.2 1089.2 532.6C1086.5 532.1 1084.3 528 1082.7 524.5C1081.1 520.9 1078.6 514.7 1079.4 511.4Z" fill="none" stroke="#0d0d0d" stroke-width="1.8" stroke-linecap="round" stroke-linejoin="round"/>
<path d="M1087.6 508.2C1088.4 509.8 1092.2 514.4 1092.5 517.9C1092.7 521.5 1089.8 527.5 1089.2 529.4" fill="none" stroke="#222" stroke-width="1.2" stroke-linecap="round" stroke-linejoin="round"/>
<path d="M1082.7 517.9C1084.3 517.9 1088.7 518.2 1092.5 517.9C1096.3 517.7 1103.4 516.6 1105.5 516.3" fill="none" stroke="#222" stroke-width="1.2" stroke-linecap="round" stroke-linejoin="round"/>
<path d="M1033.7 527.7C1033.2 522.3 1035.9 512.5 1040.3 508.2C1044.6 503.8 1053.9 501.4 1059.8 501.6C1065.8 501.9 1072.9 505.4 1076.2 509.8C1079.4 514.1 1081.6 523.1 1079.4 527.7C1077.2 532.4 1069.1 535.4 1063.1 537.5C1057.1 539.7 1048.4 542.4 1043.5 540.8C1038.6 539.2 1034.3 533.2 1033.7 527.7Z" fill="none" stroke="#0d0d0d" stroke-width="2.2" stroke-linecap="round" stroke-linejoin="round"/>
<path d="M1063.1 537.5C1065.8 540.2 1072.9 549.7 1079.4 553.8C1085.9 558 1098.5 560.9 1102.3 562.3" fill="none" stroke="#0d0d0d" stroke-width="2.4" stroke-linecap="round" stroke-linejoin="round"/>
<path d="M1066.4 531C1069.6 533.4 1079.4 541.9 1085.9 545.7C1092.5 549.5 1102.3 552.5 1105.5 553.8" fill="none" stroke="#0d0d0d" stroke-width="2.4" stroke-linecap="round" stroke-linejoin="round"/>
<path d="M1100.6 552.2C1100.6 547.3 1107.2 542.4 1112.1 540.8C1116.9 539.2 1127 538.6 1130 542.4C1133 546.2 1133 559 1130 563.6C1127 568.3 1116.9 572.1 1112.1 570.2C1107.2 568.3 1100.6 557.1 1100.6 552.2Z" fill="none" stroke="#0d0d0d" stroke-width="2.2" stroke-linecap="round" stroke-linejoin="round"/>
<path d="M1033.7 527.7C1033.2 531 1029.7 541.9 1030.5 547.3C1031.3 552.8 1037 553.8 1038.6 560.4C1040.3 566.9 1038.4 578.9 1040.3 586.5C1042.2 594.1 1047.1 600.1 1050.1 606.1C1053 612 1056.9 619.7 1058.2 622.4" fill="none" stroke="#0d0d0d" stroke-width="2.2" stroke-linecap="round" stroke-linejoin="round"/>
<path d="M1079.4 563.6C1077.8 568.5 1072.4 583.2 1069.6 593C1066.9 602.8 1064.2 617.5 1063.1 622.4" fill="none" stroke="#0d0d0d" stroke-width="1.8" stroke-linecap="round" stroke-linejoin="round"/>
<path d="M1130 566.9C1130 575.6 1130 610.4 1130 619.1" fill="none" stroke="#0d0d0d" stroke-width="2" stroke-linecap="round" stroke-linejoin="round"/>
<path d="M1076.2 570.2C1075.6 575.6 1070.7 595.2 1072.9 602.8C1075.1 610.4 1082.7 614.8 1089.2 615.8C1095.7 616.9 1105.3 612.6 1112.1 609.3C1118.9 606.1 1127 598.4 1130 596.3" fill="none" stroke="#0d0d0d" stroke-width="1.6" stroke-linecap="round" stroke-linejoin="round"/>
<path d="M1045.2 553.8C1046 558.2 1047.6 573.4 1050.1 579.9C1052.5 586.5 1058.2 590.8 1059.8 593" fill="none" stroke="#222" stroke-width="1.3" stroke-linecap="round" stroke-linejoin="round"/>
<path d="M1095.7 573.4C1096.8 576.7 1099 588.7 1102.3 593C1105.5 597.4 1113.1 598.4 1115.3 599.5" fill="none" stroke="#222" stroke-width="1.3" stroke-linecap="round" stroke-linejoin="round"/>
<path d="M1058.2 622.4L1063.1 628.2L1069.6 623L1076.2 629.5L1084.3 624.3L1092.5 628.2L1100.6 621.7L1108.8 625L1116.9 618.5L1130 622.4" fill="none" stroke="#0d0d0d" stroke-width="2" stroke-linecap="round" stroke-linejoin="round"/>
<path d="M1040.3 508.2C1041.1 509.2 1045.2 512.2 1045.2 514.7C1045.2 517.1 1041.1 521.5 1040.3 522.8" fill="none" stroke="#222" stroke-width="1.3" stroke-linecap="round" stroke-linejoin="round"/>
<path d="M180 513C179.4 509.7 175 499.7 176.6 493.1C178.3 486.4 183.3 477.9 189.9 473.2C196.6 468.5 207.1 465.7 216.5 464.9C225.9 464 237.5 465.1 246.3 468.2C255.2 471.2 264.6 476.2 269.6 483.1C274.6 490 275.1 505.2 276.2 509.7" fill="none" stroke="#222" stroke-width="1.5" stroke-linecap="round" stroke-linejoin="round"/>
<path d="M196.6 469.8C195.2 474.8 189.6 494.7 188.3 499.7" fill="none" stroke="#333" stroke-width="1.2" stroke-linecap="round" stroke-linejoin="round"/>
<path d="M209.8 466.5C209 470.7 205.7 487.3 204.9 491.4" fill="none" stroke="#333" stroke-width="1.2" stroke-linecap="round" stroke-linejoin="round"/>
<path d="M223.1 465.9C223.4 469.4 224.5 483.6 224.8 487.1" fill="none" stroke="#333" stroke-width="1.2" stroke-linecap="round" stroke-linejoin="round"/>
<path d="M236.4 467.2C237.4 470.8 241.4 485.4 242.4 489.1" fill="none" stroke="#333" stroke-width="1.2" stroke-linecap="round" stroke-linejoin="round"/>
<path d="M253 473.2C254.4 477.3 259.9 493.9 261.3 498" fill="none" stroke="#333" stroke-width="1.2" stroke-linecap="round" stroke-linejoin="round"/>
<path d="M203.2 468.2C201.8 473.7 196.3 495.8 194.9 501.4" fill="none" stroke="#333" stroke-width="1.2" stroke-linecap="round" stroke-linejoin="round"/>
<path d="M246.3 469.8C247.5 474 251.9 490.6 253 494.7" fill="none" stroke="#333" stroke-width="1.2" stroke-linecap="round" stroke-linejoin="round"/>
<path d="M184.9 483.1C184.1 487.5 180.8 505.2 180 509.7" fill="none" stroke="#333" stroke-width="1.2" stroke-linecap="round" stroke-linejoin="round"/>
<path d="M264.6 483.1C265.7 488.1 270.1 508 271.2 513" fill="none" stroke="#333" stroke-width="1.2" stroke-linecap="round" stroke-linejoin="round"/>
<path d="M180 513C181.6 517 186.9 534.1 189.9 536.9C193 539.7 197.7 533.6 198.2 529.6C198.8 525.6 194.1 515.8 193.2 513" fill="none" stroke="#222" stroke-width="1.4" stroke-linecap="round" stroke-linejoin="round"/>
<path d="M266.3 496.4C266.8 500.4 270.4 515.2 269.6 520.3C268.8 525.4 262.7 525.8 261.3 526.9" fill="none" stroke="#222" stroke-width="1.4" stroke-linecap="round" stroke-linejoin="round"/>
<path d="M199.9 496.4C200.4 499.7 199.3 510.7 203.2 516.3C207.1 522 215.9 529 223.1 530.2C230.3 531.5 241.4 528.1 246.3 523.6C251.3 519.1 251.9 506.5 253 503" fill="none" stroke="#222" stroke-width="1.4" stroke-linecap="round" stroke-linejoin="round"/>
<ellipse cx="206.5" cy="501.4" rx="7.3" ry="9.3" fill="none" stroke="#0d0d0d" stroke-width="2"/>
<ellipse cx="209.2" cy="502.4" rx="3.3" ry="4.6" fill="#0d0d0d" stroke="#0d0d0d" stroke-width="1"/>
<ellipse cx="234.7" cy="499.7" rx="8.3" ry="8.3" fill="none" stroke="#0d0d0d" stroke-width="2"/>
<path d="M232.1 495.7L239 499.7L232.1 503.7Z" fill="none" stroke="#0d0d0d" stroke-width="1.4" stroke-linecap="round" stroke-linejoin="round"/>
<path d="M219.8 509.7L223.1 515L217.1 515Z" fill="#0d0d0d" stroke="#0d0d0d" stroke-width="1" stroke-linecap="round" stroke-linejoin="round"/>
<path d="M213.2 521.3C214.8 521.9 219.8 525.1 223.1 524.9C226.4 524.8 231.4 521.1 233.1 520.3" fill="none" stroke="#222" stroke-width="1.4" stroke-linecap="round" stroke-linejoin="round"/>
<path d="M201.5 526.3C204 527.3 210.7 531.7 216.5 532.2C222.3 532.8 233.1 530 236.4 529.6" fill="none" stroke="#0d0d0d" stroke-width="2" stroke-linecap="round" stroke-linejoin="round"/>
<ellipse cx="253" cy="514.6" rx="10" ry="10" fill="none" stroke="#e6d46a" stroke-width="1"/>
<path d="M249.7 524.6C250.8 525.4 254.4 529.6 256.3 529.6C258.2 529.6 260.5 525.4 261.3 524.6" fill="none" stroke="#333" stroke-width="1.3" stroke-linecap="round" stroke-linejoin="round"/>
<path d="M199.9 430C202.1 431.7 208.2 438.9 213.2 440C218.1 441.1 227 437.2 229.8 436.6" fill="none" stroke="#222" stroke-width="1.4" stroke-linecap="round" stroke-linejoin="round"/>
<path d="M219.8 436.6C220.3 438.3 223.4 445.2 223.1 446.6C222.8 448 219 445.2 218.1 444.9" fill="none" stroke="#222" stroke-width="1.3" stroke-linecap="round" stroke-linejoin="round"/>
<path d="M236.4 430C239.7 431.7 250.8 438.9 256.3 440C261.8 441.1 267.4 437.2 269.6 436.6" fill="none" stroke="#222" stroke-width="1.4" stroke-linecap="round" stroke-linejoin="round"/>
<path d="M262.9 449.9L267.9 458.2L271.2 448.3L274.6 456.6" fill="none" stroke="#222" stroke-width="1.3" stroke-linecap="round" stroke-linejoin="round"/>
<path d="M302.8 501.4C302 503.3 296.7 509.8 297.8 513C298.9 516.1 304.7 519.5 309.4 520.3C314.1 521.1 321 518 326 518C331 518 336.1 521.1 339.3 520.3C342.5 519.5 344.3 514.2 345.3 513" fill="none" stroke="#0d0d0d" stroke-width="1.8" stroke-linecap="round" stroke-linejoin="round"/>
<ellipse cx="329.3" cy="488.1" rx="23.9" ry="18.6" fill="#fff" stroke="#0d0d0d" stroke-width="2.6" transform="rotate(-8 329.3 488.1)"/>
<ellipse cx="321" cy="477.1" rx="6.3" ry="4" fill="#0d0d0d" stroke="#0d0d0d" stroke-width="1" transform="rotate(-15 321 477.1)"/>
<ellipse cx="343.3" cy="483.1" rx="6.3" ry="4.3" fill="#0d0d0d" stroke="#0d0d0d" stroke-width="1" transform="rotate(18 343.3 483.1)"/>
<path d="M309.4 491.4C312.2 489.3 322.4 487.6 329.3 488.4C336.3 489.3 348.1 493.3 350.9 496.4C353.7 499.5 350.1 505 345.9 507C341.8 509 331.5 509.3 326 508.3C320.5 507.4 315.5 504.2 312.7 501.4C310 498.5 306.7 493.6 309.4 491.4Z" fill="none" stroke="#0d0d0d" stroke-width="2" stroke-linecap="round" stroke-linejoin="round"/>
<path d="M319.4 490.4C319.2 493.2 318.5 504.2 318.4 507" fill="none" stroke="#0d0d0d" stroke-width="1.4" stroke-linecap="round" stroke-linejoin="round"/>
<path d="M327.7 491.4C327.5 494 326.8 504.4 326.7 507" fill="none" stroke="#0d0d0d" stroke-width="1.4" stroke-linecap="round" stroke-linejoin="round"/>
<path d="M336 492.4C335.8 494.8 335.1 504.6 335 507" fill="none" stroke="#0d0d0d" stroke-width="1.4" stroke-linecap="round" stroke-linejoin="round"/>
<path d="M343.3 493.3C343.1 495.6 342.4 504.7 342.3 507" fill="none" stroke="#0d0d0d" stroke-width="1.4" stroke-linecap="round" stroke-linejoin="round"/>
<path d="M312.7 513C313.6 515.8 315 526.3 317.7 529.6C320.5 532.9 327.4 532.4 329.3 532.9" fill="none" stroke="#222" stroke-width="1.3" stroke-linecap="round" stroke-linejoin="round"/>
<path d="M336 519.6C337.1 521.3 342.3 526.8 342.6 529.6C342.9 532.4 338.5 535.1 337.6 536.2" fill="none" stroke="#222" stroke-width="1.3" stroke-linecap="round" stroke-linejoin="round"/>
<path d="M350.9 463.2C352.6 461 358.4 455.4 360.9 449.9C363.4 444.4 365 433.3 365.9 430" fill="none" stroke="#222" stroke-width="1.4" stroke-linecap="round" stroke-linejoin="round"/>
<path d="M360.9 466.5C362.3 463.7 367.1 456 369.2 449.9C371.2 443.8 372.5 433.3 373.2 430" fill="none" stroke="#222" stroke-width="1.4" stroke-linecap="round" stroke-linejoin="round"/>
<path d="M281.2 454.9L289.5 460.5L294.5 456.6L303.4 467.2" fill="none" stroke="#0d0d0d" stroke-width="2.2" stroke-linecap="round" stroke-linejoin="round"/>
<path d="M279.5 471.5L291.2 475.1L296.1 471.5L303.4 477.1" fill="none" stroke="#0d0d0d" stroke-width="2.2" stroke-linecap="round" stroke-linejoin="round"/>
<path d="M357.6 498L365.9 491.4L369.2 496.4L379.8 493.1" fill="none" stroke="#0d0d0d" stroke-width="2.2" stroke-linecap="round" stroke-linejoin="round"/>
<path d="M359.2 508L369.2 504.7L372.5 509.7L381.1 509.7" fill="none" stroke="#0d0d0d" stroke-width="2.2" stroke-linecap="round" stroke-linejoin="round"/>
<path d="M316.1 430C317.2 433.9 319.9 446.5 322.7 453.2C325.5 460 331 467.6 332.7 470.5" fill="none" stroke="#222" stroke-width="1.5" stroke-linecap="round" stroke-linejoin="round"/>
<path d="M332.7 430C333.5 433.3 336 444.1 337.6 449.9C339.3 455.8 341.8 462.6 342.6 465.2" fill="none" stroke="#222" stroke-width="1.5" stroke-linecap="round" stroke-linejoin="round"/>
<path d="M318.3 437.7L334.3 436.6" fill="none" stroke="#444" stroke-width="1.1" stroke-linecap="round" stroke-linejoin="round"/>
<path d="M320.5 445.5L336 443.3" fill="none" stroke="#444" stroke-width="1.1" stroke-linecap="round" stroke-linejoin="round"/>
<path d="M322.7 453.2L337.6 449.9" fill="none" stroke="#444" stroke-width="1.1" stroke-linecap="round" stroke-linejoin="round"/>
<path d="M326 459L339.3 455" fill="none" stroke="#444" stroke-width="1.1" stroke-linecap="round" stroke-linejoin="round"/>
<path d="M329.3 464.7L341 460.1" fill="none" stroke="#444" stroke-width="1.1" stroke-linecap="round" stroke-linejoin="round"/>
<path d="M395.7 430C395.7 434.4 395.6 448.1 395.7 456.6C395.8 465 396.3 476.5 396.4 480.5" fill="none" stroke="#222" stroke-width="1.5" stroke-linecap="round" stroke-linejoin="round"/>
<path d="M407.3 430C407.3 434.4 407.2 447.6 407 456.6C406.8 465.5 406.5 479.2 406.3 483.8" fill="none" stroke="#222" stroke-width="1.5" stroke-linecap="round" stroke-linejoin="round"/>
<path d="M395.7 437.6L407.2 437.6" fill="none" stroke="#444" stroke-width="1.1" stroke-linecap="round" stroke-linejoin="round"/>
<path d="M395.7 445.2L407.2 445.2" fill="none" stroke="#444" stroke-width="1.1" stroke-linecap="round" stroke-linejoin="round"/>
<path d="M395.7 452.8L407.1 452.8" fill="none" stroke="#444" stroke-width="1.1" stroke-linecap="round" stroke-linejoin="round"/>
<path d="M395.8 460L406.9 460.4" fill="none" stroke="#444" stroke-width="1.1" stroke-linecap="round" stroke-linejoin="round"/>
<path d="M396 466.8L406.7 468.2" fill="none" stroke="#444" stroke-width="1.1" stroke-linecap="round" stroke-linejoin="round"/>
<path d="M396.2 473.6L406.5 476" fill="none" stroke="#444" stroke-width="1.1" stroke-linecap="round" stroke-linejoin="round"/>
<path d="M478.7 440C477.1 444.4 472.4 457.6 468.8 466.5C465.2 475.5 459.1 489.2 457.1 493.7" fill="none" stroke="#222" stroke-width="1.5" stroke-linecap="round" stroke-linejoin="round"/>
<path d="M490.3 443.3C488.9 447.7 485.4 460.9 482 469.8C478.7 478.8 472.4 492.5 470.4 497.1" fill="none" stroke="#222" stroke-width="1.5" stroke-linecap="round" stroke-linejoin="round"/>
<path d="M476.2 446.6L488.3 449.9" fill="none" stroke="#444" stroke-width="1.1" stroke-linecap="round" stroke-linejoin="round"/>
<path d="M473.7 453.2L486.2 456.6" fill="none" stroke="#444" stroke-width="1.1" stroke-linecap="round" stroke-linejoin="round"/>
<path d="M471.2 459.9L484.1 463.2" fill="none" stroke="#444" stroke-width="1.1" stroke-linecap="round" stroke-linejoin="round"/>
<path d="M468.8 466.5L482 469.8" fill="none" stroke="#444" stroke-width="1.1" stroke-linecap="round" stroke-linejoin="round"/>
<path d="M465.9 473.3L479.1 476.6" fill="none" stroke="#444" stroke-width="1.1" stroke-linecap="round" stroke-linejoin="round"/>
<path d="M462.9 480.1L476.2 483.4" fill="none" stroke="#444" stroke-width="1.1" stroke-linecap="round" stroke-linejoin="round"/>
<path d="M460 486.9L473.3 490.2" fill="none" stroke="#444" stroke-width="1.1" stroke-linecap="round" stroke-linejoin="round"/>
<path d="M415.6 430C418.1 428.9 427.3 442.7 432.2 443.3C437.2 443.8 441.1 433.3 445.5 433.3C449.9 433.3 458.2 438.3 458.8 443.3C459.3 448.3 453.8 458.7 448.8 463.2C443.9 467.7 434.2 472.7 428.9 470.5C423.7 468.3 419.5 456.7 417.3 449.9C415.1 443.2 413.2 431.1 415.6 430Z" fill="none" stroke="#222" stroke-width="1.5" stroke-linecap="round" stroke-linejoin="round"/>
<path d="M432.2 443.3C432.8 447.2 435 462.6 435.6 466.5" fill="none" stroke="#333" stroke-width="1.2" stroke-linecap="round" stroke-linejoin="round"/>
<path d="M422.3 440C426.7 443.8 444.4 459.3 448.8 463.2" fill="none" stroke="#333" stroke-width="1.1" stroke-linecap="round" stroke-linejoin="round"/>
<path d="M445.5 433.3C446.9 432.8 452.4 430.6 453.8 430" fill="none" stroke="#222" stroke-width="1.4" stroke-linecap="round" stroke-linejoin="round"/>
<path d="M269.1 543.4C272.9 541.3 288.7 541.3 294.3 543.4C299.9 545.5 303.4 551.5 302.7 556C302 560.6 294.6 569 290.1 570.7C285.5 572.5 278.5 569 275.4 566.5C272.2 564.1 272.2 559.9 271.2 556C270.1 552.2 265.2 545.5 269.1 543.4Z" fill="#3fc8d2" stroke="#5a4c86" stroke-width="2.2" stroke-linecap="round" stroke-linejoin="round"/>
<path d="M290.1 570.7C290.1 565.5 298.5 558.3 302.7 553.9C306.9 549.5 310.4 546.2 315.3 544.5C320.2 542.7 328.1 541.8 332.1 543.4C336.1 545 338.7 549.4 339.4 553.9C340.1 558.5 338.6 565.1 336.3 570.7C334 576.3 329.6 583.9 325.8 587.5C321.9 591.2 317 593.1 313.2 592.8C309.3 592.4 306.5 589.1 302.7 585.4C298.8 581.8 290.1 576 290.1 570.7Z" fill="#d8347e" stroke="#5a4c86" stroke-width="2.2" stroke-linecap="round" stroke-linejoin="round"/>
<path d="M233.3 600.1C228.1 604.7 227.6 615.9 227 623.3C226.5 630.6 228.1 638.3 230.2 644.3C232.3 650.2 234.6 655.8 239.6 659C244.7 662.1 254 663.9 260.6 663.2C267.3 662.5 275 658.6 279.6 654.8C284.1 650.9 286.6 646 288 640.1C289.4 634.1 289 625.4 288 619.1C286.9 612.7 286.6 606.1 281.7 602.2C276.8 598.4 266.6 596.3 258.5 595.9C250.5 595.6 238.6 595.6 233.3 600.1Z" fill="#fff" stroke="#5a4c86" stroke-width="2.2" stroke-linecap="round" stroke-linejoin="round"/>
<path d="M216.5 569.7L223.9 577L239.6 568.6L264.8 564.4L285.9 569.7L302.7 585.4L309 606.4L311.1 631.7L309 644.3L298.5 649.5L294.3 659L288 648.5L288 619.1L283.8 604.3L277.5 598L275.4 587.5L264.8 600.1L259.6 587.5L248 595.9L237.5 598L232.3 604.3L227 619.1L226 604.3L212.3 612.7L221.8 595.9L214.4 592.8L223.9 584.4Z" fill="#6d4c3d" stroke="#5a4c86" stroke-width="2.2" stroke-linecap="round" stroke-linejoin="round"/>
<path d="M226 623.3L230.2 627.5L230.2 644.3L227 644.3Z" fill="#6d4c3d" stroke="#5a4c86" stroke-width="1.2" stroke-linecap="round" stroke-linejoin="round"/>
<path d="M227 635.9L237.5 648.5L234.4 654.8L228.1 648.5Z" fill="#6d4c3d" stroke="#5a4c86" stroke-width="1.2" stroke-linecap="round" stroke-linejoin="round"/>
<path d="M258.5 587.5C258.4 590.3 257.7 601.5 257.5 604.3" fill="none" stroke="#5a4c86" stroke-width="1.6" stroke-linecap="round" stroke-linejoin="round"/>
<path d="M275.4 587.5C275.7 590.3 277.1 601.5 277.5 604.3" fill="none" stroke="#5a4c86" stroke-width="1.6" stroke-linecap="round" stroke-linejoin="round"/>
<path d="M298.5 593.8C299.2 598 302.1 610.6 302.7 619.1C303.2 627.5 301.8 640.1 301.6 644.3" fill="none" stroke="#4a3428" stroke-width="1.8" stroke-linecap="round" stroke-linejoin="round"/>
<path d="M290.1 589.6C290.8 593.8 293.6 610.6 294.3 614.8" fill="none" stroke="#4a3428" stroke-width="1.5" stroke-linecap="round" stroke-linejoin="round"/>
<ellipse cx="248" cy="616.9" rx="10.1" ry="13" fill="#fff" stroke="#3a2a5a" stroke-width="3"/>
<ellipse cx="269.1" cy="616.9" rx="10.5" ry="14.3" fill="#fff" stroke="#3a2a5a" stroke-width="3"/>
<ellipse cx="249.1" cy="618" rx="3.6" ry="4.2" fill="#d8347e" stroke="#8a2a6a" stroke-width="1"/>
<ellipse cx="249.1" cy="618" rx="1.5" ry="1.7" fill="#3fc8d2" stroke="none" stroke-width="0"/>
<ellipse cx="265.3" cy="615.9" rx="3.6" ry="4.2" fill="#c23a8a" stroke="#8a2a6a" stroke-width="1"/>
<ellipse cx="265.3" cy="615.9" rx="1.5" ry="1.7" fill="#3fc8d2" stroke="none" stroke-width="0"/>
<path d="M237.5 605.4C239.3 604.9 244.7 602.2 248 602.2C251.4 602.2 255.9 604.9 257.5 605.4" fill="none" stroke="#3a2a5a" stroke-width="2.4" stroke-linecap="round" stroke-linejoin="round"/>
<path d="M260.6 603.3C262.4 602.8 267.8 600.4 271.2 600.6C274.5 600.7 279 603.7 280.6 604.3" fill="none" stroke="#3a2a5a" stroke-width="2.4" stroke-linecap="round" stroke-linejoin="round"/>
<ellipse cx="282.7" cy="631.7" rx="5.9" ry="5.3" fill="#f4a0c4" stroke="none" stroke-width="0"/>
<ellipse cx="240.7" cy="634.8" rx="3.2" ry="3.8" fill="#f4a0c4" stroke="none" stroke-width="0"/>
<path d="M241.7 640.1C243.8 638 249.8 634.3 254.3 633.8C258.9 633.2 265.9 635.2 269.1 636.9C272.2 638.7 273.6 641.8 273.3 644.3C272.9 646.8 271.2 650.8 266.9 651.8C262.7 652.9 252.2 651.5 248 650.6C243.8 649.7 242.8 648.1 241.7 646.4C240.7 644.6 239.6 642.2 241.7 640.1Z" fill="#4a3a6a" stroke="#3a2a5a" stroke-width="2" stroke-linecap="round" stroke-linejoin="round"/>
<ellipse cx="265.9" cy="646.4" rx="5.9" ry="3.8" fill="#f4a0d4" stroke="none" stroke-width="0"/>
<path d="M232.3 661.1L245.9 657.9L248 666.3L235.4 670.5Z" fill="#666" stroke="#444" stroke-width="1.5" stroke-linecap="round" stroke-linejoin="round"/>
<path d="M265.9 659L279.6 657.9L282.7 666.3L269.1 669.5Z" fill="#666" stroke="#444" stroke-width="1.5" stroke-linecap="round" stroke-linejoin="round"/>
<path d="M235.4 660.7C235.6 662 236.3 667.1 236.5 668.4" fill="none" stroke="#333" stroke-width="1.2" stroke-linecap="round" stroke-linejoin="round"/>
<path d="M238.6 660.7C238.8 662 239.5 667.1 239.6 668.4" fill="none" stroke="#333" stroke-width="1.2" stroke-linecap="round" stroke-linejoin="round"/>
<path d="M241.7 660.7C241.9 662 242.6 667.1 242.8 668.4" fill="none" stroke="#333" stroke-width="1.2" stroke-linecap="round" stroke-linejoin="round"/>
<path d="M244.9 660.7C245.1 662 245.8 667.1 245.9 668.4" fill="none" stroke="#333" stroke-width="1.2" stroke-linecap="round" stroke-linejoin="round"/>
<path d="M269.1 659.8C269.2 661.1 269.9 666.1 270.1 667.4" fill="none" stroke="#333" stroke-width="1.2" stroke-linecap="round" stroke-linejoin="round"/>
<path d="M272.2 659.8C272.4 661.1 273.1 666.1 273.3 667.4" fill="none" stroke="#333" stroke-width="1.2" stroke-linecap="round" stroke-linejoin="round"/>
<path d="M275.4 659.8C275.5 661.1 276.2 666.1 276.4 667.4" fill="none" stroke="#333" stroke-width="1.2" stroke-linecap="round" stroke-linejoin="round"/>
<path d="M278.5 659.8C278.7 661.1 279.4 666.1 279.6 667.4" fill="none" stroke="#333" stroke-width="1.2" stroke-linecap="round" stroke-linejoin="round"/>
<path d="M197.6 701C198.7 703.1 200.4 710.1 203.9 713.6C207.4 717.1 209.7 720.2 218.6 722C227.6 723.8 244.9 724.9 257.5 724.5C270.1 724.2 284.6 722.4 294.3 719.9C303.9 717.4 310.7 713.3 315.3 709.4C319.8 705.6 321.6 700.7 321.6 696.8C321.6 692.9 316.3 688 315.3 686.3" fill="none" stroke="#5a4c86" stroke-width="2.2" stroke-linecap="round" stroke-linejoin="round"/>
<ellipse cx="208.1" cy="705.2" rx="7.4" ry="6.3" fill="#fff" stroke="#5a4c86" stroke-width="2"/>
<ellipse cx="309" cy="703.1" rx="8.4" ry="6.7" fill="#fff" stroke="#5a4c86" stroke-width="2"/>
<ellipse cx="257.5" cy="696.8" rx="25.2" ry="24.8" fill="#3fc8d2" stroke="#5a4c86" stroke-width="2.2"/>
<path d="M257.5 696.8L257.5 672.4L261.4 672.7L265.3 673.7L268.9 675.2L272.3 677.2L275.3 679.8L277.8 682.8Z" fill="#d8347e" stroke="#d8347e" stroke-width="0.5" stroke-linecap="round" stroke-linejoin="round"/>
<path d="M257.5 696.8L280 707.1L277.6 711.1L274.5 714.5L270.8 717.4L266.6 719.5L262.2 720.7L257.5 721.2Z" fill="#d8347e" stroke="#d8347e" stroke-width="0.5" stroke-linecap="round" stroke-linejoin="round"/>
<path d="M257.5 696.8L238.5 712.5L236 709L234.2 705.1L233.1 701L232.7 696.8L233.1 692.6L234.2 688.5Z" fill="#d8347e" stroke="#d8347e" stroke-width="0.5" stroke-linecap="round" stroke-linejoin="round"/>
<path d="M257.5 696.8L243.3 676.8L244.9 675.8L246.6 674.9L248.4 674.1L250.2 673.5L252.1 673L254 672.7Z" fill="#d8347e" stroke="#d8347e" stroke-width="0.5" stroke-linecap="round" stroke-linejoin="round"/>
<path d="M257.5 672.6L257.5 721.6" fill="none" stroke="#fff" stroke-width="1.4" stroke-linecap="round" stroke-linejoin="round"/>
<path d="M237.5 682.1L277.5 713.6" fill="none" stroke="#fff" stroke-width="1.1" stroke-linecap="round" stroke-linejoin="round"/>
<path d="M237.5 713.6L277.5 682.1" fill="none" stroke="#fff" stroke-width="1.1" stroke-linecap="round" stroke-linejoin="round"/>
<path d="M232.9 696.8L282.1 696.8" fill="none" stroke="#fff" stroke-width="1" stroke-linecap="round" stroke-linejoin="round"/>
<path d="M202.9 690.5C203.2 687.1 208.3 680.7 212.3 677.9C216.3 675.1 223 673 227 673.7C231.1 674.4 236.5 678.6 236.5 682.1C236.5 685.6 231.4 692 227 694.7C222.6 697.4 214.2 698.8 210.2 698.1C206.2 697.4 202.5 693.9 202.9 690.5Z" fill="#3fc8d2" stroke="#5a4c86" stroke-width="2.2" stroke-linecap="round" stroke-linejoin="round"/>
<path d="M218.6 698.9L233.3 688.4L240.1 698.9L233.3 703.1L241.7 709.4L233.3 713.6L240.1 719.9L227 722.4L218.6 713.6Z" fill="#d8347e" stroke="#5a4c86" stroke-width="2.2" stroke-linecap="round" stroke-linejoin="round"/>
<path d="M288 669.5C288.3 666.7 295 664.6 298.5 665.3C302 666 307.6 670.2 309 673.7C310.4 677.2 309 684.9 306.9 686.3C304.8 687.7 299.5 684.9 296.4 682.1C293.2 679.3 287.6 672.3 288 669.5Z" fill="#d8347e" stroke="#5a4c86" stroke-width="2.2" stroke-linecap="round" stroke-linejoin="round"/>
<path d="M302.7 686.3C304.4 684.9 311.8 686.3 313.2 688.4C314.6 690.5 312.8 697.5 311.1 698.9C309.3 700.3 304.1 698.9 302.7 696.8C301.3 694.7 300.9 687.7 302.7 686.3Z" fill="#d8347e" stroke="#5a4c86" stroke-width="2" stroke-linecap="round" stroke-linejoin="round"/>
<path d="M277.5 690.5L285.9 682.1L294.3 686.3L292.2 694.7L300.6 696.8L296.4 709.4L283.8 714L275.4 705.2Z" fill="#3fc8d2" stroke="#5a4c86" stroke-width="2.2" stroke-linecap="round" stroke-linejoin="round"/>
<path d="M375.8 569.4C374.7 565 368.6 550.6 369.2 542.9C369.7 535.1 374.7 527.1 379.1 522.9C383.6 518.8 390.7 516.9 395.7 518C400.7 519.1 407.1 525.4 409 529.6C410.9 533.7 407.6 540.7 407.3 542.9" fill="none" stroke="#0d0d0d" stroke-width="2.2" stroke-linecap="round" stroke-linejoin="round"/>
<path d="M385.8 560.1C384.8 558.8 380.1 554.2 379.8 552.2C379.5 550.1 382.8 547.8 384.1 547.8C385.4 547.8 386.2 552.3 387.4 552.2C388.7 552 390.4 547 391.7 546.8C393.1 546.7 396.7 548.9 395.7 551.2C394.7 553.4 387.4 558.6 385.8 560.1" fill="none" stroke="#222" stroke-width="1.3" stroke-linecap="round" stroke-linejoin="round"/>
<path d="M407.3 539.5C406 537.1 409.3 529.6 414 526.3C418.7 522.9 427.5 521 435.6 519.6C443.6 518.2 455.8 516.3 462.1 518C468.5 519.6 472.6 525.7 473.7 529.6C474.8 533.5 474 539 468.8 541.2C463.5 543.4 449.9 542.9 442.2 542.9C434.5 542.9 428.1 541.8 422.3 541.2C416.5 540.7 408.7 542 407.3 539.5Z" fill="none" stroke="#0d0d0d" stroke-width="2.2" stroke-linecap="round" stroke-linejoin="round"/>
<path d="M420.6 519.6L422.3 511.3L438.9 509.7L440.5 518" fill="none" stroke="#0d0d0d" stroke-width="2" stroke-linecap="round" stroke-linejoin="round"/>
<path d="M477.1 539.5C476.8 536.2 473.2 524.6 475.4 519.6C477.6 514.6 487.6 511.3 490 509.7" fill="none" stroke="#0d0d0d" stroke-width="2.2" stroke-linecap="round" stroke-linejoin="round"/>
<path d="M402.4 539.5C401.8 544.5 396.8 561.7 399 569.4C401.3 577.2 409.6 584.4 415.6 586C421.7 587.7 434.5 583.3 435.6 579.4C436.7 575.5 423.9 566.7 422.3 562.8C420.6 558.9 420.6 555 425.6 556.1C430.6 557.2 443.9 566.1 452.2 569.4C460.5 572.7 469.1 575.5 475.4 576.1C481.7 576.6 487.6 573.3 490 572.7" fill="none" stroke="#0d0d0d" stroke-width="2.2" stroke-linecap="round" stroke-linejoin="round"/>
<path d="M375.8 569.4C376.1 575 375.3 594.9 377.5 602.6C379.7 610.4 383.8 613 389.1 615.9C394.3 618.8 405.7 619.2 409 619.9" fill="none" stroke="#0d0d0d" stroke-width="2.2" stroke-linecap="round" stroke-linejoin="round"/>
<path d="M395.7 604.3L412.3 597.6L422.9 599.3L409 607.9Z" fill="#0d0d0d" stroke="#0d0d0d" stroke-width="1.5" stroke-linecap="round" stroke-linejoin="round"/>
<path d="M402.4 609.3C403.2 610.4 405.4 615.6 407.3 615.9C409.3 616.2 412.9 611.7 414 610.9" fill="none" stroke="#0d0d0d" stroke-width="1.8" stroke-linecap="round" stroke-linejoin="round"/>
<path d="M407.3 615.9C407.7 616.7 408.6 620.6 409.7 620.9C410.8 621.1 413.3 618.1 414 617.6" fill="none" stroke="#0d0d0d" stroke-width="1.5" stroke-linecap="round" stroke-linejoin="round"/>
<path d="M409 625.9C410.1 623.6 418.4 622 422.3 622.5C426.2 623.1 431.1 626.7 432.2 629.2C433.3 631.7 431.7 636.4 428.9 637.5C426.2 638.6 419 637.7 415.6 635.8C412.3 633.9 407.9 628.1 409 625.9Z" fill="none" stroke="#0d0d0d" stroke-width="2" stroke-linecap="round" stroke-linejoin="round"/>
<path d="M417.3 629.2C417.6 630.3 418.7 634.7 419 635.8" fill="none" stroke="#0d0d0d" stroke-width="1.3" stroke-linecap="round" stroke-linejoin="round"/>
<path d="M423.9 628.5C424.1 629.7 424.8 634.6 424.9 635.8" fill="none" stroke="#0d0d0d" stroke-width="1.3" stroke-linecap="round" stroke-linejoin="round"/>
<path d="M355.9 559.5C357 562.8 359.2 570 362.5 579.4C365.9 588.8 374.1 606.4 375.8 615.9C377.5 625.4 373 633 372.5 636.5" fill="none" stroke="#0d0d0d" stroke-width="2" stroke-linecap="round" stroke-linejoin="round"/>
<path d="M355.9 559.5C357.7 558.6 364.7 555.3 366.5 554.5" fill="none" stroke="#0d0d0d" stroke-width="2" stroke-linecap="round" stroke-linejoin="round"/>
<path d="M372.5 629.2C374.7 628.3 381.8 624.6 385.8 624.2C389.8 623.7 394.6 626.1 396.4 626.5" fill="none" stroke="#0d0d0d" stroke-width="1.8" stroke-linecap="round" stroke-linejoin="round"/>
<path d="M392.4 642.4C393 647.4 394.1 666.7 395.7 672.3C397.4 678 401.3 675.6 402.4 676.3" fill="none" stroke="#0d0d0d" stroke-width="1.6" stroke-linecap="round" stroke-linejoin="round"/>
<path d="M428.9 645.8C434.5 644.7 451.9 641.3 462.1 639.1C472.3 636.9 485.4 633.6 490 632.5" fill="none" stroke="#222" stroke-width="1.5" stroke-linecap="round" stroke-linejoin="round"/>
<path d="M428.9 667.3C434.7 667.1 458 666 463.8 665.7" fill="none" stroke="#222" stroke-width="1.5" stroke-linecap="round" stroke-linejoin="round"/>
<path d="M435.6 615.9C441.1 614.8 459.7 611.5 468.8 609.3C477.8 607 486.5 603.7 490 602.6" fill="none" stroke="#222" stroke-width="1.5" stroke-linecap="round" stroke-linejoin="round"/>
<path d="M445.5 602.6C446 602 447.2 598.9 448.2 598.6C449.2 598.4 450.4 601.4 451.5 601.3C452.6 601.2 454.7 597.5 454.8 598C454.9 598.5 453.3 602.9 452.2 604.3C451.1 605.6 448.8 605.7 448.2 605.9" fill="none" stroke="#222" stroke-width="1.2" stroke-linecap="round" stroke-linejoin="round"/>
<path d="M468.8 590C472.3 589.3 486.5 586.7 490 586" fill="none" stroke="#0d0d0d" stroke-width="4.5" stroke-linecap="round" stroke-linejoin="round"/>
<path d="M419 576.1C419.5 577.7 420.1 584.6 422.3 586C424.5 587.4 430.6 584.6 432.2 584.4" fill="none" stroke="#222" stroke-width="1.4" stroke-linecap="round" stroke-linejoin="round"/>
<path d="M478.7 546.2C479.8 547.8 483.5 555 485.4 556.1C487.2 557.2 489.2 553.4 490 552.8" fill="none" stroke="#333" stroke-width="1.3" stroke-linecap="round" stroke-linejoin="round"/>
<path d="M480 513C483.3 512.4 493.8 508 499.9 509.7C506 511.3 512.9 517.4 516.5 522.9C520.1 528.5 522 536.2 521.5 542.9C520.9 549.5 516.8 558.4 513.2 562.8C509.6 567.2 502.1 568.3 499.9 569.4" fill="none" stroke="#0d0d0d" stroke-width="2" stroke-linecap="round" stroke-linejoin="round"/>
<path d="M496.6 543.5C495.2 541.3 488.9 533.4 488.3 530.2C487.7 527.1 491.8 524.4 493.3 524.6C494.8 524.8 495.9 531.9 497.3 531.6C498.6 531.3 499.9 523.5 501.6 522.9C503.2 522.4 508 524.8 507.2 528.3C506.4 531.7 498.4 541 496.6 543.5" fill="none" stroke="#222" stroke-width="1.3" stroke-linecap="round" stroke-linejoin="round"/>
<path d="M480 552.8C481.7 552.3 487.5 548.7 490 549.5C492.4 550.3 495.2 555.6 494.9 557.8C494.7 560 490.2 562.5 488.3 562.8C486.4 563.1 484.1 560 483.3 559.5" fill="none" stroke="#222" stroke-width="1.4" stroke-linecap="round" stroke-linejoin="round"/>
<path d="M523.2 539.5C523.7 535.7 526.7 526.9 529.8 523.6C532.8 520.3 537.8 519.7 541.4 519.6C545 519.5 549 520.7 551.4 522.9C553.7 525.2 555.7 529.9 555.7 532.9C555.7 535.9 554.6 539.5 551.4 541.2C548.2 542.9 540.6 541.9 536.4 542.9C532.3 543.8 528.7 547.4 526.5 546.8C524.3 546.3 522.6 543.4 523.2 539.5Z" fill="none" stroke="#0d0d0d" stroke-width="2" stroke-linecap="round" stroke-linejoin="round"/>
<path d="M541.4 513.7C542.2 513.3 545.2 510.8 546.4 511.3C547.6 511.9 548 516 548.4 517" fill="none" stroke="#0d0d0d" stroke-width="1.6" stroke-linecap="round" stroke-linejoin="round"/>
<path d="M533.1 529.6C534.5 529 538.9 526.3 541.4 526.3C543.9 526.3 546.9 529 548 529.6" fill="none" stroke="#222" stroke-width="1.2" stroke-linecap="round" stroke-linejoin="round"/>
<path d="M480 590C483.9 589.9 499.4 589.4 503.2 589.3" fill="none" stroke="#0d0d0d" stroke-width="4.5" stroke-linecap="round" stroke-linejoin="round"/>
<path d="M499.9 572.7C502.7 572.2 513.7 570 516.5 569.4" fill="none" stroke="#222" stroke-width="1.5" stroke-linecap="round" stroke-linejoin="round"/>
<path d="M519.8 581C521.5 581.9 527.6 583.5 529.8 586C532 588.5 533.7 592.1 533.1 596C532.6 599.8 529.8 605.8 526.5 609.3C523.2 612.7 515.4 615.3 513.2 616.6" fill="none" stroke="#0d0d0d" stroke-width="1.8" stroke-linecap="round" stroke-linejoin="round"/>
<path d="M529.8 584.4C530.3 583.8 532 580.9 533.1 581C534.2 581.2 535.9 584.6 536.4 585.4" fill="none" stroke="#222" stroke-width="1.2" stroke-linecap="round" stroke-linejoin="round"/>
<text x="524.8" y="597.6" font-size="5.5" fill="#222" font-style="italic" font-weight="normal" transform="rotate(14 524.8 597.6)">Mikii</text>
<path d="M480 615.9C482.2 617.6 488.3 625.3 493.3 625.9C498.3 626.4 506 619.7 509.9 619.2C513.7 618.8 515.4 622.5 516.5 623.2" fill="none" stroke="#0d0d0d" stroke-width="1.8" stroke-linecap="round" stroke-linejoin="round"/>
<path d="M513.2 619.2C516 620.3 526.2 623 529.8 625.9C533.4 628.7 533.9 634.7 534.8 636.5" fill="none" stroke="#222" stroke-width="1.5" stroke-linecap="round" stroke-linejoin="round"/>
<path d="M480 649.1C484.4 648 497.7 644.3 506.6 642.4C515.4 640.6 528.7 638.6 533.1 637.8" fill="none" stroke="#222" stroke-width="1.5" stroke-linecap="round" stroke-linejoin="round"/>
<path d="M486.6 625.9C487.5 626.4 490.2 629.4 491.6 629.2C493 628.9 494.4 625 494.9 624.2" fill="none" stroke="#222" stroke-width="1.2" stroke-linecap="round" stroke-linejoin="round"/>
<path d="M572.9 449.9C573.5 449.1 572.9 445.5 576.3 444.9C579.6 444.4 589 444.7 592.9 446.6C596.7 448.5 598.9 453.2 599.5 456.6C600.1 459.9 597.6 464.2 596.2 466.5C594.8 468.8 592 469.8 591.2 470.5" fill="none" stroke="#3a3a3a" stroke-width="1.4" stroke-linecap="round" stroke-linejoin="round"/>
<path d="M572.9 449.9C572.3 457.7 568.9 476.5 569 496.4C569.1 516.3 565.2 557.5 573.6 569.4C582 581.4 611.8 568.3 619.4 568.1" fill="none" stroke="#3a3a3a" stroke-width="1.4" stroke-linecap="round" stroke-linejoin="round"/>
<path d="M589.5 469.8C589 477 584.6 500.3 586.2 513C587.9 525.7 594 540.7 599.5 546.2C605 551.7 616.1 546.2 619.4 546.2" fill="none" stroke="#3a3a3a" stroke-width="1.3" stroke-linecap="round" stroke-linejoin="round"/>
<path d="M599.5 546.2C600.1 543.5 599.5 533.6 602.8 530.2C606.1 526.9 616.7 526.9 619.4 526.3" fill="none" stroke="#3a3a3a" stroke-width="1.3" stroke-linecap="round" stroke-linejoin="round"/>
<path d="M592.9 461.5C593.5 462.9 596.6 467.3 596.8 469.8C597.1 472.3 594.9 475.4 594.5 476.5" fill="none" stroke="#222" stroke-width="1.6" stroke-linecap="round" stroke-linejoin="round"/>
<path d="M582.9 513C583.3 517.4 585.1 535.1 585.6 539.5" fill="none" stroke="#777" stroke-width="1" stroke-linecap="round" stroke-linejoin="round"/>
<path d="M587.9 513C588.3 517.4 590.1 535.1 590.5 539.5" fill="none" stroke="#777" stroke-width="1" stroke-linecap="round" stroke-linejoin="round"/>
<ellipse cx="619.4" cy="454.9" rx="10" ry="10" fill="none" stroke="#3a3a3a" stroke-width="1.3"/>
<ellipse cx="626.1" cy="488.1" rx="14.9" ry="16.6" fill="none" stroke="#222" stroke-width="1.6"/>
<path d="M612.8 489.1C617.2 488.6 634.9 486.9 639.3 486.4" fill="none" stroke="#222" stroke-width="1.4" stroke-linecap="round" stroke-linejoin="round"/>
<path d="M630 472.5C631 478.2 635 501.3 636 507" fill="none" stroke="#222" stroke-width="1.4" stroke-linecap="round" stroke-linejoin="round"/>
<ellipse cx="631" cy="491.4" rx="2.7" ry="3.3" fill="none" stroke="#222" stroke-width="1.2"/>
<ellipse cx="611.1" cy="541.2" rx="10" ry="8.6" fill="none" stroke="#cfe89a" stroke-width="1"/>
<path d="M601.2 544.5C603.1 544.9 609.5 546.8 612.8 546.8C616.1 546.8 619.7 544.9 621.1 544.5" fill="none" stroke="#777" stroke-width="1.2" stroke-linecap="round" stroke-linejoin="round"/>
<path d="M636 473.2L670.9 444.9L675.9 511.3Z" fill="none" stroke="#d8347e" stroke-width="1.3" stroke-linecap="round" stroke-linejoin="round"/>
<path d="M638.5 471.1L638.9 475.9" fill="none" stroke="#d8347e" stroke-width="1.6" stroke-linecap="round" stroke-linejoin="round"/>
<path d="M641 469.1L641.7 478.6" fill="none" stroke="#d8347e" stroke-width="1.6" stroke-linecap="round" stroke-linejoin="round"/>
<path d="M643.5 467.1L644.6 481.3" fill="none" stroke="#d8347e" stroke-width="1.6" stroke-linecap="round" stroke-linejoin="round"/>
<path d="M646 465.1L647.4 484.1" fill="none" stroke="#d8347e" stroke-width="1.6" stroke-linecap="round" stroke-linejoin="round"/>
<path d="M648.5 463.1L650.2 486.8" fill="none" stroke="#d8347e" stroke-width="1.6" stroke-linecap="round" stroke-linejoin="round"/>
<path d="M651 461.1L653.1 489.5" fill="none" stroke="#d8347e" stroke-width="1.6" stroke-linecap="round" stroke-linejoin="round"/>
<path d="M653.4 459L655.9 492.2" fill="none" stroke="#d8347e" stroke-width="1.6" stroke-linecap="round" stroke-linejoin="round"/>
<path d="M655.9 457L658.8 495" fill="none" stroke="#d8347e" stroke-width="1.6" stroke-linecap="round" stroke-linejoin="round"/>
<path d="M658.4 455L661.6 497.7" fill="none" stroke="#d8347e" stroke-width="1.6" stroke-linecap="round" stroke-linejoin="round"/>
<path d="M660.9 453L664.5 500.4" fill="none" stroke="#d8347e" stroke-width="1.6" stroke-linecap="round" stroke-linejoin="round"/>
<path d="M663.4 451L667.3 503.1" fill="none" stroke="#d8347e" stroke-width="1.6" stroke-linecap="round" stroke-linejoin="round"/>
<path d="M665.9 449L670.2 505.9" fill="none" stroke="#d8347e" stroke-width="1.6" stroke-linecap="round" stroke-linejoin="round"/>
<path d="M668.4 447L673 508.6" fill="none" stroke="#d8347e" stroke-width="1.6" stroke-linecap="round" stroke-linejoin="round"/>
<ellipse cx="657.6" cy="479.8" rx="5" ry="7.3" fill="#fff" stroke="#222" stroke-width="1.4"/>
<path d="M653.3 476.5C654 476 656.2 473.8 657.6 473.8C659 473.8 661.2 476 661.9 476.5" fill="none" stroke="#222" stroke-width="1.4" stroke-linecap="round" stroke-linejoin="round"/>
<ellipse cx="658.3" cy="481.5" rx="1.7" ry="2.7" fill="#222" stroke="#222" stroke-width="1"/>
<ellipse cx="647.6" cy="476.5" rx="2.7" ry="4.6" fill="#fff" stroke="#222" stroke-width="1.2"/>
<path d="M670.9 444.9L692.4 449.9L700.7 504.7L675.9 511.3Z" fill="none" stroke="#222" stroke-width="1.6" stroke-linecap="round" stroke-linejoin="round"/>
<path d="M688.5 476.5C687.7 477 684.1 478.6 684.1 479.8C684.1 481 687.7 483.1 688.5 483.8" fill="none" stroke="#222" stroke-width="1.5" stroke-linecap="round" stroke-linejoin="round"/>
<path d="M669.2 444.9L672.5 430L679.2 430L681.2 443.9Z" fill="#555" stroke="#333" stroke-width="1.3" stroke-linecap="round" stroke-linejoin="round"/>
<ellipse cx="652.6" cy="529.6" rx="23.9" ry="16.6" fill="none" stroke="#666" stroke-width="1.2"/>
<ellipse cx="649.3" cy="569.4" rx="31.5" ry="23.9" fill="none" stroke="#666" stroke-width="1.2"/>
<path d="M636 529.6C638.8 531.2 647.6 539.5 652.6 539.5C657.6 539.5 663.7 531.2 665.9 529.6" fill="none" stroke="#888" stroke-width="1" stroke-linecap="round" stroke-linejoin="round"/>
<path d="M655.9 546.2C656.5 550.1 659.8 562.2 659.3 569.4C658.7 576.6 653.7 586 652.6 589.3" fill="none" stroke="#888" stroke-width="1" stroke-linecap="round" stroke-linejoin="round"/>
<path d="M609.5 633.2C610 630.3 609.5 621 612.8 615.9C616.1 610.8 622.7 605.1 629.4 602.6C636 600.1 646 599.6 652.6 601C659.3 602.3 666.1 607.2 669.2 610.9C672.3 614.6 670.9 621.1 671.2 623.2" fill="none" stroke="#3a3a3a" stroke-width="1.3" stroke-linecap="round" stroke-linejoin="round"/>
<ellipse cx="631" cy="614.2" rx="8" ry="10" fill="none" stroke="#3a3a3a" stroke-width="1.2"/>
<ellipse cx="652.6" cy="614.2" rx="7.3" ry="9.3" fill="none" stroke="#3a3a3a" stroke-width="1.2"/>
<path d="M639.3 590C639.9 591.1 642.1 595.5 642.7 596.6" fill="none" stroke="#3a3a3a" stroke-width="1.2" stroke-linecap="round" stroke-linejoin="round"/>
<path d="M652.6 590C652.9 591.1 654.3 595.5 654.6 596.6" fill="none" stroke="#3a3a3a" stroke-width="1.2" stroke-linecap="round" stroke-linejoin="round"/>
<path d="M574.6 688.9C574.6 685.9 581.5 677.3 589.5 672.3C597.6 667.3 611.7 662.1 622.7 659C633.8 656 652.1 653.5 655.9 654.1C659.8 654.6 652.1 658.8 646 662.4C639.9 666 628.8 670.9 619.4 675.6C610 680.3 597 688.4 589.5 690.6C582.1 692.8 574.6 692 574.6 688.9Z" fill="#fff" stroke="#0d0d0d" stroke-width="2.2" stroke-linecap="round" stroke-linejoin="round"/>
<path d="M659.3 649.1C661.5 645.7 675.9 638 685.8 632.5C695.8 627 708.5 619.5 719 615.9C729.5 612.3 743.6 610.9 748.9 610.9C754.2 610.9 754.7 613.4 750.9 615.9C747 618.4 735.4 621.4 725.6 625.9C715.9 630.3 701.3 637.9 692.4 642.4C683.6 647 678.1 652 672.5 653.1C667 654.2 657 652.5 659.3 649.1Z" fill="#fff" stroke="#0d0d0d" stroke-width="2.2" stroke-linecap="round" stroke-linejoin="round"/>
<ellipse cx="677.5" cy="670.7" rx="31.5" ry="26.6" fill="#fff" stroke="#0d0d0d" stroke-width="2.4" transform="rotate(-15 677.5 670.7)"/>
<path d="M654.3 670.7L672.5 662.4L677.5 670.7L660.9 679Z" fill="#0d0d0d" stroke="#0d0d0d" stroke-width="1.5" stroke-linecap="round" stroke-linejoin="round"/>
<path d="M679.2 660.7L699.1 652.4L702.4 659L684.1 667.7Z" fill="#0d0d0d" stroke="#0d0d0d" stroke-width="1.5" stroke-linecap="round" stroke-linejoin="round"/>
<path d="M672.5 662.4C673.6 662.1 678.1 661 679.2 660.7" fill="none" stroke="#0d0d0d" stroke-width="2" stroke-linecap="round" stroke-linejoin="round"/>
<path d="M659.3 685.6C662.6 685 671.4 685 679.2 682.3C686.9 679.5 700.6 673.4 705.7 669C710.8 664.6 709 657.9 709.7 655.7" fill="none" stroke="#0d0d0d" stroke-width="2.2" stroke-linecap="round" stroke-linejoin="round"/>
<path d="M665.9 692.2C669.2 692.2 679.2 694.9 685.8 692.2C692.4 689.6 702.4 679 705.7 676.3" fill="none" stroke="#0d0d0d" stroke-width="2" stroke-linecap="round" stroke-linejoin="round"/>
<path d="M675.9 683.9C676.4 685.3 678.6 690.9 679.2 692.2" fill="none" stroke="#0d0d0d" stroke-width="1.4" stroke-linecap="round" stroke-linejoin="round"/>
<path d="M689.1 679C689.7 680.6 691.9 687.3 692.4 688.9" fill="none" stroke="#0d0d0d" stroke-width="1.4" stroke-linecap="round" stroke-linejoin="round"/>
<path d="M685.8 688.9C686.9 690.1 691.3 695 692.4 696.2" fill="none" stroke="#0d0d0d" stroke-width="2" stroke-linecap="round" stroke-linejoin="round"/>
<path d="M692.4 692.2C693.6 689.4 701.6 685 705.7 685.6C709.9 686.2 716.2 692.2 717.3 695.6C718.5 698.9 715.4 704.3 712.4 705.5C709.3 706.7 702.4 705.1 699.1 702.9C695.8 700.7 691.3 695.1 692.4 692.2Z" fill="#fff" stroke="#0d0d0d" stroke-width="2" stroke-linecap="round" stroke-linejoin="round"/>
<path d="M692.4 695.6C689 693.9 681.9 696.7 679.2 698.9C676.4 701.1 673.6 705.4 675.9 708.8C678.1 712.3 688.5 719.5 692.4 719.5C696.4 719.5 699.8 712.8 699.8 708.8C699.8 704.9 695.9 697.2 692.4 695.6Z" fill="#fff" stroke="#0d0d0d" stroke-width="2" stroke-linecap="round" stroke-linejoin="round"/>
<path d="M699.8 705.5C701.9 706.7 709.4 712.8 712.4 712.8C715.4 712.8 717.7 707.6 717.7 705.5C717.7 703.5 713.3 701.4 712.4 700.5" fill="none" stroke="#0d0d0d" stroke-width="2" stroke-linecap="round" stroke-linejoin="round"/>
<path d="M915.9 430C916.7 432.8 918.4 441.6 920.9 446.6C923.4 451.6 930 454.3 930.8 459.9C931.7 465.4 928.3 477.6 925.9 479.8C923.4 482 918.7 474.8 915.9 473.2C913.1 471.5 910.9 468.2 909.3 469.8C907.6 471.5 904.8 479.5 905.9 483.1C907 486.8 913.3 489.5 915.9 491.7C918.4 494 920.3 495.6 921.2 496.4" fill="none" stroke="#0d0d0d" stroke-width="1.8" stroke-linecap="round" stroke-linejoin="round"/>
<path d="M920.9 433.3C922.3 436.1 926.9 444.9 929.2 449.9C931.4 454.9 933.6 461 934.5 463.2" fill="none" stroke="#222" stroke-width="1.3" stroke-linecap="round" stroke-linejoin="round"/>
<path d="M959 430C959.9 432.2 964 437.7 964 443.3C964 448.8 962.1 456.6 959 463.2C956 469.8 949.6 478 945.8 483.1C941.9 488.2 937.5 492 935.8 493.7" fill="none" stroke="#0d0d0d" stroke-width="1.8" stroke-linecap="round" stroke-linejoin="round"/>
<path d="M962.4 440C961.3 443.8 959 455.4 955.7 463.2C952.4 470.9 944.7 482.6 942.4 486.4" fill="none" stroke="#333" stroke-width="1.2" stroke-linecap="round" stroke-linejoin="round"/>
<ellipse cx="949.1" cy="670.7" rx="83" ry="20.6" fill="#fff" stroke="#0d0d0d" stroke-width="2" transform="rotate(-14 949.1 670.7)"/>
<path d="M915.9 676.3C920.3 677.3 931.4 683.5 942.4 682.3C953.5 681.1 975.6 671.2 982.3 669" fill="none" stroke="#333" stroke-width="1.2" stroke-linecap="round" stroke-linejoin="round"/>
<path d="M862.1 615.9C862.1 623.6 864.9 634.7 869.4 642.4C874 650.2 881.6 658.2 889.3 662.4C897.1 666.6 904.8 668.2 915.9 667.7C927 667.1 944.7 664.4 955.7 659C966.8 653.7 976.2 645.2 982.3 635.8C988.4 626.4 990.8 612 992.2 602.6C993.7 593.2 1001.4 584.4 990.9 579.4C980.4 574.4 949.4 570 929.2 572.7C908.9 575.5 880.6 588.8 869.4 596C858.2 603.2 862.1 608.1 862.1 615.9Z" fill="#fff" stroke="#0d0d0d" stroke-width="2.2" stroke-linecap="round" stroke-linejoin="round"/>
<ellipse cx="925.9" cy="596" rx="65.7" ry="23.9" fill="#fff" stroke="#0d0d0d" stroke-width="2.2" transform="rotate(-12 925.9 596)"/>
<path d="M872.7 615.9C879.9 617.6 901 625.9 915.9 625.9C930.8 625.9 950.7 622 962.4 615.9C974 609.8 981.7 593.8 985.6 589.3" fill="none" stroke="#333" stroke-width="1.2" stroke-linecap="round" stroke-linejoin="round"/>
<path d="M864.4 629.2C870.8 630.4 887.4 637.2 902.6 636.5C917.8 635.7 941.3 630.2 955.7 624.5C970.1 618.9 983.4 606.3 988.9 602.6" fill="none" stroke="#333" stroke-width="1.3" stroke-linecap="round" stroke-linejoin="round"/>
<path d="M876.1 652.4C882.7 653.6 901.5 660.7 915.9 659.7C930.3 658.7 954.6 648.6 962.4 646.4" fill="none" stroke="#333" stroke-width="1.3" stroke-linecap="round" stroke-linejoin="round"/>
<path d="M879.4 637.8L886 649.1L879.4 660.4L872.7 649.1Z" fill="none" stroke="#222" stroke-width="1.5" stroke-linecap="round" stroke-linejoin="round"/>
<path d="M879.4 642.9L883 649.1L879.4 655.3L875.7 649.1Z" fill="none" stroke="#333" stroke-width="1.1" stroke-linecap="round" stroke-linejoin="round"/>
<path d="M904.3 637.8L910.9 649.8L904.3 661.7L897.6 649.8Z" fill="none" stroke="#222" stroke-width="1.5" stroke-linecap="round" stroke-linejoin="round"/>
<path d="M904.3 643.2L907.9 649.8L904.3 656.3L900.6 649.8Z" fill="none" stroke="#333" stroke-width="1.1" stroke-linecap="round" stroke-linejoin="round"/>
<path d="M940.8 628.5L948.8 641.1L940.8 653.7L932.8 641.1Z" fill="none" stroke="#222" stroke-width="1.5" stroke-linecap="round" stroke-linejoin="round"/>
<path d="M940.8 634.2L945.2 641.1L940.8 648.1L936.4 641.1Z" fill="none" stroke="#333" stroke-width="1.1" stroke-linecap="round" stroke-linejoin="round"/>
<path d="M974 616.6L980.6 628.5L974 640.5L967.3 628.5Z" fill="none" stroke="#222" stroke-width="1.5" stroke-linecap="round" stroke-linejoin="round"/>
<path d="M974 621.9L977.6 628.5L974 635.1L970.3 628.5Z" fill="none" stroke="#333" stroke-width="1.1" stroke-linecap="round" stroke-linejoin="round"/>
<path d="M982.3 569.4C983.9 567.2 988.4 558.4 992.2 556.1C996.1 553.9 1001.9 553.9 1005.5 556.1C1009.2 558.4 1013 563.9 1014.1 569.4C1015.3 575 1014.7 583.8 1012.2 589.3C1009.6 594.9 1002.2 601 998.9 602.6C995.6 604.3 993.3 599.8 992.2 599.3" fill="none" stroke="#0d0d0d" stroke-width="2.2" stroke-linecap="round" stroke-linejoin="round"/>
<path d="M990.6 572.7C992 571.6 996.4 566.1 998.9 566.1C1001.4 566.1 1004.7 568.9 1005.5 572.7C1006.3 576.6 1005.5 585.5 1003.9 589.3C1002.2 593.2 996.9 594.9 995.6 596" fill="none" stroke="#222" stroke-width="1.5" stroke-linecap="round" stroke-linejoin="round"/>
<ellipse cx="995.6" cy="610.9" rx="5" ry="6" fill="#fff" stroke="#0d0d0d" stroke-width="1.8"/>
<path d="M914.2 667.7C915.1 668.8 914 673.2 919.2 674.3C924.5 675.4 937.5 676.7 945.8 674.3C954.1 671.9 965.1 662.1 969 659.7" fill="none" stroke="#0d0d0d" stroke-width="2" stroke-linecap="round" stroke-linejoin="round"/>
<path d="M962.4 513C962.1 509.9 963.5 503.3 967.3 501.4C971.2 499.4 981.5 499.4 985.6 501.4C989.8 503.3 992.8 509.6 992.2 513C991.7 516.4 986.2 520.5 982.3 521.6C978.4 522.7 972.3 521.1 969 519.6C965.7 518.2 962.6 516 962.4 513Z" fill="none" stroke="#d4463a" stroke-width="1.3" stroke-linecap="round" stroke-linejoin="round"/>
<path d="M964 515C966.2 515.3 972.8 517.5 977.3 517C981.8 516.4 988.6 512.5 990.9 511.7" fill="none" stroke="#d4463a" stroke-width="1.2" stroke-linecap="round" stroke-linejoin="round"/>
<ellipse cx="955.7" cy="536.2" rx="16.6" ry="13.3" fill="none" stroke="#d4463a" stroke-width="1.3"/>
<ellipse cx="945.8" cy="526.3" rx="6.6" ry="6" fill="none" stroke="#d4463a" stroke-width="1.1"/>
<ellipse cx="942.4" cy="540.2" rx="6" ry="5.3" fill="none" stroke="#d4463a" stroke-width="1.1"/>
<ellipse cx="962.4" cy="546.8" rx="7.3" ry="5" fill="none" stroke="#d4463a" stroke-width="1.1"/>
<ellipse cx="962.4" cy="535.6" rx="4.6" ry="4.6" fill="none" stroke="#d4463a" stroke-width="1.1"/>
<path d="M942.4 556.1C940.2 558.4 933.6 564.4 929.2 569.4C924.7 574.4 919.2 580.5 915.9 586C912.6 591.5 909.3 598.6 909.3 602.6C909.3 606.6 911.5 610.4 915.9 609.9C920.3 609.5 930.3 603.3 935.8 600C941.3 596.6 946.9 591.7 949.1 590" fill="none" stroke="#d4463a" stroke-width="1.4" stroke-linecap="round" stroke-linejoin="round"/>
<path d="M962.4 562.8C963.5 565.5 969 572.7 969 579.4C969 586 966.8 598.1 962.4 602.6C957.9 607.2 945.8 605.9 942.4 606.6" fill="none" stroke="#d4463a" stroke-width="1.4" stroke-linecap="round" stroke-linejoin="round"/>
<path d="M909.3 596C911.5 595.4 917 592.7 922.5 592.7C928.1 592.7 936.4 594.2 942.4 596C948.5 597.7 955.7 603.3 959 603.3C962.4 603.3 964 598 962.4 596C960.7 594 951.3 592.1 949.1 591.3" fill="none" stroke="#d4463a" stroke-width="1.5" stroke-linecap="round" stroke-linejoin="round"/>
<path d="M915.9 602.6C918.1 601.8 924.2 597.6 929.2 597.6C934.1 597.6 943 601.8 945.8 602.6" fill="none" stroke="#d4463a" stroke-width="2" stroke-linecap="round" stroke-linejoin="round"/>
<path d="M972.3 539.5C976.2 540.7 988.9 545.4 995.6 546.2C1002.2 547 1009.4 544.8 1012.2 544.5" fill="none" stroke="#d4463a" stroke-width="1" stroke-linecap="round" stroke-linejoin="round"/>
<path d="M922.5 552.8C925.9 552.3 939.1 550.1 942.4 549.5" fill="none" stroke="#d4463a" stroke-width="1" stroke-linecap="round" stroke-linejoin="round"/>
<path d="M965.7 499.7C968.5 499.2 977.3 496.1 982.3 496.4C987.3 496.7 993.3 500.8 995.6 501.7" fill="none" stroke="#d4463a" stroke-width="1" stroke-linecap="round" stroke-linejoin="round"/>
<path d="M992.2 522.9C994.5 524.1 1002.2 526.3 1005.5 529.6C1008.8 532.9 1011.1 540.7 1012.2 542.9" fill="none" stroke="#d4463a" stroke-width="1" stroke-linecap="round" stroke-linejoin="round"/>
<path d="M929.2 559.5C931.9 560 940.8 560.6 945.8 562.8C950.7 565 956.8 571.1 959 572.7" fill="none" stroke="#d4463a" stroke-width="1.2" stroke-linecap="round" stroke-linejoin="round"/>
<path d="M949.1 569.4C950.2 572.2 955.2 581 955.7 586C956.3 591 953 597.1 952.4 599.3" fill="none" stroke="#d4463a" stroke-width="1.2" stroke-linecap="round" stroke-linejoin="round"/>
<path d="M844.5 642.4C843.7 645.2 839.3 654 839.5 659C839.8 664.1 841.2 669.9 846.2 673C851.2 676.1 865.5 676.9 869.4 677.6" fill="none" stroke="#d4463a" stroke-width="1.5" stroke-linecap="round" stroke-linejoin="round"/>
<path d="M861.1 664C863.1 664.7 867.7 667.7 872.7 668.3C877.8 668.9 888.2 667.8 891.3 667.7" fill="none" stroke="#d4463a" stroke-width="1.4" stroke-linecap="round" stroke-linejoin="round"/>
<path d="M988.9 642.4C992.2 640.8 1003.9 636.9 1008.8 632.5C1013.8 628.1 1017.1 618.7 1018.8 615.9" fill="none" stroke="#d4463a" stroke-width="1.4" stroke-linecap="round" stroke-linejoin="round"/>
<path d="M995.6 647.8C998.3 646.3 1009.4 640.6 1012.2 639.1" fill="none" stroke="#d4463a" stroke-width="1.3" stroke-linecap="round" stroke-linejoin="round"/>
<path d="M1015.5 602.6C1015.3 604.8 1015.8 611.4 1014.1 615.9C1012.5 620.4 1007 627.5 1005.5 629.8" fill="none" stroke="#d4463a" stroke-width="1.4" stroke-linecap="round" stroke-linejoin="round"/>
<path d="M896 675.6C898.2 676 904.8 677.6 909.3 677.6C913.7 677.6 920.3 676 922.5 675.6" fill="none" stroke="#d4463a" stroke-width="1.1" stroke-linecap="round" stroke-linejoin="round"/>
<path d="M769.5 380L790.4 380L799.7 393.9L788.1 405.6L779.9 408.3L773 396.3Z" fill="#5c2a6e" stroke="#0d0d0d" stroke-width="2.5" stroke-linecap="round" stroke-linejoin="round"/>
<path d="M881 380L929.8 380L927.5 393.9L915.9 410.2L897.3 419.5L878.7 424.6L869.4 412.5L881 393.9Z" fill="#5c2a6e" stroke="#0d0d0d" stroke-width="2.5" stroke-linecap="round" stroke-linejoin="round"/>
<path d="M797.4 446.2C784.2 447.4 783 450.7 776.5 454.3C769.9 458 763.3 463.2 757.9 468.3C752.5 473.3 747 479.9 743.9 484.5C740.8 489.2 738.1 491.9 739.3 496.2C740.5 500.4 746.3 505.8 750.9 510.1C755.6 514.4 760.6 519.2 767.2 521.7C773.8 524.3 781.9 525.4 790.4 525.4C798.9 525.4 808.2 523.1 818.3 521.7C828.3 520.3 840.7 519.6 850.8 517.1C860.9 514.5 870.9 510.5 878.7 506.6C886.4 502.7 894.9 498.7 897.3 493.8C899.6 489 895.3 482.6 892.6 477.6C889.9 472.5 885.3 467.9 881 463.6C876.7 459.4 871.3 454.7 867.1 452C862.8 449.3 867.1 448.3 855.5 447.4C843.8 446.4 810.5 445 797.4 446.2Z" fill="#4b8ff0" stroke="#0d0d0d" stroke-width="3" stroke-linecap="round" stroke-linejoin="round"/>
<path d="M806.7 447.4L788.1 456.7L771.8 477.6L760.2 500.8L764.8 510.6L783.4 482.2L799.7 461.3Z" fill="#f23ec0" stroke="#f23ec0" stroke-width="0.5" stroke-linecap="round" stroke-linejoin="round"/>
<path d="M802 463.6L786.9 485.7L779.3 510.1L788.1 519.9L793.2 496.2L802.5 472.9L811.8 454.8Z" fill="#f23ec0" stroke="#f23ec0" stroke-width="0.5" stroke-linecap="round" stroke-linejoin="round"/>
<path d="M881 477.6L888.4 489.2L878.7 503.6L867.1 510.6L860.1 510.6L874 496.2Z" fill="#f23ec0" stroke="#f23ec0" stroke-width="0.5" stroke-linecap="round" stroke-linejoin="round"/>
<ellipse cx="739.8" cy="497.3" rx="4.6" ry="4.6" fill="#fff" stroke="#0d0d0d" stroke-width="1.8"/>
<ellipse cx="743.5" cy="505.5" rx="4.6" ry="4.6" fill="#fff" stroke="#0d0d0d" stroke-width="1.8"/>
<ellipse cx="749.5" cy="513.6" rx="4.6" ry="4.6" fill="#fff" stroke="#0d0d0d" stroke-width="1.8"/>
<ellipse cx="757.4" cy="520.6" rx="4.6" ry="4.6" fill="#fff" stroke="#0d0d0d" stroke-width="1.8"/>
<ellipse cx="766" cy="525.9" rx="4.6" ry="4.6" fill="#fff" stroke="#0d0d0d" stroke-width="1.8"/>
<ellipse cx="775.3" cy="529.1" rx="4.6" ry="4.6" fill="#fff" stroke="#0d0d0d" stroke-width="1.8"/>
<ellipse cx="785.3" cy="531" rx="4.6" ry="4.6" fill="#fff" stroke="#0d0d0d" stroke-width="1.8"/>
<ellipse cx="795.5" cy="530.5" rx="4.6" ry="4.6" fill="#fff" stroke="#0d0d0d" stroke-width="1.8"/>
<ellipse cx="805.5" cy="529.1" rx="4.6" ry="4.6" fill="#fff" stroke="#0d0d0d" stroke-width="1.8"/>
<ellipse cx="815.5" cy="527.8" rx="4.6" ry="4.6" fill="#fff" stroke="#0d0d0d" stroke-width="1.8"/>
<ellipse cx="825.2" cy="526.4" rx="4.6" ry="4.6" fill="#fff" stroke="#0d0d0d" stroke-width="1.8"/>
<ellipse cx="835" cy="525.4" rx="4.6" ry="4.6" fill="#fff" stroke="#0d0d0d" stroke-width="1.8"/>
<ellipse cx="844.8" cy="524" rx="4.6" ry="4.6" fill="#fff" stroke="#0d0d0d" stroke-width="1.8"/>
<ellipse cx="854.5" cy="521.7" rx="4.6" ry="4.6" fill="#fff" stroke="#0d0d0d" stroke-width="1.8"/>
<ellipse cx="863.8" cy="518.9" rx="4.6" ry="4.6" fill="#fff" stroke="#0d0d0d" stroke-width="1.8"/>
<ellipse cx="872.6" cy="515.7" rx="4.6" ry="4.6" fill="#fff" stroke="#0d0d0d" stroke-width="1.8"/>
<ellipse cx="881" cy="511.3" rx="4.6" ry="4.6" fill="#fff" stroke="#0d0d0d" stroke-width="1.8"/>
<ellipse cx="888.9" cy="505.5" rx="4.6" ry="4.6" fill="#fff" stroke="#0d0d0d" stroke-width="1.8"/>
<ellipse cx="895.4" cy="498.9" rx="4.6" ry="4.6" fill="#fff" stroke="#0d0d0d" stroke-width="1.8"/>
<ellipse cx="900.5" cy="491.5" rx="4.6" ry="4.6" fill="#fff" stroke="#0d0d0d" stroke-width="1.8"/>
<path d="M816 449.7C807.4 452.8 808.2 461.3 804.3 468.3C800.5 475.2 794.9 484.5 792.7 491.5C790.6 498.5 789.2 505.5 791.6 510.1C793.9 514.7 799.9 517.8 806.7 519.4C813.4 520.9 823.3 520.6 832.2 519.4C841.1 518.2 852.4 516.3 860.1 512.4C867.8 508.5 875.6 502 878.7 496.2C881.8 490.3 880.6 483.8 878.7 477.6C876.7 471.4 870.9 463.6 867.1 459C863.2 454.3 864 451.2 855.5 449.7C846.9 448.1 824.5 446.6 816 449.7Z" fill="#fff" stroke="#0d0d0d" stroke-width="3" stroke-linecap="round" stroke-linejoin="round"/>
<path d="M743.9 484.5C745.5 487.3 748.6 495.6 753.2 500.8C757.9 506 765.2 512.6 771.8 515.9C778.4 519.2 789.2 519.8 792.7 520.6" fill="none" stroke="#0d0d0d" stroke-width="2.5" stroke-linecap="round" stroke-linejoin="round"/>
<path d="M834.5 403.2L853.1 403.2L856.6 421.8L869.4 440.4L862.4 447.8L850.8 438.1L841.5 449.7L834.5 438.1L832.2 421.8Z" fill="#0d0d0d" stroke="#0d0d0d" stroke-width="2" stroke-linecap="round" stroke-linejoin="round"/>
<path d="M838.7 405.6L839.7 419.5" fill="none" stroke="#fff" stroke-width="2.2" stroke-linecap="round" stroke-linejoin="round"/>
<path d="M845 404.4L845.7 418.3" fill="none" stroke="#fff" stroke-width="2.2" stroke-linecap="round" stroke-linejoin="round"/>
<path d="M850.8 405.1L851.3 417.2" fill="none" stroke="#fff" stroke-width="2" stroke-linecap="round" stroke-linejoin="round"/>
<path d="M826.4 438.1L832.2 438.1L843.8 468.3L838 471.1Z" fill="#fff" stroke="#0d0d0d" stroke-width="2" stroke-linecap="round" stroke-linejoin="round"/>
<path d="M850.8 440.9L855.5 440.4L858.2 466L853.1 467.4Z" fill="#fff" stroke="#0d0d0d" stroke-width="2" stroke-linecap="round" stroke-linejoin="round"/>
<path d="M795 426.5C797.4 426.5 804.1 431.7 806.7 434.6C809.2 437.5 811.3 442.5 810.1 444.1C809 445.7 802.6 445.7 799.7 444.1C796.8 442.5 793.5 437.5 792.7 434.6C792 431.7 792.7 426.5 795 426.5Z" fill="#4b8ff0" stroke="#0d0d0d" stroke-width="2.5" stroke-linecap="round" stroke-linejoin="round"/>
<path d="M855.5 405.6C856.6 402.5 862.2 400.9 864.7 400.9C867.3 400.9 870 402.8 870.8 405.6C871.6 408.3 870.6 413.8 869.4 417.2C868.2 420.5 865.5 425.1 863.6 425.5C861.6 425.9 859.1 422.8 857.8 419.5C856.4 416.2 854.3 408.7 855.5 405.6Z" fill="#4b8ff0" stroke="#0d0d0d" stroke-width="2.5" stroke-linecap="round" stroke-linejoin="round"/>
<path d="M799.7 400.9C801.4 397.6 805.5 395.9 809 395.1C812.5 394.3 817.3 394.5 820.6 396.3C823.9 398 826.8 400.9 828.7 405.6C830.7 410.2 832.4 419.3 832.2 424.1C832 429 830.7 432.7 827.6 434.8C824.5 437 817.5 438 813.6 437.1C809.8 436.3 806.9 433.7 804.3 429.9C801.8 426.2 799.3 419.7 798.5 414.8C797.8 410 798 404.2 799.7 400.9Z" fill="#f23ec0" stroke="#0d0d0d" stroke-width="3.2" stroke-linecap="round" stroke-linejoin="round"/>
<path d="M806.7 423.2C808.6 422.8 814.6 421 818.3 420.9C822 420.7 827 422 828.7 422.3" fill="none" stroke="#a0208a" stroke-width="2" stroke-linecap="round" stroke-linejoin="round"/>
<path d="M832.2 472.9C835.1 470 841.5 469.4 846.2 469.4C850.8 469.4 856.2 470.8 860.1 472.9C864 475.1 867.6 479.1 869.4 482.2C871.2 485.3 871.9 489.2 870.8 491.5C869.6 493.8 865.4 494.2 862.4 496.2C859.5 498.1 856.6 501.6 853.1 503.1C849.6 504.7 845 506.2 841.5 505.5C838 504.7 834.3 501.6 832.2 498.5C830.1 495.4 828.7 491.1 828.7 486.9C828.7 482.6 829.3 475.8 832.2 472.9Z" fill="#4b8ff0" stroke="#0d0d0d" stroke-width="3" stroke-linecap="round" stroke-linejoin="round"/>
<path d="M862.4 485C863.6 485.2 868.2 485.8 869.4 485.9" fill="none" stroke="#f23ec0" stroke-width="3.5" stroke-linecap="round" stroke-linejoin="round"/>
<path d="M861.3 492.9C862.3 493.1 866.5 493.7 867.5 493.8" fill="none" stroke="#f23ec0" stroke-width="3.5" stroke-linecap="round" stroke-linejoin="round"/>
<path d="M850.8 496.2C851.8 496.7 855.6 499.1 856.6 499.6" fill="none" stroke="#f23ec0" stroke-width="3" stroke-linecap="round" stroke-linejoin="round"/>
<path d="M846.2 472.9C846.4 474.5 847.1 480.7 847.3 482.2" fill="none" stroke="#0d0d0d" stroke-width="1.6" stroke-linecap="round" stroke-linejoin="round"/>
<path d="M855.5 475.2C855.6 476.8 856.4 483 856.6 484.5" fill="none" stroke="#0d0d0d" stroke-width="1.6" stroke-linecap="round" stroke-linejoin="round"/>
<path d="M785.8 531.5C785.6 533 784.8 539.2 784.6 540.8" fill="none" stroke="#0d0d0d" stroke-width="2.2" stroke-linecap="round" stroke-linejoin="round"/>
<path d="M843.8 525.4C844 528 844.8 538.2 845 540.8" fill="none" stroke="#0d0d0d" stroke-width="2.2" stroke-linecap="round" stroke-linejoin="round"/>
<path d="M762.5 565.9C762.1 562.5 768.3 556.2 771.8 551.9C775.3 547.7 779.2 543 783.4 540.3C787.7 537.6 793.5 535.3 797.4 535.7C801.2 536 805.1 539.1 806.7 542.6C808.2 546.1 809 552.3 806.7 556.6C804.3 560.8 798.1 565.6 792.7 568.2C787.3 570.7 779.2 572.3 774.1 571.9C769.1 571.5 762.9 569.2 762.5 565.9Z" fill="#0d0d0d" stroke="#0d0d0d" stroke-width="2" stroke-linecap="round" stroke-linejoin="round"/>
<path d="M811.3 554.2C811.3 550 819.1 544.2 822.9 540.3C826.8 536.4 830.7 531.8 834.5 531C838.4 530.2 841.9 531.8 846.2 535.7C850.4 539.5 856.2 549.2 860.1 554.2C864 559.3 872.5 563.3 869.4 565.9C866.3 568.4 849.3 569.6 841.5 569.6C833.8 569.6 828 568.4 822.9 565.9C817.9 563.3 811.3 558.5 811.3 554.2Z" fill="#0d0d0d" stroke="#0d0d0d" stroke-width="2" stroke-linecap="round" stroke-linejoin="round"/>
<ellipse cx="791.6" cy="549.6" rx="5.6" ry="7.9" fill="#fff" stroke="none" stroke-width="0" transform="rotate(25 791.6 549.6)"/>
<ellipse cx="835.7" cy="543.8" rx="4.6" ry="7" fill="#fff" stroke="none" stroke-width="0" transform="rotate(-20 835.7 543.8)"/>
<path d="M806.7 551.9C807.8 552.7 812.5 555.8 813.6 556.6" fill="none" stroke="#0d0d0d" stroke-width="5" stroke-linecap="round" stroke-linejoin="round"/>
<path d="M860.1 544.9L864.7 540.3L869.4 528.7L878.7 524L883.3 519.4L892.6 517.1L897.3 512.4L906.6 513.6L915.9 510.1L925.1 515.9L932.1 519.4L934.4 526.4L936.8 531L929.8 542.6L922.8 540.3L915.9 547.7L901.9 550.8L888 557L878.7 553.1L869.4 554.7L865.9 548.4Z" fill="#fff" stroke="#222" stroke-width="1.6" stroke-linecap="round" stroke-linejoin="round"/>
<path d="M879.8 540.3C882.2 537.5 891.3 533.7 897.3 532.2C903.3 530.6 912.7 530 915.9 531C919 532 918.6 536 916.3 538C914 540 907.4 541.3 901.9 543.1C896.4 544.9 887 549.1 883.3 548.7C879.6 548.2 877.5 543 879.8 540.3Z" fill="#0d0d0d" stroke="#0d0d0d" stroke-width="1.5" stroke-linecap="round" stroke-linejoin="round"/>
<path d="M888 525.2C888.6 525.8 890.2 528.6 891.5 528.7C892.7 528.8 894.8 526.4 895.4 525.9" fill="none" stroke="#0d0d0d" stroke-width="1.8" stroke-linecap="round" stroke-linejoin="round"/>
<path d="M908.9 522.2C909.3 522.8 910.5 525.7 911.7 525.9C912.8 526.1 915.2 524 915.9 523.6" fill="none" stroke="#0d0d0d" stroke-width="1.8" stroke-linecap="round" stroke-linejoin="round"/>
<path d="M878.7 528.7C880.2 527.3 884.9 521.6 888 520.6C891.1 519.5 895.7 521.9 897.3 522.2" fill="none" stroke="#333" stroke-width="1.2" stroke-linecap="round" stroke-linejoin="round"/>
<path d="M906.6 517.1C908.1 516.7 912.8 514 915.9 514.7C918.9 515.5 923.6 520.6 925.1 521.7" fill="none" stroke="#333" stroke-width="1.2" stroke-linecap="round" stroke-linejoin="round"/>
<path d="M915.9 419.5C917 418.3 919.7 413.3 922.8 412.5C925.9 411.7 932.9 412.5 934.4 414.8C936 417.2 934.1 423.7 932.1 426.5C930.2 429.3 924.4 430.7 922.8 431.6" fill="none" stroke="#0d0d0d" stroke-width="1.8" stroke-linecap="round" stroke-linejoin="round"/>
<path d="M936.8 410.2C939 409 947.8 404.4 950 403.2" fill="none" stroke="#0d0d0d" stroke-width="1.6" stroke-linecap="round" stroke-linejoin="round"/>
<path d="M920.5 433.4C919.7 436.1 914.7 444.7 915.9 449.7C917 454.7 924.7 459 927.5 463.6C930.3 468.3 931.7 475.2 932.6 477.6" fill="none" stroke="#0d0d0d" stroke-width="1.8" stroke-linecap="round" stroke-linejoin="round"/>
<path d="M915.9 468.3C914.7 470.2 908.9 475.9 908.9 479.9C908.9 483.8 913.8 490.8 915.9 492C917.9 493.1 920.1 487.7 921 486.9" fill="none" stroke="#0d0d0d" stroke-width="1.8" stroke-linecap="round" stroke-linejoin="round"/>
<path d="M939.1 449.7C940.1 452 943.1 459 944.9 463.6C946.7 468.3 949.2 475.2 950 477.6" fill="none" stroke="#0d0d0d" stroke-width="1.6" stroke-linecap="round" stroke-linejoin="round"/>
</svg>

  </div>
  <!-- overlay elements inside player: coords = page - (48,88) -->
<!-- participants -->
<div class="abs" style="left:15px;top:31.500px;width:50px;height:50px;border-radius:50%;background:#3cb83c"></div>
<div class="abs" style="left:18px;top:34.500px;width:44px;height:44px;border-radius:50%;overflow:hidden;background:#1d1a52">
<svg style="left:0;top:0" width="44" height="44" viewBox="0 0 55 55"><rect width="55" height="55" fill="#16114c"/><path d="M36 0 H55 V55 H30 Q48 40 50 22 Q50 8 36 0Z" fill="#252596"/><path d="M20 8 Q24 2 33 3.500 Q41 5 40 14 Q42 22 38 28 L34 36 L22 36 Q16 34 14 40 Q10 44 6 40 Q5 36 9 34 Q8 29 12 26 Q9 21 13 17 Q10 11 16 9Z" fill="#3d2230"/><ellipse cx="25.500" cy="20" rx="8.500" ry="10.500" fill="#f4c9a8"/><path d="M17 18 Q18 8 28 8 Q36 8 36 16 Q31 10 24 12 Q19 13 17 18Z" fill="#3d2230"/><path d="M22 30 L26 33 L36 28 L40 36 L24 40 L20 36Z" fill="#f2bd98"/><ellipse cx="20.500" cy="19.800" rx="2" ry="2.700" fill="#fff"/><ellipse cx="28" cy="17.700" rx="2.200" ry="2.800" fill="#fff"/><ellipse cx="20.700" cy="20" rx="1" ry="1.800" fill="#2f8a2a"/><ellipse cx="28.200" cy="18" rx="1" ry="1.800" fill="#2f8a2a"/><ellipse cx="26.500" cy="26.500" rx="4" ry="3" fill="#f28a90"/><path d="M31 24 Q34 30 40 31 L36 38 Q30 36 29 30Z" fill="#3d2230"/><path d="M8 47 Q14 40 22 37 Q30 40 38 34 L40 22 Q46 21 50 27 Q52 36 50 42 Q44 52 34 55 H14 Q10 52 8 47Z" fill="#8791a2"/><path d="M40 36 Q44 30 50 34 Q50 42 44 50 Q40 46 40 36Z" fill="#7a6a9a" opacity="0.600"/><path d="M36 22 Q34 16 37 13 L41.500 12 L42 5.500 Q43.500 4.500 44 6.500 L44.500 16 Q44 21 41 23Z" fill="#f4c9a8"/><rect x="33" y="17" width="5" height="7.500" rx="2" fill="#3ac9a8" transform="rotate(-20 35.500 20.700)"/><rect x="40" y="9" width="6" height="7" rx="2" fill="#3ac9a8" transform="rotate(-25 43 12.500)"/></svg></div>
<div class="abs" style="left:15px;top:83px;width:50px;height:50px;border-radius:50%;background:#3cb83c"></div>
<div class="abs" style="left:18px;top:86px;width:44px;height:44px;border-radius:50%;overflow:hidden;background:#7a3d16">
<svg style="left:0;top:0" width="44" height="44" viewBox="0 0 44 44"><rect width="44" height="44" fill="#6e3512"/><path d="M0 12 Q4 8 8 14 Q6 24 10 34 L0 40Z" fill="#f0d83a"/><path d="M14 0 H26 Q22 6 16 5Z" fill="#f0d83a"/><path d="M6 14 Q10 2 26 4 Q42 6 42 24 L38 32 Q30 14 16 18 Q10 20 6 14Z" fill="#8a4518"/><path d="M12 24 Q14 16 24 18 Q30 22 30 30 Q28 38 20 38 Q12 34 12 24Z" fill="#f2c4a8"/><path d="M10 20 Q18 14 28 18 L26 24 Q18 20 12 26Z" fill="#7a3a14"/><path d="M28 30 Q38 28 42 36 V44 H26Z" fill="#f2c4a8"/><path d="M6 44 Q8 34 20 38 L30 44Z" fill="#5c9a4a"/><path d="M34 30 Q40 34 40 44" stroke="#3d2a1a" stroke-width="2.500" fill="none"/></svg></div>
<div class="abs" style="left:73.500px;top:42px;width:80px;height:27px;border-radius:3px;background:#1f2022"></div>
<div class="t b" id="pn1" style="left:79px;top:48px;font-size:14px;color:#f3f3f3;letter-spacing:-0.75px">Snoopy7c7</div>
<div class="abs" style="left:73.500px;top:92.500px;width:32px;height:26.500px;border-radius:3px;background:#1f2022"></div>
<div class="t b" id="pn2" style="left:79px;top:98.500px;font-size:14px;color:#f3f3f3;letter-spacing:-0.5px">viri</div>

<!-- cursor rings -->
<svg style="left:0;top:0" width="1230" height="691" viewBox="48 88 1230 691">
<path d="M466.5 156 A11 11 0 1 1 489 156" fill="none" stroke="#58c8a8" stroke-width="1.500"/>
<path d="M466.500 156 A11 11 0 0 0 489 156" fill="none" stroke="#bfeee0" stroke-width="1.200"/>
<circle cx="779" cy="281" r="10" fill="none" stroke="#e06a5a" stroke-width="1.100"/>
<path d="M975 723.500 A10.500 10.500 0 1 0 994.500 723.500" fill="none" stroke="#e0457a" stroke-width="1.300"/>
<path d="M975 723.500 A10.500 10.500 0 0 1 994.500 723.500" fill="none" stroke="#f5a8c4" stroke-width="1.100"/>
<circle cx="474" cy="391" r="9" fill="none" stroke="#eef3b0" stroke-width="1.200"/>
<circle cx="611" cy="541" r="9" fill="none" stroke="#d6f0b0" stroke-width="1.200"/>
</svg>

<!-- name tags -->
<div class="tag" style="left:436px;top:72px;width:66px;background:#5fe0d8;color:#0a403e"><i style="background:#b5672a"><svg style="left:0;top:0" width="19" height="20" viewBox="0 0 19 20"><rect width="19" height="20" fill="#b0602a"/><ellipse cx="9.500" cy="10.500" rx="6" ry="5.500" fill="#f0dccf"/><circle cx="7" cy="9" r="1" fill="#3a2a1a"/><circle cx="12" cy="9" r="1" fill="#3a2a1a"/><rect x="0" y="15" width="19" height="5" fill="#a8641e"/></svg></i><span id="tg1">April.lol</span></div>
<div class="tag" style="left:429px;top:311.500px;width:72px;background:#ffe838;color:#3a3200"><i style="background:#777"><svg style="left:0;top:0" width="19" height="20" viewBox="0 0 19 20"><rect width="19" height="20" fill="#6e6e6a"/><ellipse cx="9.500" cy="11" rx="6" ry="6" fill="#e8e4dc"/><circle cx="7.500" cy="10" r="0.900" fill="#222"/><circle cx="11.500" cy="10" r="0.900" fill="#222"/><ellipse cx="9.500" cy="13" rx="1.500" ry="1" fill="#333"/></svg></i><span id="tg2" style="left:25px">viridihart</span></div>
<div class="tag" style="left:738.500px;top:200px;width:64px;background:#f0564a;color:#3a0a06"><i style="background:#fff"><svg style="left:0;top:0" width="19" height="20" viewBox="0 0 19 20"><rect width="19" height="20" fill="#fff"/><path d="M9 4 L11 7 L9 10 L12 14 L8 17" stroke="#222" stroke-width="1.800" fill="none"/><circle cx="10" cy="3.500" r="1.200" fill="#c33"/></svg></i><span id="tg3" style="left:25.500px">Flower</span></div>
<div class="tag" style="left:212px;top:433.500px;width:74px;height:21px;line-height:21px"><div class="abs" style="left:18px;top:0;width:56px;height:21px;background:#f5b31f"></div><i><svg style="left:0;top:0" width="19" height="21" viewBox="0 0 19 21"><path d="M9.500 3 Q14 8 15 13 Q15 19 9.500 19 Q4 19 4 13 Q5 8 9.500 3Z" fill="#f08a8a"/><path d="M9.500 9 Q12 12 12 15 Q12 18 9.500 18 Q7 18 7 15 Q7 12 9.500 9Z" fill="#f7c0c0"/></svg></i><span id="tg4" style="left:24px;color:#3a2800">Dekoponi</span></div>
<div class="tag" style="left:571.500px;top:462px;width:96px;background:#a3f25a;color:#1a3a00"><i style="background:#222"><svg style="left:0;top:0" width="19" height="20" viewBox="0 0 19 20"><rect width="19" height="20" fill="#1e1a14"/><circle cx="9.500" cy="10" r="6.500" fill="#b8862e"/><circle cx="9.500" cy="10.500" r="4" fill="#e0b860"/><circle cx="8" cy="9.500" r="0.800" fill="#222"/><circle cx="11" cy="9.500" r="0.800" fill="#222"/></svg></i><span id="tg5" style="left:24.700px">Hailey Stumbo</span></div>
<div class="tag" style="left:942.500px;top:645px;width:86.500px;background:#ee4f85;color:#4a0a22"><i style="background:#bfe6ea;width:20px"><svg style="left:0;top:0" width="20" height="20" viewBox="0 0 20 20"><rect width="20" height="20" fill="#c4e8ec"/><path d="M5 8 Q6 2 11 3 Q16 4 15 9 L13 7 L8 8Z" fill="#2a2a33"/><ellipse cx="10" cy="10" rx="4" ry="4" fill="#f2d4c4"/><path d="M4 20 Q5 14 10 14 Q15 14 16 20Z" fill="#e8e8ee"/><circle cx="8" cy="12" r="1" fill="#d83a5a"/></svg></i><span id="tg6" style="left:26px">Sakaruchibi</span></div>

<!-- yoshi thumbnail -->
<svg style="left:1159px;top:602.500px" width="55.500" height="55.500" viewBox="0 0 55 55">
<rect width="55" height="55" fill="#7fb4b8"/>
<path d="M0 0 H55 V17 L28 13 L4 10 L0 12Z" fill="#2f9482"/>
<path d="M0 0 H3.500 Q3 8 1.500 15 L0 16Z" fill="#23263a"/><rect x="0.300" y="3" width="1" height="7" fill="#d8c8a8"/>
<path d="M14 10 Q6 11 7 17 Q1 19 3 25 Q0 30 5 33 Q3 38 8 40 Q6 45 10 46 Q14 46 15 40 L16 14Z" fill="#d063b0" stroke="#7a3a6a" stroke-width="0.500"/>
<path d="M9 51 Q14 47 18 52 L19 55 H9Z" fill="#d8d8d8" stroke="#444" stroke-width="0.500"/><path d="M11 55 Q14 51 19 55Z" fill="#d063b0"/>
<path d="M14 33 Q13 22 17 14 Q22 8 28 12 L38 14 Q48 18 47 28 Q46 35 40 36 Q47 40 47 47 Q46 51 42 50 L40 55 H22 Q15 50 14 33Z" fill="#4fc05a" stroke="#2a5a2e" stroke-width="0.600"/>
<ellipse cx="22" cy="14.500" rx="6.500" ry="7.500" fill="#dcdcdc" stroke="#444" stroke-width="0.500" transform="rotate(-15 22 14.500)"/>
<ellipse cx="35" cy="11" rx="7" ry="7.500" fill="#dcdcdc" stroke="#444" stroke-width="0.500" transform="rotate(-10 35 11)"/>
<path d="M16 10 Q19 2 26 6 L27 10 Q21 7 16.500 12Z" fill="#4fc05a" stroke="#2a5a2e" stroke-width="0.500"/>
<path d="M27 8 Q31 -1 39 3 Q41 5 41 8 Q34 3 28 9Z" fill="#4fc05a" stroke="#2a5a2e" stroke-width="0.500"/>
<circle cx="23" cy="12.500" r="2.600" fill="#1f6a2a"/><circle cx="23.500" cy="12" r="1.200" fill="#fff"/>
<circle cx="34.500" cy="9.500" r="2.600" fill="#1f6a2a"/><circle cx="35" cy="9" r="1.200" fill="#fff"/>
<ellipse cx="36" cy="25" rx="11" ry="10.500" fill="#4fc05a" stroke="#2a5a2e" stroke-width="0.600"/>
<path d="M29 28 Q31 29.500 33 28.500" stroke="#2a5a2e" stroke-width="0.600" fill="none"/>
<path d="M19 31 Q20 28 24 30 L32 37 L28 40 L20 36Z" fill="#dcdcdc" stroke="#444" stroke-width="0.500"/>
<path d="M15 40 Q22 44 30 40 Q38 35 46 38 Q48 44 44 48 Q36 46 30 48 Q22 52 16 46Z" fill="#4fc05a" stroke="#2a5a2e" stroke-width="0.600"/>
<path d="M18 36 Q22 33 25 36 Q28 38 25 41 Q21 42 18 36Z" fill="#4fc05a" stroke="#2a5a2e" stroke-width="0.500"/>
<path d="M26 50 Q33 47 40 50 L41 55 H25Z" fill="#dcdcdc" stroke="#444" stroke-width="0.500"/>
</svg>

</div>

<!-- ============ BELOW PLAYER ============ -->
<div class="t b" id="title" style="left:48px;top:802px;font-size:27px;color:#f1f1f1;letter-spacing:-0.5px">Art Stream with The Amazing Digital Wonderland</div>
<div class="abs" id="chav" style="left:48px;top:845px;width:55px;height:55px;border-radius:50%;overflow:hidden;background:#2a2058">
  <svg style="left:0;top:0" width="55" height="55" viewBox="0 0 55 55"><rect width="55" height="55" fill="#16114c"/><path d="M36 0 H55 V55 H30 Q48 40 50 22 Q50 8 36 0Z" fill="#252596"/><path d="M20 8 Q24 2 33 3.500 Q41 5 40 14 Q42 22 38 28 L34 36 L22 36 Q16 34 14 40 Q10 44 6 40 Q5 36 9 34 Q8 29 12 26 Q9 21 13 17 Q10 11 16 9Z" fill="#3d2230"/><ellipse cx="25.500" cy="20" rx="8.500" ry="10.500" fill="#f4c9a8"/><path d="M17 18 Q18 8 28 8 Q36 8 36 16 Q31 10 24 12 Q19 13 17 18Z" fill="#3d2230"/><path d="M22 30 L26 33 L36 28 L40 36 L24 40 L20 36Z" fill="#f2bd98"/><ellipse cx="20.500" cy="19.800" rx="2" ry="2.700" fill="#fff"/><ellipse cx="28" cy="17.700" rx="2.200" ry="2.800" fill="#fff"/><ellipse cx="20.700" cy="20" rx="1" ry="1.800" fill="#2f8a2a"/><ellipse cx="28.200" cy="18" rx="1" ry="1.800" fill="#2f8a2a"/><ellipse cx="26.500" cy="26.500" rx="4" ry="3" fill="#f28a90"/><path d="M31 24 Q34 30 40 31 L36 38 Q30 36 29 30Z" fill="#3d2230"/><path d="M8 47 Q14 40 22 37 Q30 40 38 34 L40 22 Q46 21 50 27 Q52 36 50 42 Q44 52 34 55 H14 Q10 52 8 47Z" fill="#8791a2"/><path d="M40 36 Q44 30 50 34 Q50 42 44 50 Q40 46 40 36Z" fill="#7a6a9a" opacity="0.600"/><path d="M36 22 Q34 16 37 13 L41.500 12 L42 5.500 Q43.500 4.500 44 6.500 L44.500 16 Q44 21 41 23Z" fill="#f4c9a8"/><rect x="33" y="17" width="5" height="7.500" rx="2" fill="#3ac9a8" transform="rotate(-20 35.500 20.700)"/><rect x="40" y="9" width="6" height="7" rx="2" fill="#3ac9a8" transform="rotate(-25 43 12.500)"/></svg>
</div>
<div class="t b" id="chname" style="left:119px;top:851px;font-size:21.600px;color:#f1f1f1;letter-spacing:-0.65px">Snoopy 7c7</div>
<div class="t" id="subs" style="left:119px;top:881px;font-size:16.500px;color:#aaa">66.6K subscribers</div>

<div class="pill" style="left:290px;top:850px;width:102px;height:49px"></div>
<svg style="left:305px;top:857px" width="32" height="34" viewBox="0 0 32 34"><path d="M16 3.5 C10 3.5 7.500 8.500 7.500 13 V19.500 L4 25.500 H28 L24.500 19.500 V13 C24.500 8.500 22 3.500 16 3.500Z" fill="none" stroke="#fff" stroke-width="2.300" stroke-linejoin="round"/><path d="M12 27.500 C13 32.500 19 32.500 20 27.500" fill="none" stroke="#fff" stroke-width="2.300"/></svg>
<svg style="left:350px;top:866px" width="24" height="16" viewBox="0 0 24 16"><path d="M3 4 L12 13 L21 4" fill="none" stroke="#fff" stroke-width="2.400" stroke-linecap="round" stroke-linejoin="round"/></svg>

<!-- like / dislike -->
<div class="pill" style="left:648px;top:850px;width:181px;height:49px"></div>
<svg style="left:662px;top:857px" width="32" height="32" viewBox="0 0 32 32"><path d="M3 14.500 H9 V28.500 H3Z M9 15 C13 12 15 8 15.500 3.500 C16 1.500 20.500 2 20 7 L19 12.500 H27 C29.500 12.500 30.500 14.500 30 16.500 L27.500 26 C27 28 25.500 28.500 24 28.500 H9" fill="none" stroke="#fff" stroke-width="2.300" stroke-linejoin="round"/></svg>
<div class="t b" id="likes" style="left:703.500px;top:865px;font-size:18.500px;color:#fff;letter-spacing:0.5px">174</div>
<div class="abs" style="left:756px;top:858px;width:1.500px;height:33px;background:#4d4d4d"></div>
<svg style="left:774px;top:859px" width="32" height="32" viewBox="0 0 32 32"><g transform="rotate(180 16 16)"><path d="M3 14.500 H9 V28.500 H3Z M9 15 C13 12 15 8 15.500 3.500 C16 1.500 20.500 2 20 7 L19 12.500 H27 C29.500 12.500 30.500 14.500 30 16.500 L27.500 26 C27 28 25.500 28.500 24 28.500 H9" fill="none" stroke="#fff" stroke-width="2.300" stroke-linejoin="round"/></g></svg>

<!-- share -->
<div class="pill" style="left:840px;top:850px;width:127px;height:49px"></div>
<svg style="left:854px;top:858px" width="32" height="32" viewBox="0 0 32 32"><path d="M18 4 L30 15 L18 26 V19.500 C10 19.500 5.500 22 2.500 28 C3 18 8 11.500 18 10.500Z" fill="none" stroke="#fff" stroke-width="2.300" stroke-linejoin="round"/></svg>
<div class="t b" id="share" style="left:896px;top:865px;font-size:18.500px;color:#fff;letter-spacing:-0.5px">Share</div>

<!-- clip -->
<div class="pill" style="left:978px;top:850px;width:110px;height:49px"></div>
<svg style="left:992px;top:858px" width="32" height="32" viewBox="0 0 32 32"><circle cx="7" cy="7.500" r="4.200" fill="none" stroke="#fff" stroke-width="2.300"/><circle cx="7" cy="24.500" r="4.200" fill="none" stroke="#fff" stroke-width="2.300"/><path d="M10 10.500 L29 28 M10 21.500 L29 4" stroke="#fff" stroke-width="2.300" stroke-linecap="round"/></svg>
<div class="t b" id="clip" style="left:1033px;top:865px;font-size:18.500px;color:#fff;letter-spacing:-0.6px">Clip</div>

<!-- save -->
<div class="pill" style="left:1099px;top:850px;width:119px;height:49px"></div>
<svg style="left:1113px;top:858px" width="32" height="32" viewBox="0 0 32 32"><path d="M5 3 H27 V29 L16 22.500 L5 29Z" fill="none" stroke="#fff" stroke-width="2.300" stroke-linejoin="round"/></svg>
<div class="t b" id="save" style="left:1154px;top:865px;font-size:18.500px;color:#fff;letter-spacing:-0.4px">Save</div>

<!-- more -->
<div class="pill" style="left:1229px;top:850px;width:49px;height:49px"></div>
<svg style="left:1240px;top:869px" width="28" height="10" viewBox="0 0 28 10"><circle cx="4.700" cy="5" r="2.700" fill="#fff"/><circle cx="13.800" cy="5" r="2.700" fill="#fff"/><circle cx="22.800" cy="5" r="2.700" fill="#fff"/></svg>

<!-- ============ CHAT ============ -->
<div id="chat" class="abs" style="left:1300px;top:88px;width:553px;height:820px;border:1px solid #3a3a3a;border-radius:16px;background:#0f0f0f"></div>
<div class="abs" style="left:1301px;top:155px;width:551px;height:1px;background:#3a3a3a"></div>
<div class="abs" style="left:1301px;top:829px;width:551px;height:1px;background:#3a3a3a"></div>
<div class="t" id="topchat" style="left:1334px;top:110.500px;font-size:22.200px;color:#f1f1f1">Top chat</div>
<svg style="left:1424px;top:114px" width="24" height="18" viewBox="0 0 24 18"><path d="M3.500 4.500 L12 14 L20.500 4.500" fill="none" stroke="#fff" stroke-width="2.400" stroke-linecap="round" stroke-linejoin="round"/></svg>
<div class="abs" style="left:1652px;top:106px;width:79px;height:33px;border:1px solid #3f3f3f;border-radius:17px"></div>
<svg style="left:1660px;top:113px" width="22" height="18" viewBox="0 0 22 18"><path d="M1 2.500 L6.500 8.500 L11 1.500 L15.500 8.500 L21 2.500 V13 H1Z" fill="#8b5cf6"/><rect x="1" y="14.500" width="20" height="3" fill="#8b5cf6"/></svg>
<div class="t b" id="xp" style="left:1685px;top:112.500px;font-size:18.500px;color:#f1f1f1;letter-spacing:-0.4px">0XP</div>
<svg style="left:1753px;top:109px" width="10" height="26" viewBox="0 0 10 26"><circle cx="5.300" cy="5.200" r="2.700" fill="#fff"/><circle cx="5.300" cy="13.200" r="2.700" fill="#fff"/><circle cx="5.300" cy="21.400" r="2.700" fill="#fff"/></svg>
<svg style="left:1802px;top:111px" width="23" height="23" viewBox="0 0 23 23"><path d="M2.500 2.500 L20.500 20.500 M20.500 2.500 L2.500 20.500" stroke="#fff" stroke-width="2.500" stroke-linecap="round"/></svg>

<div id="chatlist" class="abs" style="left:1301px;top:156px;width:551px;height:673px;overflow:hidden">
<!-- y coords relative to chatlist top (156) -->
<!-- 0 cut-off message -->
<div class="av" style="left:33px;top:-19px;background:#e8d8c0"><svg width="33" height="33" viewBox="0 0 33 33"><rect width="33" height="33" fill="#e9dcc6"/><ellipse cx="16" cy="18" rx="9" ry="9" fill="#f3b9a5"/><path d="M5 14 Q16 2 28 14 Q20 10 5 14Z" fill="#e36aa0"/><ellipse cx="16" cy="22" rx="2.500" ry="1.500" fill="#c2183a"/><path d="M6 30 Q16 24 27 30 V33 H6Z" fill="#4a62b8"/></svg></div>
<div class="msg" style="left:88px;top:-20px"><span class="au">@Cory-mw</span><span class="em" style="margin-left:1.5px"><svg width="33.6" height="33.6" viewBox="0 0 34 34"><path d="M13.300 33.600 C11 30 4 26 1.500 19 C-0.500 13 0.500 5 5.500 1.800 C9.500 -0.800 14 1 16 4.500 C18.500 1.800 24 1 28.500 3.500 C33.500 6.500 34.500 12 32.500 17 C30 23 22 27 13.300 33.600Z" fill="#f5104e"/>
  <ellipse cx="24" cy="20" rx="7" ry="5" fill="#ff2a3a" opacity="0.550"/>
  <circle cx="11" cy="7.200" r="5.600" fill="#fff"/><circle cx="21.800" cy="9.800" r="5.600" fill="#fff"/>
  <ellipse cx="7.900" cy="7.600" rx="2.500" ry="4.200" fill="#0d0508" transform="rotate(18 7.900 7.600)"/><ellipse cx="18.800" cy="10.300" rx="2.500" ry="4.200" fill="#0d0508" transform="rotate(18 18.800 10.300)"/>
  <ellipse cx="8.600" cy="5.600" rx="1" ry="1.400" fill="#fff" transform="rotate(18 8.600 5.600)"/><ellipse cx="19.500" cy="8.300" rx="1" ry="1.400" fill="#fff" transform="rotate(18 19.500 8.300)"/>
  <path d="M6.400 15 Q11.500 17 16.600 15.800 Q16.500 21 11.500 21 Q7 20.500 6.400 15Z" fill="#3a0515"/>
  <path d="M0.200 22.500 C0.200 20.500 3.500 19.800 4.500 22 C6 21.500 7.500 23 7 24.500 C8.800 24.500 9.800 26 9 27.500 C10.800 28 11.500 29.500 10.500 31 C9.500 32.800 7 32.500 5.500 31 C3 28.500 0.200 25.500 0.200 22.500Z" fill="#0aa5f5"/>
  <path d="M33.800 20.800 C31 19.500 27 20.200 25 22 C23 21 20.500 21.500 19.500 23.500 C17.500 23.500 15.500 25.500 16.500 27.500 C15 28.500 15.500 31 17.500 31.500 C21 33 28 33 33.800 32.300Z" fill="#0aa5f5"/>
  <path d="M3.200 24.500 L5 26.500 M5.500 27.500 L7.300 29.300 M19.500 26.500 L22.500 28.500 M21.500 24 L24.500 26" stroke="#0868c8" stroke-width="0.800" stroke-linecap="round"/></svg></span></div>

<!-- 1 Gr4c3R0d -->
<div class="av" style="left:33px;top:25px;background:#5d4037"><div class="t" style="left:9.500px;top:8px;font-size:17.500px;color:#fff">G</div></div>
<div class="msg" style="left:88px;top:30px"><span class="au">@Gr4c3R0d</span>omg they are so cute</div>

<!-- 2 StarryGuitar -->
<div class="av" style="left:33px;top:69px"><svg width="33" height="33" viewBox="0 0 33 33"><rect width="33" height="33" fill="#4a2d8f"/><circle cx="8" cy="8" r="7" fill="#2a3fb0"/><circle cx="25" cy="10" r="6" fill="#c23a8a"/><ellipse cx="17" cy="19" rx="9" ry="8" fill="#8e6bc9"/><ellipse cx="15" cy="18" rx="4.500" ry="4" fill="#e8dff5"/><path d="M2 28 Q16 20 31 30 V33 H2Z" fill="#c4225f"/><circle cx="27" cy="26" r="3" fill="#3558d8"/></svg></div>
<div class="msg" style="left:88px;top:67px;line-height:33px"><span class="au" style="margin-right:9.5px">@StarryGuitar</span><span class="em"><svg width="33.6" height="33.6" viewBox="0 0 34 34"><path d="M13.300 33.600 C11 30 4 26 1.500 19 C-0.500 13 0.500 5 5.500 1.800 C9.500 -0.800 14 1 16 4.500 C18.500 1.800 24 1 28.500 3.500 C33.500 6.500 34.500 12 32.500 17 C30 23 22 27 13.300 33.600Z" fill="#f5104e"/>
  <ellipse cx="24" cy="20" rx="7" ry="5" fill="#ff2a3a" opacity="0.550"/>
  <circle cx="11" cy="7.200" r="5.600" fill="#fff"/><circle cx="21.800" cy="9.800" r="5.600" fill="#fff"/>
  <ellipse cx="7.900" cy="7.600" rx="2.500" ry="4.200" fill="#0d0508" transform="rotate(18 7.900 7.600)"/><ellipse cx="18.800" cy="10.300" rx="2.500" ry="4.200" fill="#0d0508" transform="rotate(18 18.800 10.300)"/>
  <ellipse cx="8.600" cy="5.600" rx="1" ry="1.400" fill="#fff" transform="rotate(18 8.600 5.600)"/><ellipse cx="19.500" cy="8.300" rx="1" ry="1.400" fill="#fff" transform="rotate(18 19.500 8.300)"/>
  <path d="M6.400 15 Q11.500 17 16.600 15.800 Q16.500 21 11.500 21 Q7 20.500 6.400 15Z" fill="#3a0515"/>
  <path d="M0.200 22.500 C0.200 20.500 3.500 19.800 4.500 22 C6 21.500 7.500 23 7 24.500 C8.800 24.500 9.800 26 9 27.500 C10.800 28 11.500 29.500 10.500 31 C9.500 32.800 7 32.500 5.500 31 C3 28.500 0.200 25.500 0.200 22.500Z" fill="#0aa5f5"/>
  <path d="M33.800 20.800 C31 19.500 27 20.200 25 22 C23 21 20.500 21.500 19.500 23.500 C17.500 23.500 15.500 25.500 16.500 27.500 C15 28.500 15.500 31 17.500 31.500 C21 33 28 33 33.800 32.300Z" fill="#0aa5f5"/>
  <path d="M3.200 24.500 L5 26.500 M5.500 27.500 L7.300 29.300 M19.500 26.500 L22.500 28.500 M21.500 24 L24.500 26" stroke="#0868c8" stroke-width="0.800" stroke-linecap="round"/></svg></span><span class="em"><svg width="33.6" height="33.6" viewBox="0 0 34 34"><path d="M13.300 33.600 C11 30 4 26 1.500 19 C-0.500 13 0.500 5 5.500 1.800 C9.500 -0.800 14 1 16 4.500 C18.500 1.800 24 1 28.500 3.500 C33.500 6.500 34.500 12 32.500 17 C30 23 22 27 13.300 33.600Z" fill="#f5104e"/>
  <ellipse cx="24" cy="20" rx="7" ry="5" fill="#ff2a3a" opacity="0.550"/>
  <circle cx="11" cy="7.200" r="5.600" fill="#fff"/><circle cx="21.800" cy="9.800" r="5.600" fill="#fff"/>
  <ellipse cx="7.900" cy="7.600" rx="2.500" ry="4.200" fill="#0d0508" transform="rotate(18 7.900 7.600)"/><ellipse cx="18.800" cy="10.300" rx="2.500" ry="4.200" fill="#0d0508" transform="rotate(18 18.800 10.300)"/>
  <ellipse cx="8.600" cy="5.600" rx="1" ry="1.400" fill="#fff" transform="rotate(18 8.600 5.600)"/><ellipse cx="19.500" cy="8.300" rx="1" ry="1.400" fill="#fff" transform="rotate(18 19.500 8.300)"/>
  <path d="M6.400 15 Q11.500 17 16.600 15.800 Q16.500 21 11.500 21 Q7 20.500 6.400 15Z" fill="#3a0515"/>
  <path d="M0.200 22.500 C0.200 20.500 3.500 19.800 4.500 22 C6 21.500 7.500 23 7 24.500 C8.800 24.500 9.800 26 9 27.500 C10.800 28 11.500 29.500 10.500 31 C9.500 32.800 7 32.500 5.500 31 C3 28.500 0.200 25.500 0.200 22.500Z" fill="#0aa5f5"/>
  <path d="M33.800 20.800 C31 19.500 27 20.200 25 22 C23 21 20.500 21.500 19.500 23.500 C17.500 23.500 15.500 25.500 16.500 27.500 C15 28.500 15.500 31 17.500 31.500 C21 33 28 33 33.800 32.300Z" fill="#0aa5f5"/>
  <path d="M3.200 24.500 L5 26.500 M5.500 27.500 L7.300 29.300 M19.500 26.500 L22.500 28.500 M21.500 24 L24.500 26" stroke="#0868c8" stroke-width="0.800" stroke-linecap="round"/></svg></span><span class="em"><svg width="33.6" height="33.6" viewBox="0 0 34 34"><path d="M13.300 33.600 C11 30 4 26 1.500 19 C-0.500 13 0.500 5 5.500 1.800 C9.500 -0.800 14 1 16 4.500 C18.500 1.800 24 1 28.500 3.500 C33.500 6.500 34.500 12 32.500 17 C30 23 22 27 13.300 33.600Z" fill="#f5104e"/>
  <ellipse cx="24" cy="20" rx="7" ry="5" fill="#ff2a3a" opacity="0.550"/>
  <circle cx="11" cy="7.200" r="5.600" fill="#fff"/><circle cx="21.800" cy="9.800" r="5.600" fill="#fff"/>
  <ellipse cx="7.900" cy="7.600" rx="2.500" ry="4.200" fill="#0d0508" transform="rotate(18 7.900 7.600)"/><ellipse cx="18.800" cy="10.300" rx="2.500" ry="4.200" fill="#0d0508" transform="rotate(18 18.800 10.300)"/>
  <ellipse cx="8.600" cy="5.600" rx="1" ry="1.400" fill="#fff" transform="rotate(18 8.600 5.600)"/><ellipse cx="19.500" cy="8.300" rx="1" ry="1.400" fill="#fff" transform="rotate(18 19.500 8.300)"/>
  <path d="M6.400 15 Q11.500 17 16.600 15.800 Q16.500 21 11.500 21 Q7 20.500 6.400 15Z" fill="#3a0515"/>
  <path d="M0.200 22.500 C0.200 20.500 3.500 19.800 4.500 22 C6 21.500 7.500 23 7 24.500 C8.800 24.500 9.800 26 9 27.500 C10.800 28 11.500 29.500 10.500 31 C9.500 32.800 7 32.500 5.500 31 C3 28.500 0.200 25.500 0.200 22.500Z" fill="#0aa5f5"/>
  <path d="M33.800 20.800 C31 19.500 27 20.200 25 22 C23 21 20.500 21.500 19.500 23.500 C17.500 23.500 15.500 25.500 16.500 27.500 C15 28.500 15.500 31 17.500 31.500 C21 33 28 33 33.800 32.300Z" fill="#0aa5f5"/>
  <path d="M3.200 24.500 L5 26.500 M5.500 27.500 L7.300 29.300 M19.500 26.500 L22.500 28.500 M21.500 24 L24.500 26" stroke="#0868c8" stroke-width="0.800" stroke-linecap="round"/></svg></span><span class="em"><svg width="33.6" height="33.6" viewBox="0 0 34 34"><path d="M13.300 33.600 C11 30 4 26 1.500 19 C-0.500 13 0.500 5 5.500 1.800 C9.500 -0.800 14 1 16 4.500 C18.500 1.800 24 1 28.500 3.500 C33.500 6.500 34.500 12 32.500 17 C30 23 22 27 13.300 33.600Z" fill="#f5104e"/>
  <ellipse cx="24" cy="20" rx="7" ry="5" fill="#ff2a3a" opacity="0.550"/>
  <circle cx="11" cy="7.200" r="5.600" fill="#fff"/><circle cx="21.800" cy="9.800" r="5.600" fill="#fff"/>
  <ellipse cx="7.900" cy="7.600" rx="2.500" ry="4.200" fill="#0d0508" transform="rotate(18 7.900 7.600)"/><ellipse cx="18.800" cy="10.300" rx="2.500" ry="4.200" fill="#0d0508" transform="rotate(18 18.800 10.300)"/>
  <ellipse cx="8.600" cy="5.600" rx="1" ry="1.400" fill="#fff" transform="rotate(18 8.600 5.600)"/><ellipse cx="19.500" cy="8.300" rx="1" ry="1.400" fill="#fff" transform="rotate(18 19.500 8.300)"/>
  <path d="M6.400 15 Q11.500 17 16.600 15.800 Q16.500 21 11.500 21 Q7 20.500 6.400 15Z" fill="#3a0515"/>
  <path d="M0.200 22.500 C0.200 20.500 3.500 19.800 4.500 22 C6 21.500 7.500 23 7 24.500 C8.800 24.500 9.800 26 9 27.500 C10.800 28 11.500 29.500 10.500 31 C9.500 32.800 7 32.500 5.500 31 C3 28.500 0.200 25.500 0.200 22.500Z" fill="#0aa5f5"/>
  <path d="M33.800 20.800 C31 19.500 27 20.200 25 22 C23 21 20.500 21.500 19.500 23.500 C17.500 23.500 15.500 25.500 16.500 27.500 C15 28.500 15.500 31 17.500 31.500 C21 33 28 33 33.800 32.300Z" fill="#0aa5f5"/>
  <path d="M3.200 24.500 L5 26.500 M5.500 27.500 L7.300 29.300 M19.500 26.500 L22.500 28.500 M21.500 24 L24.500 26" stroke="#0868c8" stroke-width="0.800" stroke-linecap="round"/></svg></span></div>

<!-- 3 nadir -->
<div class="av" style="left:33px;top:113px"><svg width="33" height="33" viewBox="0 0 33 33"><rect width="33" height="33" fill="#111"/><path d="M1 20 Q-1 5 10 3 Q16 0 23 3 Q34 6 32 20 Q31 26 26 27 L7 27 Q1 26 1 20Z" fill="#8a3c12"/><path d="M6 10 Q12 3 20 5 Q27 6 29 14 Q22 8 15 10 Q9 11 6 16Z" fill="#c06a22"/><path d="M3 18 Q8 12 12 18 Q16 12 21 17 Q25 13 30 19 L28 26 H5Z" fill="#a34a16"/><ellipse cx="16.500" cy="23" rx="7" ry="6" fill="#f2b84a"/><circle cx="13.500" cy="22" r="1.300" fill="#2a66c0"/><circle cx="19.500" cy="22" r="1.300" fill="#2a66c0"/><path d="M11 33 Q12 28 16.500 28 Q21 28 22 33Z" fill="#1a1a1a"/></svg></div>
<div class="msg" style="left:88px;top:112px"><span style="display:block;height:33px;line-height:33px"><span class="au">@nadir-loves-digna-and-brivonn</span><span class="bdg"><svg style="left:9px;top:6px" width="20" height="20" viewBox="0 0 25 25"><path d="M2.500 6 L8 11.500 L12.500 3.500 L17 11.500 L22.500 6 L20.500 17 H4.500Z" fill="none" stroke="#e9defc" stroke-width="2" stroke-linejoin="round"/>
  <path d="M4.500 21 H20.500" stroke="#e9defc" stroke-width="2.200" stroke-linecap="round"/></svg><span>#2</span></span>sorry my</span><span style="display:block;margin-top:1px">earbuds are broken that's why i can't turn off the<br>volume if i do people will here and say what are you<br>hearing and then steal my phone</span></div>

<!-- 4 RibbitFan-1 -->
<div class="av" style="left:33px;top:223px"><svg width="33" height="33" viewBox="0 0 33 33"><rect width="33" height="33" fill="#3f5350"/><ellipse cx="16" cy="17" rx="11" ry="10" fill="#cfdad6"/><circle cx="11" cy="13" r="5" fill="#eef3f1" stroke="#43524f" stroke-width="1.500"/><circle cx="21" cy="13" r="5" fill="#eef3f1" stroke="#43524f" stroke-width="1.500"/><circle cx="11" cy="13" r="2" fill="#2a3432"/><circle cx="21" cy="13" r="2" fill="#2a3432"/><path d="M9 22 Q16 27 23 22" stroke="#43524f" stroke-width="1.500" fill="none"/></svg></div>
<div class="msg" style="left:88px;top:223px"><span class="au" style="margin-right:13px">@RibbitFan-1</span><span class="mbi">𝒊𝒔 𝒕𝒂𝒅𝒄 𝒘𝒐𝒏𝒅𝒆𝒓𝒍𝒂𝒏𝒅 𝒈𝒐𝒏𝒏𝒂 𝒃𝒆 𝒂𝒏<br>𝒂𝒏𝒊𝒎𝒂𝒕𝒆𝒅 𝒇𝒊𝒍𝒎??</span></div>

<!-- 5 dragonprobro -->
<div class="av" style="left:33px;top:278px"><svg width="33" height="33" viewBox="0 0 33 33"><rect width="33" height="33" fill="#fff"/><path d="M9 6 Q14 2 17 7 Q19 10 15 13 Q22 13 24 19 Q25 26 19 28 L10 28 Q8 22 12 18 Q8 14 9 6Z" fill="#e6c32a"/><path d="M20 12 Q27 10 25 17" stroke="#d9b21e" stroke-width="2" fill="none"/><circle cx="13" cy="8" r="1" fill="#7a2a2a"/><path d="M10 23 L16 24" stroke="#b3351f" stroke-width="1.500"/></svg></div>
<div class="msg" style="left:88px;top:278px"><span class="au">@dragonprobro</span>IM PLANNING MY OWN AU IF<br>YOU'RE INTERESTED</div>

<!-- 6 V_331s -->
<div class="av" style="left:33px;top:333px"><svg width="33" height="33" viewBox="0 0 33 33"><rect width="33" height="33" fill="#1f6fd0"/><path d="M0 0 H14 L6 14 L0 10Z" fill="#1a3fa6"/><path d="M18 0 L33 0 V20 L24 10Z" fill="#0f2a6e"/><path d="M6 16 L20 12 L24 22 L10 26Z" fill="#14171f"/><path d="M11 20 H20 V29 H11Z" fill="#e6eef7"/><path d="M0 24 Q10 20 12 33 H0Z" fill="#2a8ae8"/><path d="M22 24 L33 20 V33 H20Z" fill="#173d9e"/></svg></div>
<div class="msg" style="left:88px;top:333px"><span class="au">@V_331s</span>Question,How did u get the idea for this<br>au?</div>

<!-- 7 jeremiahhenry3598 -->
<div class="av" style="left:33px;top:388px"><svg width="33" height="33" viewBox="0 0 33 33"><rect width="33" height="33" fill="#e9d6b8"/><circle cx="16.500" cy="15" r="10" fill="#f3e29a"/><circle cx="16.500" cy="15" r="5" fill="#f0c9c0"/><path d="M6 30 Q16 22 27 30 V33 H6Z" fill="#e8c4cf"/><circle cx="9" cy="9" r="2" fill="#d9b0c6"/><circle cx="24" cy="9" r="2" fill="#d9b0c6"/></svg></div>
<div class="msg" style="left:88px;top:393px"><span class="au">@jeremiahhenry3598</span>can you draw caine kiss vox</div>

<!-- 8 FuschiaPumba -->
<div class="av" style="left:33px;top:432px"><svg width="33" height="33" viewBox="0 0 33 33"><rect width="33" height="33" fill="#e8f1f2"/><path d="M26 0 H33 V18 Q28 12 26 0Z" fill="#b87850"/><circle cx="21" cy="9" r="5" fill="#27324f"/><ellipse cx="21" cy="11" rx="3.500" ry="3.500" fill="#f6e3dc"/><circle cx="12" cy="19" r="5.500" fill="#9fd0d8"/><ellipse cx="12" cy="21" rx="3.800" ry="3.500" fill="#f8ece6"/><path d="M3 33 Q6 24 14 26 L24 18 Q30 20 30 33Z" fill="#fbfbfb"/><path d="M2 12 L8 20" stroke="#c8d8c0" stroke-width="2"/></svg></div>
<div class="msg" style="left:88px;top:432px"><span class="au">@FuschiaPumba</span>Jolly_ranchers3, if u wanna voice<br>act, try voicing over for example episodes of TADC,<br>its fun and u learn from it!</div>

<!-- 9 StarryGuitar -->
<div class="av" style="left:33px;top:509px"><svg width="33" height="33" viewBox="0 0 33 33"><rect width="33" height="33" fill="#4a2d8f"/><circle cx="8" cy="8" r="7" fill="#2a3fb0"/><circle cx="25" cy="10" r="6" fill="#c23a8a"/><ellipse cx="17" cy="19" rx="9" ry="8" fill="#8e6bc9"/><ellipse cx="15" cy="18" rx="4.500" ry="4" fill="#e8dff5"/><path d="M2 28 Q16 20 31 30 V33 H2Z" fill="#c4225f"/><circle cx="27" cy="26" r="3" fill="#3558d8"/></svg></div>
<div class="msg" style="left:88px;top:507px;line-height:33px"><span class="au" style="margin-right:9.5px">@StarryGuitar</span><span class="em"><svg width="33.6" height="33.6" viewBox="0 0 34 34"><path d="M13.300 33.600 C11 30 4 26 1.500 19 C-0.500 13 0.500 5 5.500 1.800 C9.500 -0.800 14 1 16 4.500 C18.500 1.800 24 1 28.500 3.500 C33.500 6.500 34.500 12 32.500 17 C30 23 22 27 13.300 33.600Z" fill="#f5104e"/>
  <ellipse cx="24" cy="20" rx="7" ry="5" fill="#ff2a3a" opacity="0.550"/>
  <circle cx="11" cy="7.200" r="5.600" fill="#fff"/><circle cx="21.800" cy="9.800" r="5.600" fill="#fff"/>
  <ellipse cx="7.900" cy="7.600" rx="2.500" ry="4.200" fill="#0d0508" transform="rotate(18 7.900 7.600)"/><ellipse cx="18.800" cy="10.300" rx="2.500" ry="4.200" fill="#0d0508" transform="rotate(18 18.800 10.300)"/>
  <ellipse cx="8.600" cy="5.600" rx="1" ry="1.400" fill="#fff" transform="rotate(18 8.600 5.600)"/><ellipse cx="19.500" cy="8.300" rx="1" ry="1.400" fill="#fff" transform="rotate(18 19.500 8.300)"/>
  <path d="M6.400 15 Q11.500 17 16.600 15.800 Q16.500 21 11.500 21 Q7 20.500 6.400 15Z" fill="#3a0515"/>
  <path d="M0.200 22.500 C0.200 20.500 3.500 19.800 4.500 22 C6 21.500 7.500 23 7 24.500 C8.800 24.500 9.800 26 9 27.500 C10.800 28 11.500 29.500 10.500 31 C9.500 32.800 7 32.500 5.500 31 C3 28.500 0.200 25.500 0.200 22.500Z" fill="#0aa5f5"/>
  <path d="M33.800 20.800 C31 19.500 27 20.200 25 22 C23 21 20.500 21.500 19.500 23.500 C17.500 23.500 15.500 25.500 16.500 27.500 C15 28.500 15.500 31 17.500 31.500 C21 33 28 33 33.800 32.300Z" fill="#0aa5f5"/>
  <path d="M3.200 24.500 L5 26.500 M5.500 27.500 L7.300 29.300 M19.500 26.500 L22.500 28.500 M21.500 24 L24.500 26" stroke="#0868c8" stroke-width="0.800" stroke-linecap="round"/></svg></span><span class="em"><svg width="33.6" height="33.6" viewBox="0 0 34 34"><path d="M13.300 33.600 C11 30 4 26 1.500 19 C-0.500 13 0.500 5 5.500 1.800 C9.500 -0.800 14 1 16 4.500 C18.500 1.800 24 1 28.500 3.500 C33.500 6.500 34.500 12 32.500 17 C30 23 22 27 13.300 33.600Z" fill="#f5104e"/>
  <ellipse cx="24" cy="20" rx="7" ry="5" fill="#ff2a3a" opacity="0.550"/>
  <circle cx="11" cy="7.200" r="5.600" fill="#fff"/><circle cx="21.800" cy="9.800" r="5.600" fill="#fff"/>
  <ellipse cx="7.900" cy="7.600" rx="2.500" ry="4.200" fill="#0d0508" transform="rotate(18 7.900 7.600)"/><ellipse cx="18.800" cy="10.300" rx="2.500" ry="4.200" fill="#0d0508" transform="rotate(18 18.800 10.300)"/>
  <ellipse cx="8.600" cy="5.600" rx="1" ry="1.400" fill="#fff" transform="rotate(18 8.600 5.600)"/><ellipse cx="19.500" cy="8.300" rx="1" ry="1.400" fill="#fff" transform="rotate(18 19.500 8.300)"/>
  <path d="M6.400 15 Q11.500 17 16.600 15.800 Q16.500 21 11.500 21 Q7 20.500 6.400 15Z" fill="#3a0515"/>
  <path d="M0.200 22.500 C0.200 20.500 3.500 19.800 4.500 22 C6 21.500 7.500 23 7 24.500 C8.800 24.500 9.800 26 9 27.500 C10.800 28 11.500 29.500 10.500 31 C9.500 32.800 7 32.500 5.500 31 C3 28.500 0.200 25.500 0.200 22.500Z" fill="#0aa5f5"/>
  <path d="M33.800 20.800 C31 19.500 27 20.200 25 22 C23 21 20.500 21.500 19.500 23.500 C17.500 23.500 15.500 25.500 16.500 27.500 C15 28.500 15.500 31 17.500 31.500 C21 33 28 33 33.800 32.300Z" fill="#0aa5f5"/>
  <path d="M3.200 24.500 L5 26.500 M5.500 27.500 L7.300 29.300 M19.500 26.500 L22.500 28.500 M21.500 24 L24.500 26" stroke="#0868c8" stroke-width="0.800" stroke-linecap="round"/></svg></span><span class="em"><svg width="33.6" height="33.6" viewBox="0 0 34 34"><path d="M13.300 33.600 C11 30 4 26 1.500 19 C-0.500 13 0.500 5 5.500 1.800 C9.500 -0.800 14 1 16 4.500 C18.500 1.800 24 1 28.500 3.500 C33.500 6.500 34.500 12 32.500 17 C30 23 22 27 13.300 33.600Z" fill="#f5104e"/>
  <ellipse cx="24" cy="20" rx="7" ry="5" fill="#ff2a3a" opacity="0.550"/>
  <circle cx="11" cy="7.200" r="5.600" fill="#fff"/><circle cx="21.800" cy="9.800" r="5.600" fill="#fff"/>
  <ellipse cx="7.900" cy="7.600" rx="2.500" ry="4.200" fill="#0d0508" transform="rotate(18 7.900 7.600)"/><ellipse cx="18.800" cy="10.300" rx="2.500" ry="4.200" fill="#0d0508" transform="rotate(18 18.800 10.300)"/>
  <ellipse cx="8.600" cy="5.600" rx="1" ry="1.400" fill="#fff" transform="rotate(18 8.600 5.600)"/><ellipse cx="19.500" cy="8.300" rx="1" ry="1.400" fill="#fff" transform="rotate(18 19.500 8.300)"/>
  <path d="M6.400 15 Q11.500 17 16.600 15.800 Q16.500 21 11.500 21 Q7 20.500 6.400 15Z" fill="#3a0515"/>
  <path d="M0.200 22.500 C0.200 20.500 3.500 19.800 4.500 22 C6 21.500 7.500 23 7 24.500 C8.800 24.500 9.800 26 9 27.500 C10.800 28 11.500 29.500 10.500 31 C9.500 32.800 7 32.500 5.500 31 C3 28.500 0.200 25.500 0.200 22.500Z" fill="#0aa5f5"/>
  <path d="M33.800 20.800 C31 19.500 27 20.200 25 22 C23 21 20.500 21.500 19.500 23.500 C17.500 23.500 15.500 25.500 16.500 27.500 C15 28.500 15.500 31 17.500 31.500 C21 33 28 33 33.800 32.300Z" fill="#0aa5f5"/>
  <path d="M3.200 24.500 L5 26.500 M5.500 27.500 L7.300 29.300 M19.500 26.500 L22.500 28.500 M21.500 24 L24.500 26" stroke="#0868c8" stroke-width="0.800" stroke-linecap="round"/></svg></span></div>

<!-- 10 martadarriba1954 -->
<div class="av" style="left:33px;top:553px"><svg width="33" height="33" viewBox="0 0 33 33"><rect width="33" height="33" fill="#1f6f8a"/><path d="M0 22 H33 V33 H0Z" fill="#2c8c7a"/><path d="M10 6 Q16 2 22 6 Q25 12 23 20 Q24 28 20 33 H12 Q8 28 10 20 Q7 12 10 6Z" fill="#2a5fa0"/><circle cx="21" cy="8" r="2.500" fill="#e8832a"/><circle cx="12" cy="8" r="1.500" fill="#102a50"/><path d="M4 14 L10 18 M29 14 L23 18" stroke="#7cc6a8" stroke-width="2.500" stroke-linecap="round"/></svg></div>
<div class="msg" style="left:88px;top:552px"><span style="display:block;height:33px;line-height:33px"><span class="au" style="letter-spacing:-0.2px">@martadarriba1954</span><span class="bdg"><svg style="left:9px;top:6px" width="20" height="20" viewBox="0 0 25 25"><path d="M2.500 6 L8 11.500 L12.500 3.500 L17 11.500 L22.500 6 L20.500 17 H4.500Z" fill="none" stroke="#e9defc" stroke-width="2" stroke-linejoin="round"/>
  <path d="M4.500 21 H20.500" stroke="#e9defc" stroke-width="2.200" stroke-linecap="round"/></svg><span>#3</span></span>¿My question is,</span><span style="display:block;margin-top:1px">when does the first episode premiere?</span></div>

<!-- 11 EnidFan28 -->
<div class="av" style="left:33px;top:619px"><svg width="33" height="33" viewBox="0 0 33 33"><rect width="33" height="33" fill="#d9c4f0"/><path d="M4 10 Q4 2 12 4 L20 3 Q28 6 24 12 L8 14Z" fill="#e44aa8"/><path d="M2 14 Q0 8 6 8 L8 16Z" fill="#d43a9a"/><ellipse cx="15" cy="16" rx="7" ry="6.500" fill="#f7c8b0"/><circle cx="12.500" cy="15" r="1" fill="#333"/><circle cx="18" cy="15" r="1" fill="#333"/><path d="M7 33 Q8 23 15 23 Q22 23 23 33Z" fill="#7a62d8"/><path d="M24 24 L27 14 M26 24 L30 15" stroke="#f7c8b0" stroke-width="2" stroke-linecap="round"/><circle cx="26" cy="26" r="3" fill="#f7c8b0"/></svg></div>
<div class="msg" style="left:88px;top:619px"><span class="au">@EnidFan28</span>Question for Snoopy: What made you<br>work on this TADW project</div>

</div>

<!-- chat scrollbar -->
<svg style="left:1836px;top:161px" width="14" height="12" viewBox="0 0 14 12"><path d="M7 2 L12.500 10 H1.500Z" fill="#9f9f9f" stroke="#9f9f9f" stroke-width="1" stroke-linejoin="round"/></svg>
<div class="abs" style="left:1837px;top:773px;width:11px;height:33px;border-radius:6px;background:#9f9f9f"></div>
<svg style="left:1836px;top:813px" width="14" height="12" viewBox="0 0 14 12"><path d="M1.500 2 H12.500 L7 10Z" fill="#9f9f9f" stroke="#9f9f9f" stroke-width="1" stroke-linejoin="round"/></svg>

<!-- chat input -->
<div class="pill" style="left:1334px;top:844px;width:419px;height:49px"></div>
<div class="t" id="chatph" style="left:1350.500px;top:858.500px;font-size:19px;color:#aaa">Chat...</div>
<svg style="left:1712px;top:852px" width="34" height="34" viewBox="0 0 34 34"><circle cx="16.500" cy="16.600" r="13.600" fill="none" stroke="#fff" stroke-width="2.300"/><circle cx="11.800" cy="12.500" r="2" fill="#fff"/><circle cx="21.200" cy="12.500" r="2" fill="#fff"/><path d="M9.500 19 C11.500 26 21.500 26 23.500 19" fill="none" stroke="#fff" stroke-width="2.300" stroke-linecap="round"/></svg>
<div class="pill" style="left:1770px;top:844px;width:49px;height:49px"></div>
<svg style="left:1778px;top:853px" width="34" height="32" viewBox="0 0 34 32"><path d="M16.500 28 C8 21 2.500 16 2.500 10 C2.500 5.500 6 3 9.500 3 C12.500 3 15 4.500 16.500 7.500 C18 4.500 20.500 3 23.500 3 C27 3 30.500 5.500 30.500 10 C30.500 16 25 21 16.500 28Z" fill="none" stroke="#fff" stroke-width="2.300" stroke-linejoin="round"/></svg>
</body>
</html>
